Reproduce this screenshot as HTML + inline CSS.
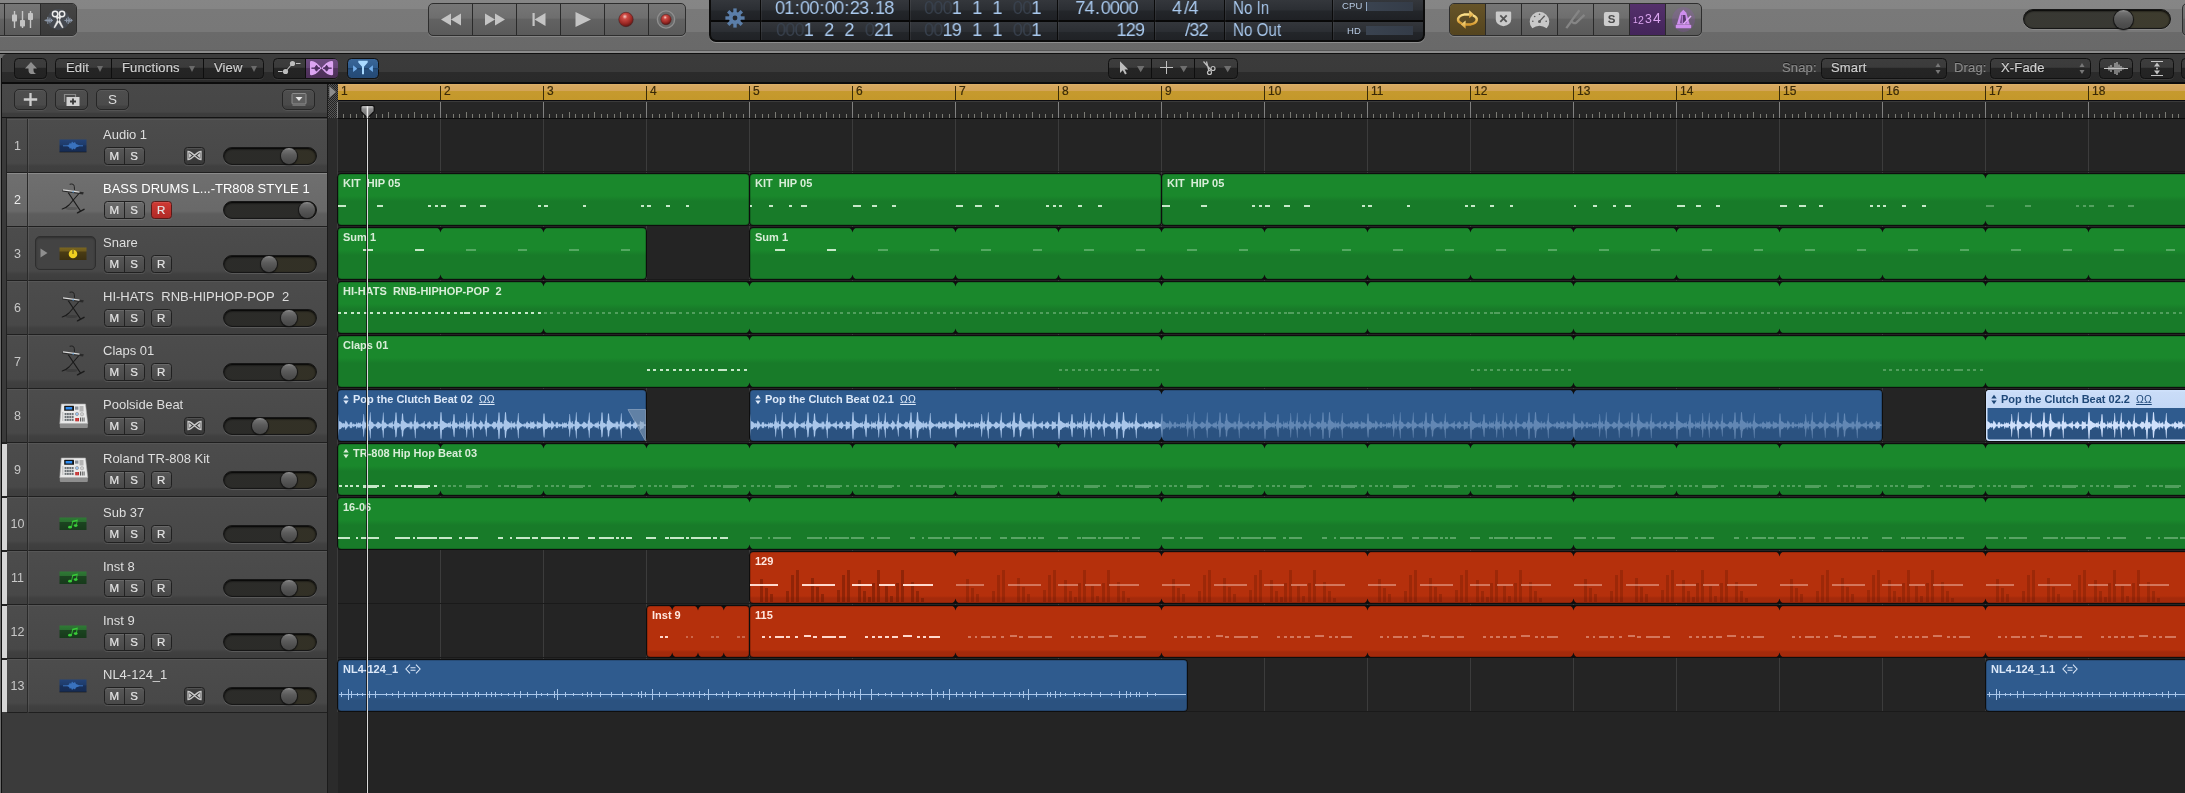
<!DOCTYPE html><html><head><meta charset="utf-8"><title>Logic Pro X</title><style>*{box-sizing:border-box;margin:0;padding:0}
html,body{width:2185px;height:793px;overflow:hidden;background:#242424}
body{font-family:"Liberation Sans",sans-serif;color:#ddd;-webkit-font-smoothing:antialiased}
#root{position:relative;width:2185px;height:793px;overflow:hidden;background:#242424}
.abs{position:absolute}
svg{position:absolute;overflow:visible}
/* top toolbar */
#top{position:absolute;left:0;top:0;width:2185px;height:54px;background:linear-gradient(#868686 0px,#858585 8.5px,#797979 9.5px,#787878 31.5px,#6a6a6a 32.5px,#696969 49.5px,#585858 50px,#585858 51px,#8c8c8c 51.2px,#8c8c8c 52.8px,#101010 53px,#101010 54px)}
.grp{position:absolute;top:3px;height:33px;border:1px solid #2e2e2e;border-radius:5px;overflow:hidden;
 background:linear-gradient(#767676 0,#6e6e6e 45%,#626262 50%,#5a5a5a 100%);box-shadow:0 1px 0 rgba(255,255,255,.18)}
.grp .b{position:absolute;top:0;height:31px;border-left:1px solid #2a2a2a}
.grp .b:first-child{border-left:none}
#lcd{position:absolute;left:709px;top:-6px;width:716px;height:48px;border-radius:7px;border:2px solid #0c0c0c;background:#080808;overflow:hidden;box-shadow:0 1px 0 rgba(255,255,255,.25)}
#lcd .lrow{position:absolute;left:0;width:100%;margin-top:4px;background:linear-gradient(#34373c 0,#2b2e33 50%,#23262a 55%,#1f2125 100%)}
#lcd .lsep{position:absolute;top:0;height:100%;width:1px;background:#0a0a0a;box-shadow:1px 0 0 rgba(255,255,255,.06)}
.lt{position:absolute;white-space:pre;line-height:1.2;font-family:"Liberation Sans",sans-serif}
.dm{color:#3a4350}
.vslider{position:absolute;box-shadow:inset 0 1px 2px #000,0 1px 0 rgba(255,255,255,.12);border:1px solid #161616;background-image:radial-gradient(circle,#47473f 0.55px,transparent 0.9px);background-size:2px 2px;background-color:#26261f}
.knob{position:absolute;border-radius:50%;background:linear-gradient(#969696 0,#707070 14%,#5a5a5a 45%,#4e4e4e 75%,#484848 100%);box-shadow:0 0 0 1px #181818,0 1px 2px #000}
.cl{margin:0 1.1px}.dt{margin:0 1.3px}.gp{display:inline-block;width:11.6px}.g3{display:inline-block;width:3px}
#bar2{position:absolute;left:2px;top:54px;width:2190px;height:30px;border-top-left-radius:5px;
 background:linear-gradient(#3b3b3b 0,#3a3a3a 17.500px,#2b2b2b 18.500px,#2a2a2a 28px,#0c0c0c 28.500px,#0c0c0c 30px)}
.b2,.b2g{position:absolute;top:58px;height:21px;border-radius:4.500px;border:1px solid #111;background:linear-gradient(#3d3d3d 0,#3b3b3b 44%,#252525 47%,#232323 100%);box-shadow:0 1px 0 rgba(255,255,255,.07)}
.b2s{position:absolute;top:59px;width:1px;height:19px;background:#0e0e0e}
.t2{position:absolute;top:60px;-webkit-text-stroke:.2px;letter-spacing:.15px;font-size:13px;line-height:15px;color:#cfcfcf;white-space:pre;text-shadow:0 -1px 0 rgba(0,0,0,.6)}
.tri{position:absolute;top:66px;width:0;height:0;border-left:3.800px solid transparent;border-right:3.800px solid transparent;border-top:6px solid #6a6a6a}
.hb{position:absolute;top:89px;height:21px;border-radius:5px;border:1px solid #262626;background:linear-gradient(#4e4e4e 0,#4a4a4a 78%,#424242 86%,#404040 100%);box-shadow:0 1px 0 rgba(255,255,255,.08),inset 0 1px 0 rgba(255,255,255,.06)}
.th{position:absolute;left:6.500px;width:320.500px;height:54px;border-bottom:1px solid #1f1f1f;border-top:1px solid #565656;
 background:linear-gradient(#4c4c4c 0,#484848 43px,#404040 46px,#3e3e3e 100%)}
.th.sel{border-top:1px solid #8a8a8a;background:linear-gradient(#6f6f6f 0,#696969 37px,#5d5d5d 40px,#5a5a5a 100%)}
.tn{position:absolute;left:6.500px;width:21px;height:54px;margin-top:1px;line-height:54px;text-align:center;padding-left:1px;font-size:12.500px;color:#c8c8c8;border-right:1px solid #2a2a2a;box-shadow:1px 0 0 rgba(255,255,255,.07)}
.tn.sel{color:#ececec}
.tname{position:absolute;left:103.300px;font-size:13px;line-height:16px;color:#dedede;white-space:pre}
.tname.sel{color:#fff}
.ms{position:absolute;height:17.500px;border-radius:3.500px;border:1px solid #202020;background:linear-gradient(#585858,#484848);box-shadow:0 1px 0 rgba(255,255,255,.1),inset 0 1px 0 rgba(255,255,255,.1);display:flex}
.ms i{flex:1;font-style:normal;font-size:11.500px;line-height:16px;text-align:center;color:#e4e4e4;font-weight:normal;-webkit-text-stroke:.2px #e4e4e4;border-left:1px solid #222}
.ms i:first-child{border-left:none}
.ms.sel{background:linear-gradient(#6c6c6c,#5a5a5a)}
.ms.rec{background:linear-gradient(#cf3a34,#b02a26);border-color:#5a1a18}
.rn{position:absolute;top:84px;font-size:12px;line-height:14px;color:#3a2a08;-webkit-text-stroke:.2px #3a2a08}
.rg{position:absolute;box-shadow:0 0 0 1px #0e0e0e,inset 0 0 0 .6px rgba(0,0,0,.3)}
.rl{position:absolute;font-size:11px;font-weight:bold;line-height:13px;white-space:pre}
.ud{position:static;display:inline-block;margin-right:4px;vertical-align:-1.500px;overflow:visible}
.lpi{font-weight:normal;font-size:10.500px;text-decoration:underline;letter-spacing:0}
.arr{font-weight:normal;letter-spacing:-.5px}
.rl,.tname,.t2,.lt,.rn,.tn,.ms,.gtxt{will-change:transform}
</style></head><body>
<div id="root">
<div id="top">
<div class="grp" style="left:-6.800px;width:84px;border-radius:5px">
<div class="b" style="left:0;width:10px"></div>
<div class="b" style="left:10px;width:36px"></div>
<div class="b" style="left:46px;width:37px;background:linear-gradient(#454545,#3a3a3a)"></div>
</div>
<svg style="left:10.200px;top:8px" width="26" height="24" viewBox="0 0 26 24">
<g stroke="#c6c6c6" stroke-width="1.4"><line x1="4.5" y1="3" x2="4.5" y2="20"/><line x1="12.5" y1="3" x2="12.5" y2="20"/><line x1="20.5" y1="3" x2="20.5" y2="20"/></g>
<g fill="#c4c4c4"><rect x="2" y="6.5" width="5" height="7" rx=".8"/><rect x="10" y="12" width="5" height="6.5" rx=".8"/><rect x="18" y="5" width="5" height="7" rx=".8"/></g></svg>
<svg style="left:43px;top:7px" width="32" height="26" viewBox="0 0 32 26">
<ellipse cx="15.500" cy="12.500" rx="11" ry="10.500" fill="#5a6e8c" opacity=".22"/>
<g stroke="#8e9aac" stroke-width="1" fill="none"><path d="M1.500 13.400H10 M21.400 13.400H29.600 M3.200 12.200v2.400 M4.800 9.900v7 M6 11.800v3.200 M7 10.600v5.600 M8.500 11.900v3 M23.500 11.400v4 M25.200 9.800v7.200 M26.200 11.800v3.200 M27 10.900v5 M28.500 12.200v2.400"/></g>
<g stroke="#ececec" stroke-width="1.500" fill="none"><circle cx="12.100" cy="7" r="2.700"/><circle cx="19" cy="7" r="2.700"/></g>
<path d="M12.700 9.600 L14.700 8.900 L20.200 20.400 L19.200 20.800 L15.300 14.600Z M18.400 9.600 L16.400 8.900 L10.900 20.400 L11.900 20.800 L15.800 14.600Z" fill="#ececec" stroke="#ececec" stroke-width=".5" stroke-linejoin="round"/>
<circle cx="15.500" cy="12.300" r=".7" fill="#444"/>
</svg>
<div class="grp" style="left:428px;width:257.500px">
<div class="b" style="left:0px;width:43px"></div>
<div class="b" style="left:43px;width:44px"></div>
<div class="b" style="left:87px;width:44px"></div>
<div class="b" style="left:131px;width:44px"></div>
<div class="b" style="left:175px;width:44px"></div>
<div class="b" style="left:219px;width:36px"></div>
</div>
<svg style="left:428px;top:3px" width="258" height="33" viewBox="0 0 258 33">
<g fill="#c4c4c4">
<path d="M13 16.5 L23 10.5 V22.5Z M23 16.5 L33 10.5 V22.5Z"/>
<path d="M57 10.5 L67 16.5 L57 22.5Z M67 10.5 L77 16.5 L67 22.5Z"/>
<rect x="104.5" y="10" width="2.2" height="13"/><path d="M106.5 16.5 L117.5 10 V23Z"/>
<path d="M147.5 9 L163 16.5 L147.5 24Z"/>
</g>
<defs><radialGradient id="rg" cx=".42" cy=".3" r=".7"><stop offset="0" stop-color="#f6cfc8"/><stop offset=".25" stop-color="#cc4a44"/><stop offset=".7" stop-color="#9a2824"/><stop offset="1" stop-color="#5e1614"/></radialGradient></defs>
<circle cx="198" cy="16.5" r="7.2" fill="url(#rg)" stroke="#4a2020" stroke-width=".6"/>
<circle cx="238" cy="16.5" r="8.6" fill="#6a6a6a" stroke="#8e8e8e" stroke-width="1.4"/>
<circle cx="238" cy="16.5" r="5.2" fill="url(#rg)" stroke="#4a2020" stroke-width=".5"/>
</svg>
<div id="lcd">
<div class="lrow" style="top:0;height:20px"></div><div class="lrow" style="top:22px;height:19px"></div>
<div class="lsep" style="left:48.6px"></div>
<div class="lsep" style="left:197.6px"></div>
<div class="lsep" style="left:345.8px"></div>
<div class="lsep" style="left:442.5px"></div>
<div class="lsep" style="left:512.5px"></div>
<div class="lsep" style="left:620.6px"></div>
</div>
<svg style="left:723.700px;top:7.200px" width="22" height="22" viewBox="-11 -11 22 22"><g fill="#5b7ea8">
<circle r="6.2"/><rect x="-1.7" y="-9.6" width="3.4" height="5" transform="rotate(0)"/><rect x="-1.7" y="-9.6" width="3.4" height="5" transform="rotate(45)"/><rect x="-1.7" y="-9.6" width="3.4" height="5" transform="rotate(90)"/><rect x="-1.7" y="-9.6" width="3.4" height="5" transform="rotate(135)"/><rect x="-1.7" y="-9.6" width="3.4" height="5" transform="rotate(180)"/><rect x="-1.7" y="-9.6" width="3.4" height="5" transform="rotate(225)"/><rect x="-1.7" y="-9.6" width="3.4" height="5" transform="rotate(270)"/><rect x="-1.7" y="-9.6" width="3.4" height="5" transform="rotate(315)"/></g><circle r="2.4" fill="#23262b"/></svg>
<div class="lt" style="left:775.3px;top:-3.5px;font-size:19px;color:#a9c9ee;letter-spacing:-0.8px;transform:scaleX(0.95);transform-origin:left center">01<span class="cl">:</span>00<span class="cl">:</span>00<span class="cl">:</span>23<span class="dt">.</span>18</div>
<div class="lt" style="left:776.2px;top:18.5px;font-size:19px;color:#a9c9ee;letter-spacing:-0.8px;transform:scaleX(0.95);transform-origin:left center"><span class="dm">000</span>1<span class="gp"></span>2<span class="gp"></span>2<span class="gp"></span><span class="dm">0</span>21</div>
<div class="lt" style="left:924.3px;top:-3.5px;font-size:19px;color:#a9c9ee;letter-spacing:-0.8px;transform:scaleX(0.95);transform-origin:left center"><span class="dm">000</span>1<span class="gp"></span>1<span class="gp"></span>1<span class="gp"></span><span class="dm">00</span>1</div>
<div class="lt" style="left:924.3px;top:18.5px;font-size:19px;color:#a9c9ee;letter-spacing:-0.8px;transform:scaleX(0.95);transform-origin:left center"><span class="dm">00</span>19<span class="gp"></span>1<span class="gp"></span>1<span class="gp"></span><span class="dm">00</span>1</div>
<div class="lt" style="right:1047.0px;top:-3.5px;font-size:19px;color:#a9c9ee;letter-spacing:-0.8px;transform:scaleX(0.95);transform-origin:right center">74<span class="dt">.</span>0000</div>
<div class="lt" style="right:1041.0px;top:18.5px;font-size:19px;color:#a9c9ee;letter-spacing:-0.8px;transform:scaleX(0.95);transform-origin:right center">129</div>
<div class="lt" style="left:1172.0px;top:-3.5px;font-size:19px;color:#a9c9ee;letter-spacing:-0.8px;transform:scaleX(0.95);transform-origin:left center">4<span class="g3"></span>/4</div>
<div class="lt" style="left:1185.0px;top:18.5px;font-size:19px;color:#a9c9ee;letter-spacing:-0.8px;transform:scaleX(0.95);transform-origin:left center">/32</div>
<div class="lt" style="left:1233.0px;top:-3.5px;font-size:19px;color:#a9c9ee;letter-spacing:0px;transform:scaleX(0.8);transform-origin:left center">No In</div>
<div class="lt" style="left:1233.0px;top:18.5px;font-size:19px;color:#a9c9ee;letter-spacing:0px;transform:scaleX(0.8);transform-origin:left center">No Out</div>
<div class="lt" style="left:1342px;top:0px;font-size:9.5px;color:#b8cbe4;letter-spacing:.2px">CPU</div>
<div class="lt" style="left:1347px;top:24.5px;font-size:9.5px;color:#b8cbe4;letter-spacing:.2px">HD</div>
<div class="abs" style="left:1366px;top:2px;width:47px;height:9px;background:linear-gradient(90deg,#3a4350,#343c48)"></div>
<div class="abs" style="left:1366px;top:2px;width:1px;height:9px;background:#93a9c6"></div>
<div class="abs" style="left:1366px;top:26px;width:47px;height:9px;background:linear-gradient(90deg,#3a4350,#343c48)"></div>
<div class="grp" style="left:1449px;width:253px">
<div class="b" style="left:0px;width:35px;background:linear-gradient(#665428,#54441f)"></div>
<div class="b" style="left:35px;width:36px;"></div>
<div class="b" style="left:71px;width:36px;"></div>
<div class="b" style="left:107px;width:36px;"></div>
<div class="b" style="left:143px;width:36px;"></div>
<div class="b" style="left:179px;width:36px;background:linear-gradient(#54306b,#43245a)"></div>
<div class="b" style="left:215px;width:37px;"></div>
</div>
<svg style="left:1449px;top:3px" width="253" height="33" viewBox="0 0 253 33">
<defs><linearGradient id="gold" x1="0" y1="0" x2="0" y2="1"><stop offset="0" stop-color="#fbe08a"/><stop offset="1" stop-color="#d79a2e"/></linearGradient></defs>
<g fill="none" stroke="url(#gold)" stroke-width="2.500" stroke-linecap="butt">
<path d="M13 20.700 A9.300 5.200 0 0 1 15 11.600 L20.500 11.400"/><path d="M23.800 12.300 A9.300 5.200 0 0 1 21.800 21.400 L16.300 21.600"/></g>
<path d="M20.200 7.200 L25 11.400 L20.200 15.300Z" fill="url(#gold)"/><path d="M16.600 17.400 L11.800 21.500 L16.600 25.800Z" fill="url(#gold)"/>
<!-- replace shield -->
<path d="M48 8.500 H61 Q62.200 8.500 62.200 9.700 V16.500 Q62.200 21.500 54.500 23.200 Q46.800 21.500 46.800 16.500 V9.700 Q46.800 8.500 48 8.500Z" fill="#cacaca"/>
<path d="M51.300 12.300 L57.700 18.800 M57.700 12.300 L51.300 18.800" stroke="#555" stroke-width="1.800"/>
<!-- gauge -->
<path d="M83.300 25.300 A9.800 9.800 0 1 1 97.700 25.300 Q90.500 20.300 83.300 25.300Z" fill="#c8c8c8"/>
<path d="M90.500 18.400 L95.700 12.700" stroke="#5a5a5a" stroke-width="1.300"/><circle cx="90.500" cy="18.400" r="1.500" fill="#5a5a5a"/>
<g fill="#5a5a5a"><circle cx="83.800" cy="18.300" r=".8"/><circle cx="85.700" cy="13.500" r=".8"/><circle cx="90.500" cy="11.300" r=".8"/><circle cx="97.200" cy="18.300" r=".8"/></g>
<!-- tuning fork -->
<g stroke="#858585" stroke-width="2.300" fill="none" stroke-linecap="butt" stroke-linejoin="round"><path d="M117.300 25.100 L122.800 17.800"/><path d="M130.400 7.300 L122.800 17.400 Q122.300 19 124.200 19.800 Q126 20.600 127 19.800 L135.500 11.800"/></g>
<!-- solo S -->
<rect x="154.900" y="9" width="15.300" height="14.100" rx="2" fill="#cdcdcd"/>
<!-- 1234 -->
<!-- metronome -->
<ellipse cx="234.500" cy="16.500" rx="11.500" ry="12.500" fill="#a050d0" opacity=".2"/>
<path d="M231.300 9.800 L234.300 6.800 L237.300 9.800 L240.800 21.400 H227.800Z" fill="#cf8fee"/>
<rect x="226.800" y="21.800" width="15.400" height="3.400" rx=".7" fill="#cf8fee"/>
<path d="M232.400 12 H236.300 L237.500 20.200 H231.200Z" fill="#5a3870"/>
<path d="M233.200 12.200 V20" stroke="#cf8fee" stroke-width="1.100"/>
<path d="M234.500 21 L242 13" stroke="#e2b0f8" stroke-width="1.500"/>
</svg>
<div class="gtxt abs" style="left:1603.900px;top:12px;width:15.300px;height:14px;line-height:14px;text-align:center;font-weight:bold;font-size:11.500px;color:#4c4c4c">S</div>
<div class="gtxt abs" style="left:1632.9px;top:16.31px;font-size:8.5px;line-height:1;color:#dba4f0;white-space:pre">1</div>
<div class="gtxt abs" style="left:1638.0px;top:14.50px;font-size:10.5px;line-height:1;color:#dba4f0;white-space:pre">2</div>
<div class="gtxt abs" style="left:1645.4px;top:12.87px;font-size:12.3px;line-height:1;color:#dba4f0;white-space:pre">3</div>
<div class="gtxt abs" style="left:1653.2px;top:11.33px;font-size:14px;line-height:1;color:#dba4f0;white-space:pre">4</div>
<div class="vslider" style="left:2023px;top:9px;width:148px;height:20px;border-radius:10px;background-image:radial-gradient(circle,rgba(130,130,110,.3) 0.55px,transparent 0.9px),linear-gradient(90deg,#2a2a28 0,#2a2a28 100px,#302e22 100px);background-size:2px 2px,100% 100%"></div>
<div class="knob" style="left:2114px;top:9.5px;width:19px;height:19px"></div>
<div class="grp" style="left:2182px;width:20px"></div>
</div>
<div class="abs" style="left:0;top:54px;width:2185px;height:30px;background:#6a6a6a"></div>
<div id="bar2"></div>
<div class="b2 " style="left:14.0px;width:33.0px;"></div>
<svg style="left:23px;top:61px" width="16" height="14" viewBox="0 0 16 14"><path d="M8 1 L14 7.5 H10.5 V9 Q10.5 12 13.5 13 H8 Q5.5 12.5 5.500 9 V7.5 H2Z" fill="#8e8e8e"/></svg>
<div class="b2g" style="left:55px;width:209px"></div>
<div class="b2s" style="left:111px"></div><div class="b2s" style="left:203px"></div>
<div class="t2" style="left:66px">Edit</div><div class="tri" style="left:96.600px"></div>
<div class="t2" style="left:122px">Functions</div><div class="tri" style="left:189px"></div>
<div class="t2" style="left:213.500px">View</div><div class="tri" style="left:251px"></div>
<div class="b2g" style="left:273px;width:65px"></div>
<div class="abs" style="left:305.500px;top:59px;width:32px;height:19px;border-radius:0 4px 4px 0;background:linear-gradient(#6d4c80 0,#674679 45%,#523460 50%,#4d3058 100%)"></div>
<div class="b2s" style="left:305px"></div>
<svg style="left:273px;top:58px" width="65" height="21" viewBox="0 0 65 21">
<g stroke="#bdbdbd" stroke-width="1.100" fill="none"><path d="M5 13.500H9.500 M12.500 13.500 L19.500 5.500 M23 5.500 H27.500"/></g><circle cx="12.500" cy="13.500" r="2.600" fill="#bdbdbd"/><circle cx="19.500" cy="5.500" r="2.600" fill="#bdbdbd"/>
<path d="M37 4.200 Q37 2.800 38.500 3 C46.500 3.300 50.500 17 58.500 17.300 Q60.100 17.500 60.100 16 V4.200 Q60.100 2.800 58.500 3 C50.500 3.300 46.500 17 38.500 17.300 Q37 17.500 37 16Z" fill="#dca4f2"/>
<path d="M38.500 10.200 H41.500 L42.500 8.500 L43.500 7.200 L44.500 8.800 L45.500 9.600 L47 10.200 L45.500 10.900 L44.500 11.700 L43.500 13.200 L42.500 11.900 L41.500 10.200Z M58.600 10.200 H55.600 L54.600 8.500 L53.600 7.200 L52.600 8.800 L51.600 9.600 L50.100 10.200 L51.600 10.900 L52.600 11.700 L53.600 13.200 L54.600 11.900 L55.600 10.200Z" fill="#4d2f60" stroke="#4d2f60" stroke-width=".9" stroke-linejoin="round"/>
</svg>
<div class="b2g" style="left:346.500px;width:32.200px;background:linear-gradient(#3a6698,#2f5c8e 48%,#28507e 52%,#254a76)"></div>
<svg style="left:346.500px;top:58px" width="33" height="21" viewBox="0 0 33 21">
<path d="M1 10.800H32" stroke="#1b3c62" stroke-width="1"/>
<path d="M11.300 2.800 H20.700 V4.500 L17 8.800 V16.200 H15 V8.800 L11.300 4.500Z" fill="#a9d9ff"/>
<path d="M6.100 7.300 L10.300 10.700 L6.100 14.100Z M25.900 7.300 L21.700 10.700 L25.900 14.100Z" fill="#74aeea"/>
</svg>
<div class="b2g" style="left:1107.800px;width:130px"></div>
<div class="b2s" style="left:1151px"></div><div class="b2s" style="left:1194px"></div>
<svg style="left:1108px;top:58px" width="130" height="21" viewBox="0 0 130 21">
<path d="M12 3.300 V15 L14.800 12.300 L17 16.500 L18.800 15.600 L16.600 11.600 H20.200Z" fill="#bdbdbd"/>
<path d="M29 8 H36.400 L32.700 14.200Z M72 8 H79.400 L75.700 14.200Z M116 8 H123.400 L119.700 14.200Z" fill="#6e6e6e"/>
<path d="M52 9.500H65 M58.500 3V16" stroke="#c2c2c2" stroke-width="1"/>
<g stroke="#c0c0c0" stroke-width="1.200" fill="none"><path d="M95.500 3.500 L103 12 M98.500 3.500 L101 13.500"/><circle cx="105" cy="10.500" r="2"/><circle cx="101.500" cy="14.500" r="2"/></g>
</svg>
<div class="t2" style="left:1782px;color:#8a8a8a">Snap:</div>
<div class="b2g" style="left:1820.500px;width:126.500px"></div><div class="t2" style="left:1831px">Smart</div>
<div class="t2" style="left:1954px;color:#8a8a8a">Drag:</div>
<div class="b2g" style="left:1990px;width:101px"></div><div class="t2" style="left:2001px">X-Fade</div>
<svg style="left:1934.5px;top:62px" width="6" height="13" viewBox="0 0 6 13"><path d="M3 1 L5.500 5 H.5Z M3 12 L5.500 8 H.5Z" fill="#777"/></svg>
<svg style="left:2078.5px;top:62px" width="6" height="13" viewBox="0 0 6 13"><path d="M3 1 L5.500 5 H.5Z M3 12 L5.500 8 H.5Z" fill="#777"/></svg>
<div class="b2g" style="left:2099px;width:33.500px"></div>
<svg style="left:2099px;top:58px" width="34" height="21" viewBox="0 0 34 21"><g stroke="#c4c4c4" stroke-width="1.100"><path d="M5 10.500H29 M10 8.500v4 M12 7v7 M14 9v3 M16 5v11 M18 4v13 M20 6.500v8 M22 8v5 M24 9.500v2"/></g></svg>
<div class="b2g" style="left:2140px;width:33.500px"></div>
<svg style="left:2140px;top:58px" width="34" height="21" viewBox="0 0 34 21"><g stroke="#c4c4c4" stroke-width="1.100"><path d="M11 3.500H23 M11 17.500H23"/></g><path d="M17 4.500 L20 8.500 H14Z M17 16.500 L20 12.500 H14Z" fill="#c4c4c4"/><circle cx="17" cy="10.500" r="1" fill="#c4c4c4"/></svg>
<div class="b2g" style="left:2181px;width:20px"></div>
<div class="abs" style="left:0;top:54px;width:1.100px;height:739px;background:#6c6c6c"></div>
<div class="abs" style="left:1.100px;top:58px;width:.9px;height:735px;background:#101010"></div>
<div class="abs" style="left:2px;top:84px;width:325px;height:34px;background:linear-gradient(#484848 0,#464646 28px,#3d3d3d 29.500px,#3c3c3c 33.200px,#141414 33.500px)"></div>
<div class="abs" style="left:2px;top:118px;width:325px;height:675px;background:#3b3b3b"></div>
<div class="abs" style="left:2px;top:118px;width:4.500px;height:594px;background:#3a3a3a"></div>
<div class="abs" style="left:6.200px;top:118px;width:.9px;height:594px;background:#222"></div>
<div class="hb" style="left:14.0px;width:33.0px"></div>
<div class="hb" style="left:55.0px;width:33.0px"></div>
<div class="hb" style="left:96.0px;width:33.0px"></div>
<div class="hb" style="left:282.3px;width:32.5px"></div>
<svg style="left:14px;top:89px" width="33" height="21" viewBox="0 0 33 21"><path d="M16.500 4V17 M9.800 10.500H23.200" stroke="#cecece" stroke-width="2.300"/></svg>
<svg style="left:55px;top:89px" width="33" height="21" viewBox="0 0 33 21"><path d="M9.500 5.500H20.500V8" stroke="#8a8a8a" stroke-width="1.200" fill="none"/><path d="M9.500 5V13" stroke="#8a8a8a" stroke-width="1.200"/><rect x="11.500" y="8" width="13" height="9" fill="#d2d2d2"/><path d="M18 9.500V15.500 M15 12.500H21" stroke="#3a3a3a" stroke-width="1.800"/></svg>
<div class="abs gtxt" style="left:96px;top:91.500px;width:33px;text-align:center;font-size:13.500px;line-height:16px;color:#dcdcdc">S</div>
<svg style="left:282.500px;top:89px" width="32" height="21" viewBox="0 0 32 21"><rect x="9" y="4.500" width="14" height="10.500" rx="1" fill="#5e5e5e" stroke="#8c8c8c" stroke-width="1"/><path d="M9.500 16.200H22.500" stroke="#777" stroke-width="1.400"/><path d="M12.500 8 H19.500 L16 12Z" fill="#e8e8e8"/></svg>
<div class="th" style="top:119px"></div>
<div class="tn" style="top:118px">1</div>
<svg style="left:59px;top:139px" width="28" height="14" viewBox="0 0 28 14"><defs><linearGradient id="ab" x1="0" y1="0" x2="0" y2="1"><stop offset="0" stop-color="#234378"/><stop offset=".45" stop-color="#1e3b6a"/><stop offset=".5" stop-color="#18305a"/><stop offset="1" stop-color="#162c54"/></linearGradient></defs><rect x=".5" y=".5" width="27" height="12.500" fill="url(#ab)"/><rect x=".5" y="12.500" width="27" height="1.200" fill="#1a1a1a" opacity=".5"/><path d="M4 6.800H24" stroke="#3972be" stroke-width="1"/><path d="M8 6.800 L10 5.500 L11 3.500 L12 5 L13 2.500 L14.500 4 L16 3 L17 5 L19 5.800 L21 6.800 L19 7.800 L17 8.600 L16 10.500 L14.500 9.500 L13 11 L12 8.800 L11 10 L10 8 Z" fill="#3972be"/></svg>
<div class="tname" style="top:127px">Audio 1</div>
<div class="ms" style="left:103.800px;top:147.2px;width:40.500px"><i>M</i><i>S</i></div>
<div class="ms" style="left:183.700px;top:147.2px;width:20.500px;background:linear-gradient(#3e3e3e,#383838)"></div>
<svg style="left:183.700px;top:147.2px" width="21" height="17" viewBox="0 0 21 17"><path d="M4 4.500 V12.500 C9 12.500 12 4.500 17 4.500 V12.500 C12 12.500 9 4.500 4 4.500Z" fill="none" stroke="#c8c8c8" stroke-width="1.300"/><path d="M5 6 L8 8.500 L5 11Z M16 6 L13 8.500 L16 11Z" fill="#c8c8c8"/></svg>
<div class="vslider" style="left:222.500px;top:147.0px;width:94.300px;height:17.500px;border-radius:9px;background-image:radial-gradient(circle,rgba(120,120,100,.22) 0.55px,transparent 0.9px),linear-gradient(90deg,#212121 0,#212121 66.0px,#29271e 66.0px);background-size:2px 2px,100% 100%"></div>
<div class="knob" style="left:280.5px;top:147.7px;width:16px;height:16px"></div>
<div class="th sel" style="top:173px"></div>
<div class="tn sel" style="top:172px">2</div>
<svg style="left:60px;top:182px" width="26" height="32" viewBox="0 0 26 32"><ellipse cx="11.500" cy="26.500" rx="6" ry="1.600" fill="#000" opacity=".16"/><g stroke="#1b1b1b" fill="none" stroke-linecap="round"><path d="M10 2.200 Q14 1.200 14.300 4.500 L14.500 7.500" stroke-width=".9"/><path d="M8.500 11 L20.500 29" stroke-width="1.250"/><path d="M17.500 30.800 L24 27.300" stroke-width="1.500"/><path d="M18.500 12 L9 23 Q6 26 2.200 27" stroke-width="1.100"/></g><path d="M2.800 7.400 L23.800 10.300 L23 12.600 L2.200 9.600Z" fill="#2a2a2a"/><path d="M3 7.900 L19.500 10.200" stroke="#dcdcdc" stroke-width="1.200"/><path d="M12.500 9.800 L14 10" stroke="#5aa0e0" stroke-width="1.200"/></svg>
<div class="tname sel" style="top:181px">BASS DRUMS L...-TR808 STYLE 1</div>
<div class="ms sel" style="left:103.800px;top:201.2px;width:40.500px"><i>M</i><i>S</i></div>
<div class="ms rec" style="left:150.800px;top:201.2px;width:20.500px"><i>R</i></div>
<div class="vslider" style="left:222.500px;top:201.0px;width:94.300px;height:17.500px;border-radius:9px;background-image:radial-gradient(circle,rgba(120,120,100,.22) 0.55px,transparent 0.9px),linear-gradient(90deg,#212121 0,#212121 84.0px,#29271e 84.0px);background-size:2px 2px,100% 100%"></div>
<div class="knob" style="left:298.5px;top:201.7px;width:16px;height:16px"></div>
<div class="th" style="top:227px"></div>
<div class="tn" style="top:226px">3</div>
<div class="abs" style="left:35px;top:236px;width:61px;height:34px;border-radius:5px;border:1px solid #2e2e2e;background:#434343;box-shadow:inset 0 1px 2px rgba(0,0,0,.3)"></div>
<svg style="left:40px;top:248px" width="8" height="10" viewBox="0 0 8 10"><path d="M.5 .5 L7.500 5 L.5 9.500Z" fill="#8f8f8f"/></svg>
<svg style="left:59px;top:247px" width="28" height="14" viewBox="0 0 28 14"><defs><linearGradient id="sb" x1="0" y1="0" x2="0" y2="1"><stop offset="0" stop-color="#7a6620"/><stop offset=".3" stop-color="#6e5a1c"/><stop offset=".34" stop-color="#4a3c14"/><stop offset="1" stop-color="#3c3010"/></linearGradient></defs><rect x=".5" y=".5" width="27" height="12.500" fill="url(#sb)"/><circle cx="14" cy="7" r="4.300" fill="#f0cf20"/><path d="M14 3V7" stroke="#5a4a10" stroke-width="1"/></svg>
<div class="tname" style="top:235px">Snare</div>
<div class="ms" style="left:103.800px;top:255.2px;width:40.500px"><i>M</i><i>S</i></div>
<div class="ms" style="left:150.800px;top:255.2px;width:20.500px"><i>R</i></div>
<div class="vslider" style="left:222.500px;top:255.0px;width:94.300px;height:17.500px;border-radius:9px;background-image:radial-gradient(circle,rgba(120,120,100,.22) 0.55px,transparent 0.9px),linear-gradient(90deg,#212121 0,#212121 46.5px,#29271e 46.5px);background-size:2px 2px,100% 100%"></div>
<div class="knob" style="left:261.0px;top:255.7px;width:16px;height:16px"></div>
<div class="th" style="top:281px"></div>
<div class="tn" style="top:280px">6</div>
<svg style="left:60px;top:290px" width="26" height="32" viewBox="0 0 26 32"><ellipse cx="11.500" cy="26.500" rx="6" ry="1.600" fill="#000" opacity=".16"/><g stroke="#1b1b1b" fill="none" stroke-linecap="round"><path d="M10 2.200 Q14 1.200 14.300 4.500 L14.500 7.500" stroke-width=".9"/><path d="M8.500 11 L20.500 29" stroke-width="1.250"/><path d="M17.500 30.800 L24 27.300" stroke-width="1.500"/><path d="M18.500 12 L9 23 Q6 26 2.200 27" stroke-width="1.100"/></g><path d="M2.800 7.400 L23.800 10.300 L23 12.600 L2.200 9.600Z" fill="#2a2a2a"/><path d="M3 7.900 L19.500 10.200" stroke="#dcdcdc" stroke-width="1.200"/><path d="M12.500 9.800 L14 10" stroke="#5aa0e0" stroke-width="1.200"/></svg>
<div class="tname" style="top:289px">HI-HATS&nbsp; RNB-HIPHOP-POP&nbsp; 2</div>
<div class="ms" style="left:103.800px;top:309.2px;width:40.500px"><i>M</i><i>S</i></div>
<div class="ms" style="left:150.800px;top:309.2px;width:20.500px"><i>R</i></div>
<div class="vslider" style="left:222.500px;top:309.0px;width:94.300px;height:17.500px;border-radius:9px;background-image:radial-gradient(circle,rgba(120,120,100,.22) 0.55px,transparent 0.9px),linear-gradient(90deg,#212121 0,#212121 66.0px,#29271e 66.0px);background-size:2px 2px,100% 100%"></div>
<div class="knob" style="left:280.5px;top:309.7px;width:16px;height:16px"></div>
<div class="th" style="top:335px"></div>
<div class="tn" style="top:334px">7</div>
<svg style="left:60px;top:344px" width="26" height="32" viewBox="0 0 26 32"><ellipse cx="11.500" cy="26.500" rx="6" ry="1.600" fill="#000" opacity=".16"/><g stroke="#1b1b1b" fill="none" stroke-linecap="round"><path d="M10 2.200 Q14 1.200 14.300 4.500 L14.500 7.500" stroke-width=".9"/><path d="M8.500 11 L20.500 29" stroke-width="1.250"/><path d="M17.500 30.800 L24 27.300" stroke-width="1.500"/><path d="M18.500 12 L9 23 Q6 26 2.200 27" stroke-width="1.100"/></g><path d="M2.800 7.400 L23.800 10.300 L23 12.600 L2.200 9.600Z" fill="#2a2a2a"/><path d="M3 7.900 L19.500 10.200" stroke="#dcdcdc" stroke-width="1.200"/><path d="M12.500 9.800 L14 10" stroke="#5aa0e0" stroke-width="1.200"/></svg>
<div class="tname" style="top:343px">Claps 01</div>
<div class="ms" style="left:103.800px;top:363.2px;width:40.500px"><i>M</i><i>S</i></div>
<div class="ms" style="left:150.800px;top:363.2px;width:20.500px"><i>R</i></div>
<div class="vslider" style="left:222.500px;top:363.0px;width:94.300px;height:17.500px;border-radius:9px;background-image:radial-gradient(circle,rgba(120,120,100,.22) 0.55px,transparent 0.9px),linear-gradient(90deg,#212121 0,#212121 66.0px,#29271e 66.0px);background-size:2px 2px,100% 100%"></div>
<div class="knob" style="left:280.5px;top:363.7px;width:16px;height:16px"></div>
<div class="th" style="top:389px"></div>
<div class="tn" style="top:388px">8</div>
<svg style="left:59px;top:402px" width="30" height="27" viewBox="0 0 30 27"><path d="M2.300 2 H26.500 L28.800 21.500 H.8Z" fill="#e9e9e9" stroke="#a8a8a8" stroke-width=".6"/><path d="M.8 21.500 H28.800 V25 Q28.800 26 27.800 26 H1.800 Q.8 26 .8 25Z" fill="#8e8e8e"/><path d="M.8 21.500H28.800" stroke="#c8c8c8" stroke-width=".6"/><rect x="5.200" y="3.800" width="9.800" height="5" rx=".4" fill="#141414"/><rect x="6.600" y="5" width="6.600" height="2.500" fill="#2f8cf0"/><g fill="#6a7074"><rect x="5.6" y="11.0" width="1.900" height="2.100"/><rect x="7.9" y="11.0" width="1.900" height="2.100"/><rect x="10.3" y="11.0" width="1.900" height="2.100"/><rect x="12.7" y="11.0" width="1.900" height="2.100"/><rect x="5.6" y="13.9" width="1.900" height="2.100"/><rect x="7.9" y="13.9" width="1.900" height="2.100"/><rect x="10.3" y="13.9" width="1.900" height="2.100"/><rect x="12.7" y="13.9" width="1.900" height="2.100"/><rect x="5.6" y="16.8" width="1.900" height="2.100"/><rect x="7.9" y="16.8" width="1.900" height="2.100"/><rect x="10.3" y="16.8" width="1.900" height="2.100"/><rect x="12.7" y="16.8" width="1.900" height="2.100"/></g><rect x="3.300" y="10" width="1" height="9" fill="#b8b8b8"/><g fill="#8a9098"><rect x="16" y="4.500" width="3.400" height="3.200"/><rect x="20.500" y="4" width="4" height="5.500" fill="#b4b4b4"/></g><circle cx="18" cy="12" r="1.600" fill="#9cc4ee" stroke="#777" stroke-width=".5"/><circle cx="23" cy="12.200" r="1.700" fill="#d0d0d0" stroke="#999" stroke-width=".5"/><rect x="16.300" y="16" width="3.600" height="3.300" fill="#c01818"/><path d="M18.100 16V19.300" stroke="#e8e8e8" stroke-width=".4"/><g fill="#4a4a4a"><rect x="21" y="15.500" width=".9" height="4"/><rect x="22.800" y="15.500" width=".9" height="4"/><rect x="24.600" y="15.500" width=".9" height="4"/></g></svg>
<div class="tname" style="top:397px">Poolside Beat</div>
<div class="ms" style="left:103.800px;top:417.2px;width:40.500px"><i>M</i><i>S</i></div>
<div class="ms" style="left:183.700px;top:417.2px;width:20.500px;background:linear-gradient(#3e3e3e,#383838)"></div>
<svg style="left:183.700px;top:417.2px" width="21" height="17" viewBox="0 0 21 17"><path d="M4 4.500 V12.500 C9 12.500 12 4.500 17 4.500 V12.500 C12 12.500 9 4.500 4 4.500Z" fill="none" stroke="#c8c8c8" stroke-width="1.300"/><path d="M5 6 L8 8.500 L5 11Z M16 6 L13 8.500 L16 11Z" fill="#c8c8c8"/></svg>
<div class="vslider" style="left:222.500px;top:417.0px;width:94.300px;height:17.500px;border-radius:9px;background-image:radial-gradient(circle,rgba(120,120,100,.22) 0.55px,transparent 0.9px),linear-gradient(90deg,#212121 0,#212121 37.5px,#29271e 37.5px);background-size:2px 2px,100% 100%"></div>
<div class="knob" style="left:252.0px;top:417.7px;width:16px;height:16px"></div>
<div class="th" style="top:443px"></div>
<div class="tn" style="top:442px">9</div>
<svg style="left:59px;top:456px" width="30" height="27" viewBox="0 0 30 27"><path d="M2.300 2 H26.500 L28.800 21.500 H.8Z" fill="#e9e9e9" stroke="#a8a8a8" stroke-width=".6"/><path d="M.8 21.500 H28.800 V25 Q28.800 26 27.800 26 H1.800 Q.8 26 .8 25Z" fill="#8e8e8e"/><path d="M.8 21.500H28.800" stroke="#c8c8c8" stroke-width=".6"/><rect x="5.200" y="3.800" width="9.800" height="5" rx=".4" fill="#141414"/><rect x="6.600" y="5" width="6.600" height="2.500" fill="#2f8cf0"/><g fill="#6a7074"><rect x="5.6" y="11.0" width="1.900" height="2.100"/><rect x="7.9" y="11.0" width="1.900" height="2.100"/><rect x="10.3" y="11.0" width="1.900" height="2.100"/><rect x="12.7" y="11.0" width="1.900" height="2.100"/><rect x="5.6" y="13.9" width="1.900" height="2.100"/><rect x="7.9" y="13.9" width="1.900" height="2.100"/><rect x="10.3" y="13.9" width="1.900" height="2.100"/><rect x="12.7" y="13.9" width="1.900" height="2.100"/><rect x="5.6" y="16.8" width="1.900" height="2.100"/><rect x="7.9" y="16.8" width="1.900" height="2.100"/><rect x="10.3" y="16.8" width="1.900" height="2.100"/><rect x="12.7" y="16.8" width="1.900" height="2.100"/></g><rect x="3.300" y="10" width="1" height="9" fill="#b8b8b8"/><g fill="#8a9098"><rect x="16" y="4.500" width="3.400" height="3.200"/><rect x="20.500" y="4" width="4" height="5.500" fill="#b4b4b4"/></g><circle cx="18" cy="12" r="1.600" fill="#9cc4ee" stroke="#777" stroke-width=".5"/><circle cx="23" cy="12.200" r="1.700" fill="#d0d0d0" stroke="#999" stroke-width=".5"/><rect x="16.300" y="16" width="3.600" height="3.300" fill="#c01818"/><path d="M18.100 16V19.300" stroke="#e8e8e8" stroke-width=".4"/><g fill="#4a4a4a"><rect x="21" y="15.500" width=".9" height="4"/><rect x="22.800" y="15.500" width=".9" height="4"/><rect x="24.600" y="15.500" width=".9" height="4"/></g></svg>
<div class="tname" style="top:451px">Roland TR-808 Kit</div>
<div class="ms" style="left:103.800px;top:471.2px;width:40.500px"><i>M</i><i>S</i></div>
<div class="ms" style="left:150.800px;top:471.2px;width:20.500px"><i>R</i></div>
<div class="vslider" style="left:222.500px;top:471.0px;width:94.300px;height:17.500px;border-radius:9px;background-image:radial-gradient(circle,rgba(120,120,100,.22) 0.55px,transparent 0.9px),linear-gradient(90deg,#212121 0,#212121 66.0px,#29271e 66.0px);background-size:2px 2px,100% 100%"></div>
<div class="knob" style="left:280.5px;top:471.7px;width:16px;height:16px"></div>
<div class="th" style="top:497px"></div>
<div class="tn" style="top:496px">10</div>
<svg style="left:59px;top:517px" width="28" height="14" viewBox="0 0 28 14"><defs><linearGradient id="gb" x1="0" y1="0" x2="0" y2="1"><stop offset="0" stop-color="#2f7a35"/><stop offset=".34" stop-color="#2a6e30"/><stop offset=".36" stop-color="#1b4420"/><stop offset="1" stop-color="#173a1b"/></linearGradient></defs><rect x=".5" y=".5" width="27" height="12.500" fill="url(#gb)"/><g fill="#38cc38"><ellipse cx="11" cy="10.200" rx="1.900" ry="1.400"/><ellipse cx="16.700" cy="8.600" rx="1.900" ry="1.400"/><path d="M12.100 10.200 L13.300 3.800 L18.800 2.400 L17.800 8.600 L17 8.600 L17.700 4.200 L13.900 5.200 L12.900 10.300Z"/></g></svg>
<div class="tname" style="top:505px">Sub 37</div>
<div class="ms" style="left:103.800px;top:525.2px;width:40.500px"><i>M</i><i>S</i></div>
<div class="ms" style="left:150.800px;top:525.2px;width:20.500px"><i>R</i></div>
<div class="vslider" style="left:222.500px;top:525.0px;width:94.300px;height:17.500px;border-radius:9px;background-image:radial-gradient(circle,rgba(120,120,100,.22) 0.55px,transparent 0.9px),linear-gradient(90deg,#212121 0,#212121 66.0px,#29271e 66.0px);background-size:2px 2px,100% 100%"></div>
<div class="knob" style="left:280.5px;top:525.7px;width:16px;height:16px"></div>
<div class="th" style="top:551px"></div>
<div class="tn" style="top:550px">11</div>
<svg style="left:59px;top:571px" width="28" height="14" viewBox="0 0 28 14"><defs><linearGradient id="gb" x1="0" y1="0" x2="0" y2="1"><stop offset="0" stop-color="#2f7a35"/><stop offset=".34" stop-color="#2a6e30"/><stop offset=".36" stop-color="#1b4420"/><stop offset="1" stop-color="#173a1b"/></linearGradient></defs><rect x=".5" y=".5" width="27" height="12.500" fill="url(#gb)"/><g fill="#38cc38"><ellipse cx="11" cy="10.200" rx="1.900" ry="1.400"/><ellipse cx="16.700" cy="8.600" rx="1.900" ry="1.400"/><path d="M12.100 10.200 L13.300 3.800 L18.800 2.400 L17.800 8.600 L17 8.600 L17.700 4.200 L13.900 5.200 L12.900 10.300Z"/></g></svg>
<div class="tname" style="top:559px">Inst 8</div>
<div class="ms" style="left:103.800px;top:579.2px;width:40.500px"><i>M</i><i>S</i></div>
<div class="ms" style="left:150.800px;top:579.2px;width:20.500px"><i>R</i></div>
<div class="vslider" style="left:222.500px;top:579.0px;width:94.300px;height:17.500px;border-radius:9px;background-image:radial-gradient(circle,rgba(120,120,100,.22) 0.55px,transparent 0.9px),linear-gradient(90deg,#212121 0,#212121 66.0px,#29271e 66.0px);background-size:2px 2px,100% 100%"></div>
<div class="knob" style="left:280.5px;top:579.7px;width:16px;height:16px"></div>
<div class="th" style="top:605px"></div>
<div class="tn" style="top:604px">12</div>
<svg style="left:59px;top:625px" width="28" height="14" viewBox="0 0 28 14"><defs><linearGradient id="gb" x1="0" y1="0" x2="0" y2="1"><stop offset="0" stop-color="#2f7a35"/><stop offset=".34" stop-color="#2a6e30"/><stop offset=".36" stop-color="#1b4420"/><stop offset="1" stop-color="#173a1b"/></linearGradient></defs><rect x=".5" y=".5" width="27" height="12.500" fill="url(#gb)"/><g fill="#38cc38"><ellipse cx="11" cy="10.200" rx="1.900" ry="1.400"/><ellipse cx="16.700" cy="8.600" rx="1.900" ry="1.400"/><path d="M12.100 10.200 L13.300 3.800 L18.800 2.400 L17.800 8.600 L17 8.600 L17.700 4.200 L13.900 5.200 L12.900 10.300Z"/></g></svg>
<div class="tname" style="top:613px">Inst 9</div>
<div class="ms" style="left:103.800px;top:633.2px;width:40.500px"><i>M</i><i>S</i></div>
<div class="ms" style="left:150.800px;top:633.2px;width:20.500px"><i>R</i></div>
<div class="vslider" style="left:222.500px;top:633.0px;width:94.300px;height:17.500px;border-radius:9px;background-image:radial-gradient(circle,rgba(120,120,100,.22) 0.55px,transparent 0.9px),linear-gradient(90deg,#212121 0,#212121 66.0px,#29271e 66.0px);background-size:2px 2px,100% 100%"></div>
<div class="knob" style="left:280.5px;top:633.7px;width:16px;height:16px"></div>
<div class="th" style="top:659px"></div>
<div class="tn" style="top:658px">13</div>
<svg style="left:59px;top:679px" width="28" height="14" viewBox="0 0 28 14"><defs><linearGradient id="ab" x1="0" y1="0" x2="0" y2="1"><stop offset="0" stop-color="#234378"/><stop offset=".45" stop-color="#1e3b6a"/><stop offset=".5" stop-color="#18305a"/><stop offset="1" stop-color="#162c54"/></linearGradient></defs><rect x=".5" y=".5" width="27" height="12.500" fill="url(#ab)"/><rect x=".5" y="12.500" width="27" height="1.200" fill="#1a1a1a" opacity=".5"/><path d="M4 6.800H24" stroke="#3972be" stroke-width="1"/><path d="M8 6.800 L10 5.500 L11 3.500 L12 5 L13 2.500 L14.500 4 L16 3 L17 5 L19 5.800 L21 6.800 L19 7.800 L17 8.600 L16 10.500 L14.500 9.500 L13 11 L12 8.800 L11 10 L10 8 Z" fill="#3972be"/></svg>
<div class="tname" style="top:667px">NL4-124_1</div>
<div class="ms" style="left:103.800px;top:687.2px;width:40.500px"><i>M</i><i>S</i></div>
<div class="ms" style="left:183.700px;top:687.2px;width:20.500px;background:linear-gradient(#3e3e3e,#383838)"></div>
<svg style="left:183.700px;top:687.2px" width="21" height="17" viewBox="0 0 21 17"><path d="M4 4.500 V12.500 C9 12.500 12 4.500 17 4.500 V12.500 C12 12.500 9 4.500 4 4.500Z" fill="none" stroke="#c8c8c8" stroke-width="1.300"/><path d="M5 6 L8 8.500 L5 11Z M16 6 L13 8.500 L16 11Z" fill="#c8c8c8"/></svg>
<div class="vslider" style="left:222.500px;top:687.0px;width:94.300px;height:17.500px;border-radius:9px;background-image:radial-gradient(circle,rgba(120,120,100,.22) 0.55px,transparent 0.9px),linear-gradient(90deg,#212121 0,#212121 66.0px,#29271e 66.0px);background-size:2px 2px,100% 100%"></div>
<div class="knob" style="left:280.5px;top:687.7px;width:16px;height:16px"></div>
<div class="abs" style="left:2px;top:442px;width:4.500px;height:270px;background:#d6d6d6"></div>
<div class="abs" style="left:2px;top:442px;width:4.500px;height:1.500px;background:#222"></div>
<div class="abs" style="left:2px;top:496px;width:4.500px;height:1.500px;background:#222"></div>
<div class="abs" style="left:2px;top:550px;width:4.500px;height:1.500px;background:#222"></div>
<div class="abs" style="left:2px;top:604px;width:4.500px;height:1.500px;background:#222"></div>
<div class="abs" style="left:2px;top:658px;width:4.500px;height:1.500px;background:#222"></div>
<div class="abs" style="left:327px;top:84px;width:11px;height:709px;background:#2b2b2b;border-left:1px solid #1b1b1b"></div>
<div class="abs" style="left:328px;top:84px;width:10px;height:34px;background-color:#333;background-image:repeating-conic-gradient(#555 0 25%,#222 0 50%);background-size:2px 2px"></div>
<svg style="left:328px;top:85px" width="10" height="14" viewBox="0 0 10 14"><path d="M1 .5 L8.500 7 L1 13.500Z" fill="#8c8c8c" stroke="#2a2a2a" stroke-width=".6"/></svg>
<div class="abs" style="left:338px;top:83.500px;width:1847px;height:17px;background:linear-gradient(#dfb36e 0,#d7a960 1.200px,#d3a458 6.500px,#c69a2e 7.500px,#c4982b 15.800px,#6a4e10 16.400px,#101010 17px)"></div>
<div class="abs" style="left:338px;top:100px;width:1847px;height:18.500px;background:linear-gradient(#0c0c12 0,#0c0c12 1px,#3a3a3a 1.200px,#3a3a3a 2.200px,#262626 2.500px,#262626 17.500px,#121212 17.700px)"></div>
<div class="abs" style="left:338px;top:118px;width:1847px;height:675px;background:#242424"></div>
<svg style="left:0;top:0" width="2185" height="793" viewBox="0 0 2185 793" shape-rendering="crispEdges"><rect x="343.0" y="114.0" width="1" height="4" fill="#7a7a74"/><rect x="350.0" y="114.0" width="1" height="4" fill="#7a7a74"/><rect x="356.0" y="114.0" width="1" height="4" fill="#7a7a74"/><rect x="363.0" y="112.0" width="1" height="6" fill="#7a7a74"/><rect x="369.0" y="114.0" width="1" height="4" fill="#7a7a74"/><rect x="376.0" y="114.0" width="1" height="4" fill="#7a7a74"/><rect x="382.0" y="114.0" width="1" height="4" fill="#7a7a74"/><rect x="388.0" y="112.0" width="1" height="6" fill="#7a7a74"/><rect x="395.0" y="114.0" width="1" height="4" fill="#7a7a74"/><rect x="401.0" y="114.0" width="1" height="4" fill="#7a7a74"/><rect x="408.0" y="114.0" width="1" height="4" fill="#7a7a74"/><rect x="414.0" y="112.0" width="1" height="6" fill="#7a7a74"/><rect x="421.0" y="114.0" width="1" height="4" fill="#7a7a74"/><rect x="427.0" y="114.0" width="1" height="4" fill="#7a7a74"/><rect x="434.0" y="114.0" width="1" height="4" fill="#7a7a74"/><rect x="446.0" y="114.0" width="1" height="4" fill="#7a7a74"/><rect x="453.0" y="114.0" width="1" height="4" fill="#7a7a74"/><rect x="459.0" y="114.0" width="1" height="4" fill="#7a7a74"/><rect x="466.0" y="112.0" width="1" height="6" fill="#7a7a74"/><rect x="472.0" y="114.0" width="1" height="4" fill="#7a7a74"/><rect x="479.0" y="114.0" width="1" height="4" fill="#7a7a74"/><rect x="485.0" y="114.0" width="1" height="4" fill="#7a7a74"/><rect x="492.0" y="112.0" width="1" height="6" fill="#7a7a74"/><rect x="498.0" y="114.0" width="1" height="4" fill="#7a7a74"/><rect x="504.0" y="114.0" width="1" height="4" fill="#7a7a74"/><rect x="511.0" y="114.0" width="1" height="4" fill="#7a7a74"/><rect x="517.0" y="112.0" width="1" height="6" fill="#7a7a74"/><rect x="524.0" y="114.0" width="1" height="4" fill="#7a7a74"/><rect x="530.0" y="114.0" width="1" height="4" fill="#7a7a74"/><rect x="537.0" y="114.0" width="1" height="4" fill="#7a7a74"/><rect x="549.0" y="114.0" width="1" height="4" fill="#7a7a74"/><rect x="556.0" y="114.0" width="1" height="4" fill="#7a7a74"/><rect x="562.0" y="114.0" width="1" height="4" fill="#7a7a74"/><rect x="569.0" y="112.0" width="1" height="6" fill="#7a7a74"/><rect x="575.0" y="114.0" width="1" height="4" fill="#7a7a74"/><rect x="582.0" y="114.0" width="1" height="4" fill="#7a7a74"/><rect x="588.0" y="114.0" width="1" height="4" fill="#7a7a74"/><rect x="594.0" y="112.0" width="1" height="6" fill="#7a7a74"/><rect x="601.0" y="114.0" width="1" height="4" fill="#7a7a74"/><rect x="607.0" y="114.0" width="1" height="4" fill="#7a7a74"/><rect x="614.0" y="114.0" width="1" height="4" fill="#7a7a74"/><rect x="620.0" y="112.0" width="1" height="6" fill="#7a7a74"/><rect x="627.0" y="114.0" width="1" height="4" fill="#7a7a74"/><rect x="633.0" y="114.0" width="1" height="4" fill="#7a7a74"/><rect x="640.0" y="114.0" width="1" height="4" fill="#7a7a74"/><rect x="652.0" y="114.0" width="1" height="4" fill="#7a7a74"/><rect x="659.0" y="114.0" width="1" height="4" fill="#7a7a74"/><rect x="665.0" y="114.0" width="1" height="4" fill="#7a7a74"/><rect x="672.0" y="112.0" width="1" height="6" fill="#7a7a74"/><rect x="678.0" y="114.0" width="1" height="4" fill="#7a7a74"/><rect x="685.0" y="114.0" width="1" height="4" fill="#7a7a74"/><rect x="691.0" y="114.0" width="1" height="4" fill="#7a7a74"/><rect x="698.0" y="112.0" width="1" height="6" fill="#7a7a74"/><rect x="704.0" y="114.0" width="1" height="4" fill="#7a7a74"/><rect x="710.0" y="114.0" width="1" height="4" fill="#7a7a74"/><rect x="717.0" y="114.0" width="1" height="4" fill="#7a7a74"/><rect x="723.0" y="112.0" width="1" height="6" fill="#7a7a74"/><rect x="730.0" y="114.0" width="1" height="4" fill="#7a7a74"/><rect x="736.0" y="114.0" width="1" height="4" fill="#7a7a74"/><rect x="743.0" y="114.0" width="1" height="4" fill="#7a7a74"/><rect x="755.0" y="114.0" width="1" height="4" fill="#7a7a74"/><rect x="762.0" y="114.0" width="1" height="4" fill="#7a7a74"/><rect x="768.0" y="114.0" width="1" height="4" fill="#7a7a74"/><rect x="775.0" y="112.0" width="1" height="6" fill="#7a7a74"/><rect x="781.0" y="114.0" width="1" height="4" fill="#7a7a74"/><rect x="788.0" y="114.0" width="1" height="4" fill="#7a7a74"/><rect x="794.0" y="114.0" width="1" height="4" fill="#7a7a74"/><rect x="800.0" y="112.0" width="1" height="6" fill="#7a7a74"/><rect x="807.0" y="114.0" width="1" height="4" fill="#7a7a74"/><rect x="813.0" y="114.0" width="1" height="4" fill="#7a7a74"/><rect x="820.0" y="114.0" width="1" height="4" fill="#7a7a74"/><rect x="826.0" y="112.0" width="1" height="6" fill="#7a7a74"/><rect x="833.0" y="114.0" width="1" height="4" fill="#7a7a74"/><rect x="839.0" y="114.0" width="1" height="4" fill="#7a7a74"/><rect x="846.0" y="114.0" width="1" height="4" fill="#7a7a74"/><rect x="858.0" y="114.0" width="1" height="4" fill="#7a7a74"/><rect x="865.0" y="114.0" width="1" height="4" fill="#7a7a74"/><rect x="871.0" y="114.0" width="1" height="4" fill="#7a7a74"/><rect x="878.0" y="112.0" width="1" height="6" fill="#7a7a74"/><rect x="884.0" y="114.0" width="1" height="4" fill="#7a7a74"/><rect x="891.0" y="114.0" width="1" height="4" fill="#7a7a74"/><rect x="897.0" y="114.0" width="1" height="4" fill="#7a7a74"/><rect x="904.0" y="112.0" width="1" height="6" fill="#7a7a74"/><rect x="910.0" y="114.0" width="1" height="4" fill="#7a7a74"/><rect x="916.0" y="114.0" width="1" height="4" fill="#7a7a74"/><rect x="923.0" y="114.0" width="1" height="4" fill="#7a7a74"/><rect x="929.0" y="112.0" width="1" height="6" fill="#7a7a74"/><rect x="936.0" y="114.0" width="1" height="4" fill="#7a7a74"/><rect x="942.0" y="114.0" width="1" height="4" fill="#7a7a74"/><rect x="949.0" y="114.0" width="1" height="4" fill="#7a7a74"/><rect x="961.0" y="114.0" width="1" height="4" fill="#7a7a74"/><rect x="968.0" y="114.0" width="1" height="4" fill="#7a7a74"/><rect x="974.0" y="114.0" width="1" height="4" fill="#7a7a74"/><rect x="981.0" y="112.0" width="1" height="6" fill="#7a7a74"/><rect x="987.0" y="114.0" width="1" height="4" fill="#7a7a74"/><rect x="994.0" y="114.0" width="1" height="4" fill="#7a7a74"/><rect x="1000.0" y="114.0" width="1" height="4" fill="#7a7a74"/><rect x="1006.0" y="112.0" width="1" height="6" fill="#7a7a74"/><rect x="1013.0" y="114.0" width="1" height="4" fill="#7a7a74"/><rect x="1019.0" y="114.0" width="1" height="4" fill="#7a7a74"/><rect x="1026.0" y="114.0" width="1" height="4" fill="#7a7a74"/><rect x="1032.0" y="112.0" width="1" height="6" fill="#7a7a74"/><rect x="1039.0" y="114.0" width="1" height="4" fill="#7a7a74"/><rect x="1045.0" y="114.0" width="1" height="4" fill="#7a7a74"/><rect x="1052.0" y="114.0" width="1" height="4" fill="#7a7a74"/><rect x="1064.0" y="114.0" width="1" height="4" fill="#7a7a74"/><rect x="1071.0" y="114.0" width="1" height="4" fill="#7a7a74"/><rect x="1077.0" y="114.0" width="1" height="4" fill="#7a7a74"/><rect x="1084.0" y="112.0" width="1" height="6" fill="#7a7a74"/><rect x="1090.0" y="114.0" width="1" height="4" fill="#7a7a74"/><rect x="1097.0" y="114.0" width="1" height="4" fill="#7a7a74"/><rect x="1103.0" y="114.0" width="1" height="4" fill="#7a7a74"/><rect x="1110.0" y="112.0" width="1" height="6" fill="#7a7a74"/><rect x="1116.0" y="114.0" width="1" height="4" fill="#7a7a74"/><rect x="1122.0" y="114.0" width="1" height="4" fill="#7a7a74"/><rect x="1129.0" y="114.0" width="1" height="4" fill="#7a7a74"/><rect x="1135.0" y="112.0" width="1" height="6" fill="#7a7a74"/><rect x="1142.0" y="114.0" width="1" height="4" fill="#7a7a74"/><rect x="1148.0" y="114.0" width="1" height="4" fill="#7a7a74"/><rect x="1155.0" y="114.0" width="1" height="4" fill="#7a7a74"/><rect x="1167.0" y="114.0" width="1" height="4" fill="#7a7a74"/><rect x="1174.0" y="114.0" width="1" height="4" fill="#7a7a74"/><rect x="1180.0" y="114.0" width="1" height="4" fill="#7a7a74"/><rect x="1187.0" y="112.0" width="1" height="6" fill="#7a7a74"/><rect x="1193.0" y="114.0" width="1" height="4" fill="#7a7a74"/><rect x="1200.0" y="114.0" width="1" height="4" fill="#7a7a74"/><rect x="1206.0" y="114.0" width="1" height="4" fill="#7a7a74"/><rect x="1212.0" y="112.0" width="1" height="6" fill="#7a7a74"/><rect x="1219.0" y="114.0" width="1" height="4" fill="#7a7a74"/><rect x="1225.0" y="114.0" width="1" height="4" fill="#7a7a74"/><rect x="1232.0" y="114.0" width="1" height="4" fill="#7a7a74"/><rect x="1238.0" y="112.0" width="1" height="6" fill="#7a7a74"/><rect x="1245.0" y="114.0" width="1" height="4" fill="#7a7a74"/><rect x="1251.0" y="114.0" width="1" height="4" fill="#7a7a74"/><rect x="1258.0" y="114.0" width="1" height="4" fill="#7a7a74"/><rect x="1270.0" y="114.0" width="1" height="4" fill="#7a7a74"/><rect x="1277.0" y="114.0" width="1" height="4" fill="#7a7a74"/><rect x="1283.0" y="114.0" width="1" height="4" fill="#7a7a74"/><rect x="1290.0" y="112.0" width="1" height="6" fill="#7a7a74"/><rect x="1296.0" y="114.0" width="1" height="4" fill="#7a7a74"/><rect x="1303.0" y="114.0" width="1" height="4" fill="#7a7a74"/><rect x="1309.0" y="114.0" width="1" height="4" fill="#7a7a74"/><rect x="1316.0" y="112.0" width="1" height="6" fill="#7a7a74"/><rect x="1322.0" y="114.0" width="1" height="4" fill="#7a7a74"/><rect x="1328.0" y="114.0" width="1" height="4" fill="#7a7a74"/><rect x="1335.0" y="114.0" width="1" height="4" fill="#7a7a74"/><rect x="1341.0" y="112.0" width="1" height="6" fill="#7a7a74"/><rect x="1348.0" y="114.0" width="1" height="4" fill="#7a7a74"/><rect x="1354.0" y="114.0" width="1" height="4" fill="#7a7a74"/><rect x="1361.0" y="114.0" width="1" height="4" fill="#7a7a74"/><rect x="1373.0" y="114.0" width="1" height="4" fill="#7a7a74"/><rect x="1380.0" y="114.0" width="1" height="4" fill="#7a7a74"/><rect x="1386.0" y="114.0" width="1" height="4" fill="#7a7a74"/><rect x="1393.0" y="112.0" width="1" height="6" fill="#7a7a74"/><rect x="1399.0" y="114.0" width="1" height="4" fill="#7a7a74"/><rect x="1406.0" y="114.0" width="1" height="4" fill="#7a7a74"/><rect x="1412.0" y="114.0" width="1" height="4" fill="#7a7a74"/><rect x="1418.0" y="112.0" width="1" height="6" fill="#7a7a74"/><rect x="1425.0" y="114.0" width="1" height="4" fill="#7a7a74"/><rect x="1431.0" y="114.0" width="1" height="4" fill="#7a7a74"/><rect x="1438.0" y="114.0" width="1" height="4" fill="#7a7a74"/><rect x="1444.0" y="112.0" width="1" height="6" fill="#7a7a74"/><rect x="1451.0" y="114.0" width="1" height="4" fill="#7a7a74"/><rect x="1457.0" y="114.0" width="1" height="4" fill="#7a7a74"/><rect x="1464.0" y="114.0" width="1" height="4" fill="#7a7a74"/><rect x="1476.0" y="114.0" width="1" height="4" fill="#7a7a74"/><rect x="1483.0" y="114.0" width="1" height="4" fill="#7a7a74"/><rect x="1489.0" y="114.0" width="1" height="4" fill="#7a7a74"/><rect x="1496.0" y="112.0" width="1" height="6" fill="#7a7a74"/><rect x="1502.0" y="114.0" width="1" height="4" fill="#7a7a74"/><rect x="1509.0" y="114.0" width="1" height="4" fill="#7a7a74"/><rect x="1515.0" y="114.0" width="1" height="4" fill="#7a7a74"/><rect x="1522.0" y="112.0" width="1" height="6" fill="#7a7a74"/><rect x="1528.0" y="114.0" width="1" height="4" fill="#7a7a74"/><rect x="1534.0" y="114.0" width="1" height="4" fill="#7a7a74"/><rect x="1541.0" y="114.0" width="1" height="4" fill="#7a7a74"/><rect x="1547.0" y="112.0" width="1" height="6" fill="#7a7a74"/><rect x="1554.0" y="114.0" width="1" height="4" fill="#7a7a74"/><rect x="1560.0" y="114.0" width="1" height="4" fill="#7a7a74"/><rect x="1567.0" y="114.0" width="1" height="4" fill="#7a7a74"/><rect x="1579.0" y="114.0" width="1" height="4" fill="#7a7a74"/><rect x="1586.0" y="114.0" width="1" height="4" fill="#7a7a74"/><rect x="1592.0" y="114.0" width="1" height="4" fill="#7a7a74"/><rect x="1599.0" y="112.0" width="1" height="6" fill="#7a7a74"/><rect x="1605.0" y="114.0" width="1" height="4" fill="#7a7a74"/><rect x="1612.0" y="114.0" width="1" height="4" fill="#7a7a74"/><rect x="1618.0" y="114.0" width="1" height="4" fill="#7a7a74"/><rect x="1624.0" y="112.0" width="1" height="6" fill="#7a7a74"/><rect x="1631.0" y="114.0" width="1" height="4" fill="#7a7a74"/><rect x="1637.0" y="114.0" width="1" height="4" fill="#7a7a74"/><rect x="1644.0" y="114.0" width="1" height="4" fill="#7a7a74"/><rect x="1650.0" y="112.0" width="1" height="6" fill="#7a7a74"/><rect x="1657.0" y="114.0" width="1" height="4" fill="#7a7a74"/><rect x="1663.0" y="114.0" width="1" height="4" fill="#7a7a74"/><rect x="1670.0" y="114.0" width="1" height="4" fill="#7a7a74"/><rect x="1682.0" y="114.0" width="1" height="4" fill="#7a7a74"/><rect x="1689.0" y="114.0" width="1" height="4" fill="#7a7a74"/><rect x="1695.0" y="114.0" width="1" height="4" fill="#7a7a74"/><rect x="1702.0" y="112.0" width="1" height="6" fill="#7a7a74"/><rect x="1708.0" y="114.0" width="1" height="4" fill="#7a7a74"/><rect x="1715.0" y="114.0" width="1" height="4" fill="#7a7a74"/><rect x="1721.0" y="114.0" width="1" height="4" fill="#7a7a74"/><rect x="1728.0" y="112.0" width="1" height="6" fill="#7a7a74"/><rect x="1734.0" y="114.0" width="1" height="4" fill="#7a7a74"/><rect x="1740.0" y="114.0" width="1" height="4" fill="#7a7a74"/><rect x="1747.0" y="114.0" width="1" height="4" fill="#7a7a74"/><rect x="1753.0" y="112.0" width="1" height="6" fill="#7a7a74"/><rect x="1760.0" y="114.0" width="1" height="4" fill="#7a7a74"/><rect x="1766.0" y="114.0" width="1" height="4" fill="#7a7a74"/><rect x="1773.0" y="114.0" width="1" height="4" fill="#7a7a74"/><rect x="1785.0" y="114.0" width="1" height="4" fill="#7a7a74"/><rect x="1792.0" y="114.0" width="1" height="4" fill="#7a7a74"/><rect x="1798.0" y="114.0" width="1" height="4" fill="#7a7a74"/><rect x="1805.0" y="112.0" width="1" height="6" fill="#7a7a74"/><rect x="1811.0" y="114.0" width="1" height="4" fill="#7a7a74"/><rect x="1818.0" y="114.0" width="1" height="4" fill="#7a7a74"/><rect x="1824.0" y="114.0" width="1" height="4" fill="#7a7a74"/><rect x="1830.0" y="112.0" width="1" height="6" fill="#7a7a74"/><rect x="1837.0" y="114.0" width="1" height="4" fill="#7a7a74"/><rect x="1843.0" y="114.0" width="1" height="4" fill="#7a7a74"/><rect x="1850.0" y="114.0" width="1" height="4" fill="#7a7a74"/><rect x="1856.0" y="112.0" width="1" height="6" fill="#7a7a74"/><rect x="1863.0" y="114.0" width="1" height="4" fill="#7a7a74"/><rect x="1869.0" y="114.0" width="1" height="4" fill="#7a7a74"/><rect x="1876.0" y="114.0" width="1" height="4" fill="#7a7a74"/><rect x="1888.0" y="114.0" width="1" height="4" fill="#7a7a74"/><rect x="1895.0" y="114.0" width="1" height="4" fill="#7a7a74"/><rect x="1901.0" y="114.0" width="1" height="4" fill="#7a7a74"/><rect x="1908.0" y="112.0" width="1" height="6" fill="#7a7a74"/><rect x="1914.0" y="114.0" width="1" height="4" fill="#7a7a74"/><rect x="1921.0" y="114.0" width="1" height="4" fill="#7a7a74"/><rect x="1927.0" y="114.0" width="1" height="4" fill="#7a7a74"/><rect x="1934.0" y="112.0" width="1" height="6" fill="#7a7a74"/><rect x="1940.0" y="114.0" width="1" height="4" fill="#7a7a74"/><rect x="1946.0" y="114.0" width="1" height="4" fill="#7a7a74"/><rect x="1953.0" y="114.0" width="1" height="4" fill="#7a7a74"/><rect x="1959.0" y="112.0" width="1" height="6" fill="#7a7a74"/><rect x="1966.0" y="114.0" width="1" height="4" fill="#7a7a74"/><rect x="1972.0" y="114.0" width="1" height="4" fill="#7a7a74"/><rect x="1979.0" y="114.0" width="1" height="4" fill="#7a7a74"/><rect x="1991.0" y="114.0" width="1" height="4" fill="#7a7a74"/><rect x="1998.0" y="114.0" width="1" height="4" fill="#7a7a74"/><rect x="2004.0" y="114.0" width="1" height="4" fill="#7a7a74"/><rect x="2011.0" y="112.0" width="1" height="6" fill="#7a7a74"/><rect x="2017.0" y="114.0" width="1" height="4" fill="#7a7a74"/><rect x="2024.0" y="114.0" width="1" height="4" fill="#7a7a74"/><rect x="2030.0" y="114.0" width="1" height="4" fill="#7a7a74"/><rect x="2036.0" y="112.0" width="1" height="6" fill="#7a7a74"/><rect x="2043.0" y="114.0" width="1" height="4" fill="#7a7a74"/><rect x="2049.0" y="114.0" width="1" height="4" fill="#7a7a74"/><rect x="2056.0" y="114.0" width="1" height="4" fill="#7a7a74"/><rect x="2062.0" y="112.0" width="1" height="6" fill="#7a7a74"/><rect x="2069.0" y="114.0" width="1" height="4" fill="#7a7a74"/><rect x="2075.0" y="114.0" width="1" height="4" fill="#7a7a74"/><rect x="2082.0" y="114.0" width="1" height="4" fill="#7a7a74"/><rect x="2094.0" y="114.0" width="1" height="4" fill="#7a7a74"/><rect x="2101.0" y="114.0" width="1" height="4" fill="#7a7a74"/><rect x="2107.0" y="114.0" width="1" height="4" fill="#7a7a74"/><rect x="2114.0" y="112.0" width="1" height="6" fill="#7a7a74"/><rect x="2120.0" y="114.0" width="1" height="4" fill="#7a7a74"/><rect x="2127.0" y="114.0" width="1" height="4" fill="#7a7a74"/><rect x="2133.0" y="114.0" width="1" height="4" fill="#7a7a74"/><rect x="2140.0" y="112.0" width="1" height="6" fill="#7a7a74"/><rect x="2146.0" y="114.0" width="1" height="4" fill="#7a7a74"/><rect x="2152.0" y="114.0" width="1" height="4" fill="#7a7a74"/><rect x="2159.0" y="114.0" width="1" height="4" fill="#7a7a74"/><rect x="2165.0" y="112.0" width="1" height="6" fill="#7a7a74"/><rect x="2172.0" y="114.0" width="1" height="4" fill="#7a7a74"/><rect x="2178.0" y="114.0" width="1" height="4" fill="#7a7a74"/><rect x="2185.0" y="114.0" width="1" height="4" fill="#7a7a74"/><rect x="337" y="101.500" width="1" height="16.500" fill="#808080"/><rect x="337" y="119" width="1" height="593" fill="#3c3c3c"/><rect x="440" y="86" width="1" height="14" fill="#3a2c08"/><rect x="440" y="101.500" width="1" height="16.500" fill="#808080"/><rect x="440" y="119" width="1" height="593" fill="#3c3c3c"/><rect x="543" y="86" width="1" height="14" fill="#3a2c08"/><rect x="543" y="101.500" width="1" height="16.500" fill="#808080"/><rect x="543" y="119" width="1" height="593" fill="#3c3c3c"/><rect x="646" y="86" width="1" height="14" fill="#3a2c08"/><rect x="646" y="101.500" width="1" height="16.500" fill="#808080"/><rect x="646" y="119" width="1" height="593" fill="#3c3c3c"/><rect x="749" y="86" width="1" height="14" fill="#3a2c08"/><rect x="749" y="101.500" width="1" height="16.500" fill="#808080"/><rect x="749" y="119" width="1" height="593" fill="#3c3c3c"/><rect x="852" y="86" width="1" height="14" fill="#3a2c08"/><rect x="852" y="101.500" width="1" height="16.500" fill="#808080"/><rect x="852" y="119" width="1" height="593" fill="#3c3c3c"/><rect x="955" y="86" width="1" height="14" fill="#3a2c08"/><rect x="955" y="101.500" width="1" height="16.500" fill="#808080"/><rect x="955" y="119" width="1" height="593" fill="#3c3c3c"/><rect x="1058" y="86" width="1" height="14" fill="#3a2c08"/><rect x="1058" y="101.500" width="1" height="16.500" fill="#808080"/><rect x="1058" y="119" width="1" height="593" fill="#3c3c3c"/><rect x="1161" y="86" width="1" height="14" fill="#3a2c08"/><rect x="1161" y="101.500" width="1" height="16.500" fill="#808080"/><rect x="1161" y="119" width="1" height="593" fill="#3c3c3c"/><rect x="1264" y="86" width="1" height="14" fill="#3a2c08"/><rect x="1264" y="101.500" width="1" height="16.500" fill="#808080"/><rect x="1264" y="119" width="1" height="593" fill="#3c3c3c"/><rect x="1367" y="86" width="1" height="14" fill="#3a2c08"/><rect x="1367" y="101.500" width="1" height="16.500" fill="#808080"/><rect x="1367" y="119" width="1" height="593" fill="#3c3c3c"/><rect x="1470" y="86" width="1" height="14" fill="#3a2c08"/><rect x="1470" y="101.500" width="1" height="16.500" fill="#808080"/><rect x="1470" y="119" width="1" height="593" fill="#3c3c3c"/><rect x="1573" y="86" width="1" height="14" fill="#3a2c08"/><rect x="1573" y="101.500" width="1" height="16.500" fill="#808080"/><rect x="1573" y="119" width="1" height="593" fill="#3c3c3c"/><rect x="1676" y="86" width="1" height="14" fill="#3a2c08"/><rect x="1676" y="101.500" width="1" height="16.500" fill="#808080"/><rect x="1676" y="119" width="1" height="593" fill="#3c3c3c"/><rect x="1779" y="86" width="1" height="14" fill="#3a2c08"/><rect x="1779" y="101.500" width="1" height="16.500" fill="#808080"/><rect x="1779" y="119" width="1" height="593" fill="#3c3c3c"/><rect x="1882" y="86" width="1" height="14" fill="#3a2c08"/><rect x="1882" y="101.500" width="1" height="16.500" fill="#808080"/><rect x="1882" y="119" width="1" height="593" fill="#3c3c3c"/><rect x="1985" y="86" width="1" height="14" fill="#3a2c08"/><rect x="1985" y="101.500" width="1" height="16.500" fill="#808080"/><rect x="1985" y="119" width="1" height="593" fill="#3c3c3c"/><rect x="2088" y="86" width="1" height="14" fill="#3a2c08"/><rect x="2088" y="101.500" width="1" height="16.500" fill="#808080"/><rect x="2088" y="119" width="1" height="593" fill="#3c3c3c"/><rect x="2191" y="86" width="1" height="14" fill="#3a2c08"/><rect x="2191" y="101.500" width="1" height="16.500" fill="#808080"/><rect x="2191" y="119" width="1" height="593" fill="#3c3c3c"/><rect x="338" y="118" width="1847" height="1.200" fill="#0c0c0c"/><rect x="338" y="171" width="1847" height="1" fill="#1a1a1a"/><rect x="338" y="225" width="1847" height="1" fill="#1a1a1a"/><rect x="338" y="279" width="1847" height="1" fill="#1a1a1a"/><rect x="338" y="333" width="1847" height="1" fill="#1a1a1a"/><rect x="338" y="387" width="1847" height="1" fill="#1a1a1a"/><rect x="338" y="441" width="1847" height="1" fill="#1a1a1a"/><rect x="338" y="495" width="1847" height="1" fill="#1a1a1a"/><rect x="338" y="549" width="1847" height="1" fill="#1a1a1a"/><rect x="338" y="603" width="1847" height="1" fill="#1a1a1a"/><rect x="338" y="657" width="1847" height="1" fill="#1a1a1a"/><rect x="338" y="711" width="1847" height="1" fill="#1a1a1a"/></svg>
<div class="rn" style="left:341.2px">1</div>
<div class="rn" style="left:444.2px">2</div>
<div class="rn" style="left:547.2px">3</div>
<div class="rn" style="left:650.2px">4</div>
<div class="rn" style="left:753.2px">5</div>
<div class="rn" style="left:856.2px">6</div>
<div class="rn" style="left:959.2px">7</div>
<div class="rn" style="left:1062.2px">8</div>
<div class="rn" style="left:1165.2px">9</div>
<div class="rn" style="left:1268.2px">10</div>
<div class="rn" style="left:1371.2px">11</div>
<div class="rn" style="left:1474.2px">12</div>
<div class="rn" style="left:1577.2px">13</div>
<div class="rn" style="left:1680.2px">14</div>
<div class="rn" style="left:1783.2px">15</div>
<div class="rn" style="left:1886.2px">16</div>
<div class="rn" style="left:1989.2px">17</div>
<div class="rn" style="left:2092.2px">18</div>
<div class="rg" style="left:337.5px;top:174px;width:411.5px;height:51px;border-radius:3.500px;background:linear-gradient(#1a882c 0,#1a882c 22px,#187b29 27px,#187b29 100%)"></div>
<div class="rl" style="left:343.3px;top:177px;color:#d8edd8">KIT&nbsp; HIP 05</div>
<div class="rg" style="left:749.5px;top:174px;width:411.5px;height:51px;border-radius:3.500px;background:linear-gradient(#1a882c 0,#1a882c 22px,#187b29 27px,#187b29 100%)"></div>
<div class="rl" style="left:755.3px;top:177px;color:#d8edd8">KIT&nbsp; HIP 05</div>
<div class="rg" style="left:1161.5px;top:174px;width:1028.5px;height:51px;border-radius:3.500px 0 0 3.500px;background:linear-gradient(#1a882c 0,#1a882c 22px,#187b29 27px,#187b29 100%)"></div>
<div class="rl" style="left:1167.3px;top:177px;color:#d8edd8">KIT&nbsp; HIP 05</div>
<svg style="left:0;top:0" width="2185" height="793" viewBox="0 0 2185 793" fill="#0e0e0e"><path d="M1981.5 173.5 Q1984.7 174.7 1985.5 178.6 Q1986.3 174.7 1989.5 173.5Z"/><path d="M1981.5 225.5 Q1984.7 224.3 1985.5 220.4 Q1986.3 224.3 1989.5 225.5Z"/><rect x="1985.0" y="177" width="1" height="45" fill="#000" opacity="0"/></svg>
<svg style="left:0;top:0" width="2185" height="793" viewBox="0 0 2185 793" shape-rendering="crispEdges" fill="#c6e8c8" opacity="1"><rect x="338.0" y="205.0" width="8.2" height="2"/><rect x="376.6" y="205.0" width="6.0" height="2"/><rect x="427.6" y="205.0" width="2.9" height="2"/><rect x="434.8" y="205.0" width="2.9" height="2"/><rect x="441.0" y="205.0" width="4.6" height="2"/><rect x="459.5" y="205.0" width="6.0" height="2"/><rect x="479.6" y="205.0" width="6.0" height="2"/><rect x="537.8" y="205.0" width="2.9" height="2"/><rect x="544.0" y="205.0" width="4.1" height="2"/><rect x="582.6" y="205.0" width="2.9" height="2"/><rect x="640.8" y="205.0" width="2.9" height="2"/><rect x="647.0" y="205.0" width="4.1" height="2"/><rect x="665.5" y="205.0" width="4.1" height="2"/><rect x="685.6" y="205.0" width="2.9" height="2"/><rect x="750.0" y="205.0" width="2.1" height="2"/><rect x="768.5" y="205.0" width="4.1" height="2"/><rect x="788.9" y="205.0" width="2.6" height="2"/><rect x="801.2" y="205.0" width="5.4" height="2"/><rect x="853.0" y="205.0" width="7.7" height="2"/><rect x="871.5" y="205.0" width="5.7" height="2"/><rect x="891.9" y="205.0" width="4.1" height="2"/><rect x="956.0" y="205.0" width="7.4" height="2"/><rect x="974.5" y="205.0" width="7.7" height="2"/><rect x="994.9" y="205.0" width="3.8" height="2"/><rect x="1046.1" y="205.0" width="3.1" height="2"/><rect x="1052.6" y="205.0" width="3.1" height="2"/><rect x="1059.0" y="205.0" width="3.1" height="2"/><rect x="1077.5" y="205.0" width="4.6" height="2"/><rect x="1097.9" y="205.0" width="4.1" height="2"/><rect x="1162.0" y="205.0" width="8.2" height="2"/><rect x="1200.6" y="205.0" width="6.0" height="2"/><rect x="1251.6" y="205.0" width="2.9" height="2"/><rect x="1258.8" y="205.0" width="2.9" height="2"/><rect x="1265.0" y="205.0" width="4.6" height="2"/><rect x="1283.5" y="205.0" width="6.0" height="2"/><rect x="1303.6" y="205.0" width="6.0" height="2"/><rect x="1361.8" y="205.0" width="2.9" height="2"/><rect x="1368.0" y="205.0" width="4.1" height="2"/><rect x="1406.6" y="205.0" width="2.9" height="2"/><rect x="1464.8" y="205.0" width="2.9" height="2"/><rect x="1471.0" y="205.0" width="4.1" height="2"/><rect x="1489.5" y="205.0" width="4.1" height="2"/><rect x="1509.6" y="205.0" width="2.9" height="2"/><rect x="1574.0" y="205.0" width="2.1" height="2"/><rect x="1592.5" y="205.0" width="4.1" height="2"/><rect x="1612.9" y="205.0" width="2.6" height="2"/><rect x="1625.2" y="205.0" width="5.4" height="2"/><rect x="1677.0" y="205.0" width="7.7" height="2"/><rect x="1695.5" y="205.0" width="5.7" height="2"/><rect x="1715.9" y="205.0" width="4.1" height="2"/><rect x="1780.0" y="205.0" width="7.4" height="2"/><rect x="1798.5" y="205.0" width="7.7" height="2"/><rect x="1818.9" y="205.0" width="3.8" height="2"/><rect x="1870.1" y="205.0" width="3.1" height="2"/><rect x="1876.6" y="205.0" width="3.1" height="2"/><rect x="1883.0" y="205.0" width="3.1" height="2"/><rect x="1901.5" y="205.0" width="4.6" height="2"/><rect x="1921.9" y="205.0" width="4.1" height="2"/></svg>
<svg style="left:0;top:0" width="2185" height="793" viewBox="0 0 2185 793" shape-rendering="crispEdges" fill="#c6e8c8" opacity="0.35"><rect x="1986.0" y="205.0" width="8.2" height="2"/><rect x="2024.6" y="205.0" width="6.0" height="2"/><rect x="2075.6" y="205.0" width="2.9" height="2"/><rect x="2082.8" y="205.0" width="2.9" height="2"/><rect x="2089.0" y="205.0" width="4.6" height="2"/><rect x="2107.5" y="205.0" width="6.0" height="2"/><rect x="2127.6" y="205.0" width="6.0" height="2"/></svg>
<div class="rg" style="left:337.5px;top:228px;width:308.5px;height:51px;border-radius:3.500px;background:linear-gradient(#1a882c 0,#1a882c 22px,#187b29 27px,#187b29 100%)"></div>
<div class="rl" style="left:343.3px;top:231px;color:#d8edd8">Sum 1</div>
<svg style="left:0;top:0" width="2185" height="793" viewBox="0 0 2185 793" fill="#0e0e0e"><path d="M436.5 227.5 Q439.7 228.7 440.5 232.6 Q441.3 228.7 444.5 227.5Z"/><path d="M436.5 279.5 Q439.7 278.3 440.5 274.4 Q441.3 278.3 444.5 279.5Z"/><rect x="440.0" y="231" width="1" height="45" fill="#000" opacity="0"/><path d="M539.5 227.5 Q542.7 228.7 543.5 232.6 Q544.3 228.7 547.5 227.5Z"/><path d="M539.5 279.5 Q542.7 278.3 543.5 274.4 Q544.3 278.3 547.5 279.5Z"/><rect x="543.0" y="231" width="1" height="45" fill="#000" opacity="0"/></svg>
<div class="rg" style="left:749.5px;top:228px;width:1440.5px;height:51px;border-radius:3.500px 0 0 3.500px;background:linear-gradient(#1a882c 0,#1a882c 22px,#187b29 27px,#187b29 100%)"></div>
<div class="rl" style="left:755.3px;top:231px;color:#d8edd8">Sum 1</div>
<svg style="left:0;top:0" width="2185" height="793" viewBox="0 0 2185 793" fill="#0e0e0e"><path d="M848.5 227.5 Q851.7 228.7 852.5 232.6 Q853.3 228.7 856.5 227.5Z"/><path d="M848.5 279.5 Q851.7 278.3 852.5 274.4 Q853.3 278.3 856.5 279.5Z"/><rect x="852.0" y="231" width="1" height="45" fill="#000" opacity="0"/><path d="M951.5 227.5 Q954.7 228.7 955.5 232.6 Q956.3 228.7 959.5 227.5Z"/><path d="M951.5 279.5 Q954.7 278.3 955.5 274.4 Q956.3 278.3 959.5 279.5Z"/><rect x="955.0" y="231" width="1" height="45" fill="#000" opacity="0"/><path d="M1054.5 227.5 Q1057.7 228.7 1058.5 232.6 Q1059.3 228.7 1062.5 227.5Z"/><path d="M1054.5 279.5 Q1057.7 278.3 1058.5 274.4 Q1059.3 278.3 1062.5 279.5Z"/><rect x="1058.0" y="231" width="1" height="45" fill="#000" opacity="0"/><path d="M1157.5 227.5 Q1160.7 228.7 1161.5 232.6 Q1162.3 228.7 1165.5 227.5Z"/><path d="M1157.5 279.5 Q1160.7 278.3 1161.5 274.4 Q1162.3 278.3 1165.5 279.5Z"/><rect x="1161.0" y="231" width="1" height="45" fill="#000" opacity="0"/><path d="M1260.5 227.5 Q1263.7 228.7 1264.5 232.6 Q1265.3 228.7 1268.5 227.5Z"/><path d="M1260.5 279.5 Q1263.7 278.3 1264.5 274.4 Q1265.3 278.3 1268.5 279.5Z"/><rect x="1264.0" y="231" width="1" height="45" fill="#000" opacity="0"/><path d="M1363.5 227.5 Q1366.7 228.7 1367.5 232.6 Q1368.3 228.7 1371.5 227.5Z"/><path d="M1363.5 279.5 Q1366.7 278.3 1367.5 274.4 Q1368.3 278.3 1371.5 279.5Z"/><rect x="1367.0" y="231" width="1" height="45" fill="#000" opacity="0"/><path d="M1466.5 227.5 Q1469.7 228.7 1470.5 232.6 Q1471.3 228.7 1474.5 227.5Z"/><path d="M1466.5 279.5 Q1469.7 278.3 1470.5 274.4 Q1471.3 278.3 1474.5 279.5Z"/><rect x="1470.0" y="231" width="1" height="45" fill="#000" opacity="0"/><path d="M1569.5 227.5 Q1572.7 228.7 1573.5 232.6 Q1574.3 228.7 1577.5 227.5Z"/><path d="M1569.5 279.5 Q1572.7 278.3 1573.5 274.4 Q1574.3 278.3 1577.5 279.5Z"/><rect x="1573.0" y="231" width="1" height="45" fill="#000" opacity="0"/><path d="M1672.5 227.5 Q1675.7 228.7 1676.5 232.6 Q1677.3 228.7 1680.5 227.5Z"/><path d="M1672.5 279.5 Q1675.7 278.3 1676.5 274.4 Q1677.3 278.3 1680.5 279.5Z"/><rect x="1676.0" y="231" width="1" height="45" fill="#000" opacity="0"/><path d="M1775.5 227.5 Q1778.7 228.7 1779.5 232.6 Q1780.3 228.7 1783.5 227.5Z"/><path d="M1775.5 279.5 Q1778.7 278.3 1779.5 274.4 Q1780.3 278.3 1783.5 279.5Z"/><rect x="1779.0" y="231" width="1" height="45" fill="#000" opacity="0"/><path d="M1878.5 227.5 Q1881.7 228.7 1882.5 232.6 Q1883.3 228.7 1886.5 227.5Z"/><path d="M1878.5 279.5 Q1881.7 278.3 1882.5 274.4 Q1883.3 278.3 1886.5 279.5Z"/><rect x="1882.0" y="231" width="1" height="45" fill="#000" opacity="0"/><path d="M1981.5 227.5 Q1984.7 228.7 1985.5 232.6 Q1986.3 228.7 1989.5 227.5Z"/><path d="M1981.5 279.5 Q1984.7 278.3 1985.5 274.4 Q1986.3 278.3 1989.5 279.5Z"/><rect x="1985.0" y="231" width="1" height="45" fill="#000" opacity="0"/><path d="M2084.5 227.5 Q2087.7 228.7 2088.5 232.6 Q2089.3 228.7 2092.5 227.5Z"/><path d="M2084.5 279.5 Q2087.7 278.3 2088.5 274.4 Q2089.3 278.3 2092.5 279.5Z"/><rect x="2088.0" y="231" width="1" height="45" fill="#000" opacity="0"/></svg>
<svg style="left:0;top:0" width="2185" height="793" viewBox="0 0 2185 793" shape-rendering="crispEdges" fill="#c6e8c8" opacity="1"><rect x="363.4" y="249.0" width="9.6" height="2"/><rect x="414.7" y="249.0" width="9.6" height="2"/><rect x="775.4" y="249.0" width="9.6" height="2"/><rect x="826.7" y="249.0" width="9.6" height="2"/></svg>
<svg style="left:0;top:0" width="2185" height="793" viewBox="0 0 2185 793" shape-rendering="crispEdges" fill="#c6e8c8" opacity="0.35"><rect x="466.4" y="249.0" width="9.6" height="2"/><rect x="517.7" y="249.0" width="9.6" height="2"/><rect x="569.4" y="249.0" width="9.6" height="2"/><rect x="620.7" y="249.0" width="9.6" height="2"/><rect x="878.4" y="249.0" width="9.6" height="2"/><rect x="929.7" y="249.0" width="9.6" height="2"/><rect x="981.4" y="249.0" width="9.6" height="2"/><rect x="1032.7" y="249.0" width="9.6" height="2"/><rect x="1084.4" y="249.0" width="9.6" height="2"/><rect x="1135.7" y="249.0" width="9.6" height="2"/><rect x="1187.4" y="249.0" width="9.6" height="2"/><rect x="1238.7" y="249.0" width="9.6" height="2"/><rect x="1290.4" y="249.0" width="9.6" height="2"/><rect x="1341.7" y="249.0" width="9.6" height="2"/><rect x="1393.4" y="249.0" width="9.6" height="2"/><rect x="1444.7" y="249.0" width="9.6" height="2"/><rect x="1496.4" y="249.0" width="9.6" height="2"/><rect x="1547.7" y="249.0" width="9.6" height="2"/><rect x="1599.4" y="249.0" width="9.6" height="2"/><rect x="1650.7" y="249.0" width="9.6" height="2"/><rect x="1702.4" y="249.0" width="9.6" height="2"/><rect x="1753.7" y="249.0" width="9.6" height="2"/><rect x="1805.4" y="249.0" width="9.6" height="2"/><rect x="1856.7" y="249.0" width="9.6" height="2"/><rect x="1908.4" y="249.0" width="9.6" height="2"/><rect x="1959.7" y="249.0" width="9.6" height="2"/><rect x="2011.4" y="249.0" width="9.6" height="2"/><rect x="2062.7" y="249.0" width="9.6" height="2"/><rect x="2114.4" y="249.0" width="9.6" height="2"/><rect x="2165.7" y="249.0" width="9.6" height="2"/></svg>
<div class="rg" style="left:337.5px;top:282px;width:1852.5px;height:51px;border-radius:3.500px 0 0 3.500px;background:linear-gradient(#1a882c 0,#1a882c 22px,#187b29 27px,#187b29 100%)"></div>
<div class="rl" style="left:343.3px;top:285px;color:#d8edd8">HI-HATS&nbsp; RNB-HIPHOP-POP&nbsp; 2</div>
<svg style="left:0;top:0" width="2185" height="793" viewBox="0 0 2185 793" fill="#0e0e0e"><path d="M539.5 281.5 Q542.7 282.7 543.5 286.6 Q544.3 282.7 547.5 281.5Z"/><path d="M539.5 333.5 Q542.7 332.3 543.5 328.4 Q544.3 332.3 547.5 333.5Z"/><rect x="543.0" y="285" width="1" height="45" fill="#000" opacity="0"/><path d="M745.5 281.5 Q748.7 282.7 749.5 286.6 Q750.3 282.7 753.5 281.5Z"/><path d="M745.5 333.5 Q748.7 332.3 749.5 328.4 Q750.3 332.3 753.5 333.5Z"/><rect x="749.0" y="285" width="1" height="45" fill="#000" opacity="0"/><path d="M951.5 281.5 Q954.7 282.7 955.5 286.6 Q956.3 282.7 959.5 281.5Z"/><path d="M951.5 333.5 Q954.7 332.3 955.5 328.4 Q956.3 332.3 959.5 333.5Z"/><rect x="955.0" y="285" width="1" height="45" fill="#000" opacity="0"/><path d="M1157.5 281.5 Q1160.7 282.7 1161.5 286.6 Q1162.3 282.7 1165.5 281.5Z"/><path d="M1157.5 333.5 Q1160.7 332.3 1161.5 328.4 Q1162.3 332.3 1165.5 333.5Z"/><rect x="1161.0" y="285" width="1" height="45" fill="#000" opacity="0"/><path d="M1363.5 281.5 Q1366.7 282.7 1367.5 286.6 Q1368.3 282.7 1371.5 281.5Z"/><path d="M1363.5 333.5 Q1366.7 332.3 1367.5 328.4 Q1368.3 332.3 1371.5 333.5Z"/><rect x="1367.0" y="285" width="1" height="45" fill="#000" opacity="0"/><path d="M1569.5 281.5 Q1572.7 282.7 1573.5 286.6 Q1574.3 282.7 1577.5 281.5Z"/><path d="M1569.5 333.5 Q1572.7 332.3 1573.5 328.4 Q1574.3 332.3 1577.5 333.5Z"/><rect x="1573.0" y="285" width="1" height="45" fill="#000" opacity="0"/><path d="M1775.5 281.5 Q1778.7 282.7 1779.5 286.6 Q1780.3 282.7 1783.5 281.5Z"/><path d="M1775.5 333.5 Q1778.7 332.3 1779.5 328.4 Q1780.3 332.3 1783.5 333.5Z"/><rect x="1779.0" y="285" width="1" height="45" fill="#000" opacity="0"/><path d="M1981.5 281.5 Q1984.7 282.7 1985.5 286.6 Q1986.3 282.7 1989.5 281.5Z"/><path d="M1981.5 333.5 Q1984.7 332.3 1985.5 328.4 Q1986.3 332.3 1989.5 333.5Z"/><rect x="1985.0" y="285" width="1" height="45" fill="#000" opacity="0"/></svg>
<svg style="left:0;top:0" width="2185" height="793" viewBox="0 0 2185 793" shape-rendering="crispEdges" fill="#c6e8c8" opacity="1"><rect x="338.0" y="312.0" width="3.0" height="2"/><rect x="344.4" y="312.0" width="3.0" height="2"/><rect x="350.9" y="312.0" width="3.0" height="2"/><rect x="357.3" y="312.0" width="3.0" height="2"/><rect x="363.8" y="312.0" width="3.0" height="2"/><rect x="370.2" y="312.0" width="3.0" height="2"/><rect x="376.6" y="312.0" width="3.0" height="2"/><rect x="383.1" y="312.0" width="3.0" height="2"/><rect x="389.5" y="312.0" width="3.0" height="2"/><rect x="395.9" y="312.0" width="3.0" height="2"/><rect x="402.4" y="312.0" width="3.0" height="2"/><rect x="408.8" y="312.0" width="3.0" height="2"/><rect x="415.2" y="312.0" width="3.0" height="2"/><rect x="421.7" y="312.0" width="3.0" height="2"/><rect x="428.1" y="312.0" width="3.0" height="2"/><rect x="434.6" y="312.0" width="3.0" height="2"/><rect x="441.0" y="312.0" width="3.0" height="2"/><rect x="447.4" y="312.0" width="3.0" height="2"/><rect x="453.9" y="312.0" width="3.0" height="2"/><rect x="460.3" y="312.0" width="3.0" height="2"/><rect x="466.8" y="312.0" width="3.0" height="2"/><rect x="473.2" y="312.0" width="3.0" height="2"/><rect x="479.6" y="312.0" width="3.0" height="2"/><rect x="486.1" y="312.0" width="3.0" height="2"/><rect x="492.5" y="312.0" width="3.0" height="2"/><rect x="498.9" y="312.0" width="3.0" height="2"/><rect x="505.4" y="312.0" width="3.0" height="2"/><rect x="511.8" y="312.0" width="3.0" height="2"/><rect x="518.2" y="312.0" width="3.0" height="2"/><rect x="524.7" y="312.0" width="3.0" height="2"/><rect x="531.1" y="312.0" width="3.0" height="2"/><rect x="537.6" y="312.0" width="3.0" height="2"/><rect x="463.7" y="312.0" width="5.2" height="2"/></svg>
<svg style="left:0;top:0" width="2185" height="793" viewBox="0 0 2185 793" shape-rendering="crispEdges" fill="#c6e8c8" opacity="0.33"><rect x="544.0" y="312.0" width="3.0" height="2"/><rect x="550.4" y="312.0" width="3.0" height="2"/><rect x="556.9" y="312.0" width="3.0" height="2"/><rect x="563.3" y="312.0" width="3.0" height="2"/><rect x="569.8" y="312.0" width="3.0" height="2"/><rect x="576.2" y="312.0" width="3.0" height="2"/><rect x="582.6" y="312.0" width="3.0" height="2"/><rect x="589.1" y="312.0" width="3.0" height="2"/><rect x="595.5" y="312.0" width="3.0" height="2"/><rect x="601.9" y="312.0" width="3.0" height="2"/><rect x="608.4" y="312.0" width="3.0" height="2"/><rect x="614.8" y="312.0" width="3.0" height="2"/><rect x="621.2" y="312.0" width="3.0" height="2"/><rect x="627.7" y="312.0" width="3.0" height="2"/><rect x="634.1" y="312.0" width="3.0" height="2"/><rect x="640.6" y="312.0" width="3.0" height="2"/><rect x="647.0" y="312.0" width="3.0" height="2"/><rect x="653.4" y="312.0" width="3.0" height="2"/><rect x="659.9" y="312.0" width="3.0" height="2"/><rect x="666.3" y="312.0" width="3.0" height="2"/><rect x="672.8" y="312.0" width="3.0" height="2"/><rect x="679.2" y="312.0" width="3.0" height="2"/><rect x="685.6" y="312.0" width="3.0" height="2"/><rect x="692.1" y="312.0" width="3.0" height="2"/><rect x="698.5" y="312.0" width="3.0" height="2"/><rect x="704.9" y="312.0" width="3.0" height="2"/><rect x="711.4" y="312.0" width="3.0" height="2"/><rect x="717.8" y="312.0" width="3.0" height="2"/><rect x="724.2" y="312.0" width="3.0" height="2"/><rect x="730.7" y="312.0" width="3.0" height="2"/><rect x="737.1" y="312.0" width="3.0" height="2"/><rect x="743.6" y="312.0" width="3.0" height="2"/><rect x="669.7" y="312.0" width="5.2" height="2"/><rect x="750.0" y="312.0" width="3.0" height="2"/><rect x="756.4" y="312.0" width="3.0" height="2"/><rect x="762.9" y="312.0" width="3.0" height="2"/><rect x="769.3" y="312.0" width="3.0" height="2"/><rect x="775.8" y="312.0" width="3.0" height="2"/><rect x="782.2" y="312.0" width="3.0" height="2"/><rect x="788.6" y="312.0" width="3.0" height="2"/><rect x="795.1" y="312.0" width="3.0" height="2"/><rect x="801.5" y="312.0" width="3.0" height="2"/><rect x="807.9" y="312.0" width="3.0" height="2"/><rect x="814.4" y="312.0" width="3.0" height="2"/><rect x="820.8" y="312.0" width="3.0" height="2"/><rect x="827.2" y="312.0" width="3.0" height="2"/><rect x="833.7" y="312.0" width="3.0" height="2"/><rect x="840.1" y="312.0" width="3.0" height="2"/><rect x="846.6" y="312.0" width="3.0" height="2"/><rect x="853.0" y="312.0" width="3.0" height="2"/><rect x="859.4" y="312.0" width="3.0" height="2"/><rect x="865.9" y="312.0" width="3.0" height="2"/><rect x="872.3" y="312.0" width="3.0" height="2"/><rect x="878.8" y="312.0" width="3.0" height="2"/><rect x="885.2" y="312.0" width="3.0" height="2"/><rect x="891.6" y="312.0" width="3.0" height="2"/><rect x="898.1" y="312.0" width="3.0" height="2"/><rect x="904.5" y="312.0" width="3.0" height="2"/><rect x="910.9" y="312.0" width="3.0" height="2"/><rect x="917.4" y="312.0" width="3.0" height="2"/><rect x="923.8" y="312.0" width="3.0" height="2"/><rect x="930.2" y="312.0" width="3.0" height="2"/><rect x="936.7" y="312.0" width="3.0" height="2"/><rect x="943.1" y="312.0" width="3.0" height="2"/><rect x="949.6" y="312.0" width="3.0" height="2"/><rect x="875.7" y="312.0" width="5.2" height="2"/><rect x="956.0" y="312.0" width="3.0" height="2"/><rect x="962.4" y="312.0" width="3.0" height="2"/><rect x="968.9" y="312.0" width="3.0" height="2"/><rect x="975.3" y="312.0" width="3.0" height="2"/><rect x="981.8" y="312.0" width="3.0" height="2"/><rect x="988.2" y="312.0" width="3.0" height="2"/><rect x="994.6" y="312.0" width="3.0" height="2"/><rect x="1001.1" y="312.0" width="3.0" height="2"/><rect x="1007.5" y="312.0" width="3.0" height="2"/><rect x="1013.9" y="312.0" width="3.0" height="2"/><rect x="1020.4" y="312.0" width="3.0" height="2"/><rect x="1026.8" y="312.0" width="3.0" height="2"/><rect x="1033.2" y="312.0" width="3.0" height="2"/><rect x="1039.7" y="312.0" width="3.0" height="2"/><rect x="1046.1" y="312.0" width="3.0" height="2"/><rect x="1052.6" y="312.0" width="3.0" height="2"/><rect x="1059.0" y="312.0" width="3.0" height="2"/><rect x="1065.4" y="312.0" width="3.0" height="2"/><rect x="1071.9" y="312.0" width="3.0" height="2"/><rect x="1078.3" y="312.0" width="3.0" height="2"/><rect x="1084.8" y="312.0" width="3.0" height="2"/><rect x="1091.2" y="312.0" width="3.0" height="2"/><rect x="1097.6" y="312.0" width="3.0" height="2"/><rect x="1104.1" y="312.0" width="3.0" height="2"/><rect x="1110.5" y="312.0" width="3.0" height="2"/><rect x="1116.9" y="312.0" width="3.0" height="2"/><rect x="1123.4" y="312.0" width="3.0" height="2"/><rect x="1129.8" y="312.0" width="3.0" height="2"/><rect x="1136.2" y="312.0" width="3.0" height="2"/><rect x="1142.7" y="312.0" width="3.0" height="2"/><rect x="1149.1" y="312.0" width="3.0" height="2"/><rect x="1155.6" y="312.0" width="3.0" height="2"/><rect x="1081.7" y="312.0" width="5.2" height="2"/><rect x="1162.0" y="312.0" width="3.0" height="2"/><rect x="1168.4" y="312.0" width="3.0" height="2"/><rect x="1174.9" y="312.0" width="3.0" height="2"/><rect x="1181.3" y="312.0" width="3.0" height="2"/><rect x="1187.8" y="312.0" width="3.0" height="2"/><rect x="1194.2" y="312.0" width="3.0" height="2"/><rect x="1200.6" y="312.0" width="3.0" height="2"/><rect x="1207.1" y="312.0" width="3.0" height="2"/><rect x="1213.5" y="312.0" width="3.0" height="2"/><rect x="1219.9" y="312.0" width="3.0" height="2"/><rect x="1226.4" y="312.0" width="3.0" height="2"/><rect x="1232.8" y="312.0" width="3.0" height="2"/><rect x="1239.2" y="312.0" width="3.0" height="2"/><rect x="1245.7" y="312.0" width="3.0" height="2"/><rect x="1252.1" y="312.0" width="3.0" height="2"/><rect x="1258.6" y="312.0" width="3.0" height="2"/><rect x="1265.0" y="312.0" width="3.0" height="2"/><rect x="1271.4" y="312.0" width="3.0" height="2"/><rect x="1277.9" y="312.0" width="3.0" height="2"/><rect x="1284.3" y="312.0" width="3.0" height="2"/><rect x="1290.8" y="312.0" width="3.0" height="2"/><rect x="1297.2" y="312.0" width="3.0" height="2"/><rect x="1303.6" y="312.0" width="3.0" height="2"/><rect x="1310.1" y="312.0" width="3.0" height="2"/><rect x="1316.5" y="312.0" width="3.0" height="2"/><rect x="1322.9" y="312.0" width="3.0" height="2"/><rect x="1329.4" y="312.0" width="3.0" height="2"/><rect x="1335.8" y="312.0" width="3.0" height="2"/><rect x="1342.2" y="312.0" width="3.0" height="2"/><rect x="1348.7" y="312.0" width="3.0" height="2"/><rect x="1355.1" y="312.0" width="3.0" height="2"/><rect x="1361.6" y="312.0" width="3.0" height="2"/><rect x="1287.7" y="312.0" width="5.2" height="2"/><rect x="1368.0" y="312.0" width="3.0" height="2"/><rect x="1374.4" y="312.0" width="3.0" height="2"/><rect x="1380.9" y="312.0" width="3.0" height="2"/><rect x="1387.3" y="312.0" width="3.0" height="2"/><rect x="1393.8" y="312.0" width="3.0" height="2"/><rect x="1400.2" y="312.0" width="3.0" height="2"/><rect x="1406.6" y="312.0" width="3.0" height="2"/><rect x="1413.1" y="312.0" width="3.0" height="2"/><rect x="1419.5" y="312.0" width="3.0" height="2"/><rect x="1425.9" y="312.0" width="3.0" height="2"/><rect x="1432.4" y="312.0" width="3.0" height="2"/><rect x="1438.8" y="312.0" width="3.0" height="2"/><rect x="1445.2" y="312.0" width="3.0" height="2"/><rect x="1451.7" y="312.0" width="3.0" height="2"/><rect x="1458.1" y="312.0" width="3.0" height="2"/><rect x="1464.6" y="312.0" width="3.0" height="2"/><rect x="1471.0" y="312.0" width="3.0" height="2"/><rect x="1477.4" y="312.0" width="3.0" height="2"/><rect x="1483.9" y="312.0" width="3.0" height="2"/><rect x="1490.3" y="312.0" width="3.0" height="2"/><rect x="1496.8" y="312.0" width="3.0" height="2"/><rect x="1503.2" y="312.0" width="3.0" height="2"/><rect x="1509.6" y="312.0" width="3.0" height="2"/><rect x="1516.1" y="312.0" width="3.0" height="2"/><rect x="1522.5" y="312.0" width="3.0" height="2"/><rect x="1528.9" y="312.0" width="3.0" height="2"/><rect x="1535.4" y="312.0" width="3.0" height="2"/><rect x="1541.8" y="312.0" width="3.0" height="2"/><rect x="1548.2" y="312.0" width="3.0" height="2"/><rect x="1554.7" y="312.0" width="3.0" height="2"/><rect x="1561.1" y="312.0" width="3.0" height="2"/><rect x="1567.6" y="312.0" width="3.0" height="2"/><rect x="1493.7" y="312.0" width="5.2" height="2"/><rect x="1574.0" y="312.0" width="3.0" height="2"/><rect x="1580.4" y="312.0" width="3.0" height="2"/><rect x="1586.9" y="312.0" width="3.0" height="2"/><rect x="1593.3" y="312.0" width="3.0" height="2"/><rect x="1599.8" y="312.0" width="3.0" height="2"/><rect x="1606.2" y="312.0" width="3.0" height="2"/><rect x="1612.6" y="312.0" width="3.0" height="2"/><rect x="1619.1" y="312.0" width="3.0" height="2"/><rect x="1625.5" y="312.0" width="3.0" height="2"/><rect x="1631.9" y="312.0" width="3.0" height="2"/><rect x="1638.4" y="312.0" width="3.0" height="2"/><rect x="1644.8" y="312.0" width="3.0" height="2"/><rect x="1651.2" y="312.0" width="3.0" height="2"/><rect x="1657.7" y="312.0" width="3.0" height="2"/><rect x="1664.1" y="312.0" width="3.0" height="2"/><rect x="1670.6" y="312.0" width="3.0" height="2"/><rect x="1677.0" y="312.0" width="3.0" height="2"/><rect x="1683.4" y="312.0" width="3.0" height="2"/><rect x="1689.9" y="312.0" width="3.0" height="2"/><rect x="1696.3" y="312.0" width="3.0" height="2"/><rect x="1702.8" y="312.0" width="3.0" height="2"/><rect x="1709.2" y="312.0" width="3.0" height="2"/><rect x="1715.6" y="312.0" width="3.0" height="2"/><rect x="1722.1" y="312.0" width="3.0" height="2"/><rect x="1728.5" y="312.0" width="3.0" height="2"/><rect x="1734.9" y="312.0" width="3.0" height="2"/><rect x="1741.4" y="312.0" width="3.0" height="2"/><rect x="1747.8" y="312.0" width="3.0" height="2"/><rect x="1754.2" y="312.0" width="3.0" height="2"/><rect x="1760.7" y="312.0" width="3.0" height="2"/><rect x="1767.1" y="312.0" width="3.0" height="2"/><rect x="1773.6" y="312.0" width="3.0" height="2"/><rect x="1699.7" y="312.0" width="5.2" height="2"/><rect x="1780.0" y="312.0" width="3.0" height="2"/><rect x="1786.4" y="312.0" width="3.0" height="2"/><rect x="1792.9" y="312.0" width="3.0" height="2"/><rect x="1799.3" y="312.0" width="3.0" height="2"/><rect x="1805.8" y="312.0" width="3.0" height="2"/><rect x="1812.2" y="312.0" width="3.0" height="2"/><rect x="1818.6" y="312.0" width="3.0" height="2"/><rect x="1825.1" y="312.0" width="3.0" height="2"/><rect x="1831.5" y="312.0" width="3.0" height="2"/><rect x="1837.9" y="312.0" width="3.0" height="2"/><rect x="1844.4" y="312.0" width="3.0" height="2"/><rect x="1850.8" y="312.0" width="3.0" height="2"/><rect x="1857.2" y="312.0" width="3.0" height="2"/><rect x="1863.7" y="312.0" width="3.0" height="2"/><rect x="1870.1" y="312.0" width="3.0" height="2"/><rect x="1876.6" y="312.0" width="3.0" height="2"/><rect x="1883.0" y="312.0" width="3.0" height="2"/><rect x="1889.4" y="312.0" width="3.0" height="2"/><rect x="1895.9" y="312.0" width="3.0" height="2"/><rect x="1902.3" y="312.0" width="3.0" height="2"/><rect x="1908.8" y="312.0" width="3.0" height="2"/><rect x="1915.2" y="312.0" width="3.0" height="2"/><rect x="1921.6" y="312.0" width="3.0" height="2"/><rect x="1928.1" y="312.0" width="3.0" height="2"/><rect x="1934.5" y="312.0" width="3.0" height="2"/><rect x="1940.9" y="312.0" width="3.0" height="2"/><rect x="1947.4" y="312.0" width="3.0" height="2"/><rect x="1953.8" y="312.0" width="3.0" height="2"/><rect x="1960.2" y="312.0" width="3.0" height="2"/><rect x="1966.7" y="312.0" width="3.0" height="2"/><rect x="1973.1" y="312.0" width="3.0" height="2"/><rect x="1979.6" y="312.0" width="3.0" height="2"/><rect x="1905.7" y="312.0" width="5.2" height="2"/><rect x="1986.0" y="312.0" width="3.0" height="2"/><rect x="1992.4" y="312.0" width="3.0" height="2"/><rect x="1998.9" y="312.0" width="3.0" height="2"/><rect x="2005.3" y="312.0" width="3.0" height="2"/><rect x="2011.8" y="312.0" width="3.0" height="2"/><rect x="2018.2" y="312.0" width="3.0" height="2"/><rect x="2024.6" y="312.0" width="3.0" height="2"/><rect x="2031.1" y="312.0" width="3.0" height="2"/><rect x="2037.5" y="312.0" width="3.0" height="2"/><rect x="2043.9" y="312.0" width="3.0" height="2"/><rect x="2050.4" y="312.0" width="3.0" height="2"/><rect x="2056.8" y="312.0" width="3.0" height="2"/><rect x="2063.2" y="312.0" width="3.0" height="2"/><rect x="2069.7" y="312.0" width="3.0" height="2"/><rect x="2076.1" y="312.0" width="3.0" height="2"/><rect x="2082.6" y="312.0" width="3.0" height="2"/><rect x="2089.0" y="312.0" width="3.0" height="2"/><rect x="2095.4" y="312.0" width="3.0" height="2"/><rect x="2101.9" y="312.0" width="3.0" height="2"/><rect x="2108.3" y="312.0" width="3.0" height="2"/><rect x="2114.8" y="312.0" width="3.0" height="2"/><rect x="2121.2" y="312.0" width="3.0" height="2"/><rect x="2127.6" y="312.0" width="3.0" height="2"/><rect x="2134.1" y="312.0" width="3.0" height="2"/><rect x="2140.5" y="312.0" width="3.0" height="2"/><rect x="2146.9" y="312.0" width="3.0" height="2"/><rect x="2153.4" y="312.0" width="3.0" height="2"/><rect x="2159.8" y="312.0" width="3.0" height="2"/><rect x="2166.2" y="312.0" width="3.0" height="2"/><rect x="2172.7" y="312.0" width="3.0" height="2"/><rect x="2179.1" y="312.0" width="3.0" height="2"/><rect x="2111.7" y="312.0" width="5.2" height="2"/></svg>
<div class="rg" style="left:337.5px;top:336px;width:1852.5px;height:51px;border-radius:3.500px 0 0 3.500px;background:linear-gradient(#1a882c 0,#1a882c 22px,#187b29 27px,#187b29 100%)"></div>
<div class="rl" style="left:343.3px;top:339px;color:#d8edd8">Claps 01</div>
<svg style="left:0;top:0" width="2185" height="793" viewBox="0 0 2185 793" fill="#0e0e0e"><path d="M745.5 335.5 Q748.7 336.7 749.5 340.6 Q750.3 336.7 753.5 335.5Z"/><path d="M745.5 387.5 Q748.7 386.3 749.5 382.4 Q750.3 386.3 753.5 387.5Z"/><rect x="749.0" y="339" width="1" height="45" fill="#000" opacity="0"/><path d="M1157.5 335.5 Q1160.7 336.7 1161.5 340.6 Q1162.3 336.7 1165.5 335.5Z"/><path d="M1157.5 387.5 Q1160.7 386.3 1161.5 382.4 Q1162.3 386.3 1165.5 387.5Z"/><rect x="1161.0" y="339" width="1" height="45" fill="#000" opacity="0"/><path d="M1569.5 335.5 Q1572.7 336.7 1573.5 340.6 Q1574.3 336.7 1577.5 335.5Z"/><path d="M1569.5 387.5 Q1572.7 386.3 1573.5 382.4 Q1574.3 386.3 1577.5 387.5Z"/><rect x="1573.0" y="339" width="1" height="45" fill="#000" opacity="0"/><path d="M1981.5 335.5 Q1984.7 336.7 1985.5 340.6 Q1986.3 336.7 1989.5 335.5Z"/><path d="M1981.5 387.5 Q1984.7 386.3 1985.5 382.4 Q1986.3 386.3 1989.5 387.5Z"/><rect x="1985.0" y="339" width="1" height="45" fill="#000" opacity="0"/></svg>
<svg style="left:0;top:0" width="2185" height="793" viewBox="0 0 2185 793" shape-rendering="crispEdges" fill="#c6e8c8" opacity="1"><rect x="647.0" y="369.0" width="3.0" height="2"/><rect x="653.4" y="369.0" width="3.0" height="2"/><rect x="659.9" y="369.0" width="3.0" height="2"/><rect x="666.3" y="369.0" width="3.0" height="2"/><rect x="672.8" y="369.0" width="3.0" height="2"/><rect x="679.2" y="369.0" width="3.0" height="2"/><rect x="685.6" y="369.0" width="3.0" height="2"/><rect x="692.1" y="369.0" width="3.0" height="2"/><rect x="698.5" y="369.0" width="3.0" height="2"/><rect x="704.9" y="369.0" width="3.0" height="2"/><rect x="711.4" y="369.0" width="3.0" height="2"/><rect x="717.8" y="369.0" width="3.0" height="2"/><rect x="724.2" y="369.0" width="3.0" height="2"/><rect x="730.7" y="369.0" width="3.0" height="2"/><rect x="737.1" y="369.0" width="3.0" height="2"/><rect x="743.6" y="369.0" width="3.0" height="2"/><rect x="718.1" y="369.0" width="8.2" height="2"/></svg>
<svg style="left:0;top:0" width="2185" height="793" viewBox="0 0 2185 793" shape-rendering="crispEdges" fill="#c6e8c8" opacity="0.33"><rect x="1059.0" y="369.0" width="3.0" height="2"/><rect x="1065.4" y="369.0" width="3.0" height="2"/><rect x="1071.9" y="369.0" width="3.0" height="2"/><rect x="1078.3" y="369.0" width="3.0" height="2"/><rect x="1084.8" y="369.0" width="3.0" height="2"/><rect x="1091.2" y="369.0" width="3.0" height="2"/><rect x="1097.6" y="369.0" width="3.0" height="2"/><rect x="1104.1" y="369.0" width="3.0" height="2"/><rect x="1110.5" y="369.0" width="3.0" height="2"/><rect x="1116.9" y="369.0" width="3.0" height="2"/><rect x="1123.4" y="369.0" width="3.0" height="2"/><rect x="1129.8" y="369.0" width="3.0" height="2"/><rect x="1136.2" y="369.0" width="3.0" height="2"/><rect x="1142.7" y="369.0" width="3.0" height="2"/><rect x="1149.1" y="369.0" width="3.0" height="2"/><rect x="1155.6" y="369.0" width="3.0" height="2"/><rect x="1130.1" y="369.0" width="8.2" height="2"/><rect x="1471.0" y="369.0" width="3.0" height="2"/><rect x="1477.4" y="369.0" width="3.0" height="2"/><rect x="1483.9" y="369.0" width="3.0" height="2"/><rect x="1490.3" y="369.0" width="3.0" height="2"/><rect x="1496.8" y="369.0" width="3.0" height="2"/><rect x="1503.2" y="369.0" width="3.0" height="2"/><rect x="1509.6" y="369.0" width="3.0" height="2"/><rect x="1516.1" y="369.0" width="3.0" height="2"/><rect x="1522.5" y="369.0" width="3.0" height="2"/><rect x="1528.9" y="369.0" width="3.0" height="2"/><rect x="1535.4" y="369.0" width="3.0" height="2"/><rect x="1541.8" y="369.0" width="3.0" height="2"/><rect x="1548.2" y="369.0" width="3.0" height="2"/><rect x="1554.7" y="369.0" width="3.0" height="2"/><rect x="1561.1" y="369.0" width="3.0" height="2"/><rect x="1567.6" y="369.0" width="3.0" height="2"/><rect x="1542.1" y="369.0" width="8.2" height="2"/><rect x="1883.0" y="369.0" width="3.0" height="2"/><rect x="1889.4" y="369.0" width="3.0" height="2"/><rect x="1895.9" y="369.0" width="3.0" height="2"/><rect x="1902.3" y="369.0" width="3.0" height="2"/><rect x="1908.8" y="369.0" width="3.0" height="2"/><rect x="1915.2" y="369.0" width="3.0" height="2"/><rect x="1921.6" y="369.0" width="3.0" height="2"/><rect x="1928.1" y="369.0" width="3.0" height="2"/><rect x="1934.5" y="369.0" width="3.0" height="2"/><rect x="1940.9" y="369.0" width="3.0" height="2"/><rect x="1947.4" y="369.0" width="3.0" height="2"/><rect x="1953.8" y="369.0" width="3.0" height="2"/><rect x="1960.2" y="369.0" width="3.0" height="2"/><rect x="1966.7" y="369.0" width="3.0" height="2"/><rect x="1973.1" y="369.0" width="3.0" height="2"/><rect x="1979.6" y="369.0" width="3.0" height="2"/><rect x="1954.1" y="369.0" width="8.2" height="2"/></svg>
<div class="rg" style="left:337.5px;top:390px;width:308.5px;height:51px;border-radius:3.500px;background:linear-gradient(#2f5b8e 0,#2f5b8e 36px,#2b5280 40px)"></div>
<div class="rl" style="left:343.3px;top:393px;color:#dce8f8"><svg class="ud" width="6" height="11" viewBox="0 0 6 11"><path d="M3 .8 L5.700 4.500 H.3Z M3 10.200 L5.700 6.500 H.3Z" fill="currentColor"/></svg>Pop the Clutch Beat 02 &nbsp;<span class="lpi">ΩΩ</span></div>
<div class="rg" style="left:749.5px;top:390px;width:1132.5px;height:51px;border-radius:3.500px;background:linear-gradient(#2f5b8e 0,#2f5b8e 36px,#2b5280 40px)"></div>
<div class="rl" style="left:755.3px;top:393px;color:#dce8f8"><svg class="ud" width="6" height="11" viewBox="0 0 6 11"><path d="M3 .8 L5.700 4.500 H.3Z M3 10.200 L5.700 6.500 H.3Z" fill="currentColor"/></svg>Pop the Clutch Beat 02.1 &nbsp;<span class="lpi">ΩΩ</span></div>
<svg style="left:0;top:0" width="2185" height="793" viewBox="0 0 2185 793" fill="#0e0e0e"><path d="M1157.5 389.5 Q1160.7 390.7 1161.5 394.6 Q1162.3 390.7 1165.5 389.5Z"/><path d="M1157.5 441.5 Q1160.7 440.3 1161.5 436.4 Q1162.3 440.3 1165.5 441.5Z"/><rect x="1161.0" y="393" width="1" height="45" fill="#000" opacity="0"/><path d="M1569.5 389.5 Q1572.7 390.7 1573.5 394.6 Q1574.3 390.7 1577.5 389.5Z"/><path d="M1569.5 441.5 Q1572.7 440.3 1573.5 436.4 Q1574.3 440.3 1577.5 441.5Z"/><rect x="1573.0" y="393" width="1" height="45" fill="#000" opacity="0"/></svg>
<div class="rg" style="left:1985.5px;top:390px;width:204.5px;height:51px;border-radius:3.500px 0 0 3.500px;background:linear-gradient(#cbddf8 0,#c3d8f6 17.500px,#2f5b8e 18px,#2f5b8e 36px,#2b5280 40px);box-shadow:0 0 0 1px #0e0e0e,inset 0 0 0 1.500px #cfe1fb"></div>
<div class="rl" style="left:1991.3px;top:393px;color:#1f4878"><svg class="ud" width="6" height="11" viewBox="0 0 6 11"><path d="M3 .8 L5.700 4.500 H.3Z M3 10.200 L5.700 6.500 H.3Z" fill="currentColor"/></svg>Pop the Clutch Beat 02.2 &nbsp;<span class="lpi">ΩΩ</span></div>
<svg style="left:0;top:0" width="2185" height="793" viewBox="0 0 2185 793" opacity="1"><path d="M338.5 425.0L338.5 413.5L339.0 420.9L339.5 421.3L340.0 421.4L340.5 421.7L341.0 421.7L341.5 422.6L342.0 423.2L342.5 423.3L343.0 423.7L343.5 422.9L344.0 422.9L344.5 424.0L345.0 422.7L345.5 420.5L346.0 420.7L346.5 421.5L347.0 422.4L347.5 422.5L348.0 424.3L348.5 424.6L349.0 424.6L349.5 424.4L350.0 422.1L350.5 422.1L351.0 423.2L351.5 421.7L352.0 422.1L352.5 424.6L353.0 424.2L353.5 423.4L354.0 423.4L354.5 424.4L355.0 424.1L355.5 424.2L356.0 424.6L356.5 422.3L357.0 422.3L357.5 424.2L358.0 422.8L358.5 422.5L359.0 422.7L359.5 423.4L360.0 422.6L360.5 422.6L361.0 424.1L361.5 424.2L362.0 424.4L362.5 421.2L363.0 421.2L363.5 414.1L364.0 414.1L364.5 421.2L365.0 422.4L365.5 423.1L366.0 420.9L366.5 420.9L367.0 424.0L367.5 424.1L368.0 424.4L368.5 424.3L369.0 420.5L369.5 420.5L370.0 412.2L370.5 412.2L371.0 421.6L371.5 421.6L372.0 422.3L372.5 422.2L373.0 422.2L373.5 423.7L374.0 424.1L374.5 424.2L375.0 424.3L375.5 424.4L376.0 423.4L376.5 423.4L377.0 423.2L377.5 421.8L378.0 421.5L378.5 421.9L379.0 422.3L379.5 422.8L380.0 423.2L380.5 423.4L381.0 423.9L381.5 424.1L382.0 420.6L382.5 420.6L383.0 412.4L383.5 412.4L384.0 421.4L384.5 422.2L385.0 422.9L385.5 422.6L386.0 422.6L386.5 423.9L387.0 424.1L387.5 424.4L388.0 424.4L388.5 424.5L389.0 422.9L389.5 422.9L390.0 424.0L390.5 422.4L391.0 422.6L391.5 423.0L392.0 421.3L392.5 421.3L393.0 424.3L393.5 424.5L394.0 424.1L394.5 420.7L395.0 420.7L395.5 412.6L396.0 412.6L396.5 412.6L397.0 421.3L397.5 422.7L398.0 423.2L398.5 423.0L399.0 423.0L399.5 424.1L400.0 424.2L400.5 424.3L401.0 421.0L401.5 421.0L402.0 413.4L402.5 413.4L403.0 413.4L403.5 420.1L404.0 420.6L404.5 421.4L405.0 422.1L405.5 422.1L406.0 422.8L406.5 422.8L407.0 423.5L407.5 423.6L408.0 423.2L408.5 423.2L409.0 424.0L409.5 423.1L410.0 421.1L410.5 421.7L411.0 422.7L411.5 421.4L412.0 421.4L412.5 424.3L413.0 424.2L413.5 424.6L414.0 420.9L414.5 420.9L415.0 413.3L415.5 413.3L416.0 421.7L416.5 421.9L417.0 422.9L417.5 421.6L418.0 421.6L418.5 423.8L419.0 424.1L419.5 424.2L420.0 424.4L420.5 424.3L421.0 423.2L421.5 423.2L422.0 424.1L422.5 422.9L423.0 422.5L423.5 423.0L424.0 421.1L424.5 421.1L425.0 424.0L425.5 424.6L426.0 424.4L426.5 424.1L427.0 424.4L427.5 422.4L428.0 422.4L428.5 422.8L429.0 421.2L429.5 421.2L430.0 422.3L430.5 422.8L431.0 423.0L431.5 424.4L432.0 424.4L432.5 424.4L433.0 424.5L433.5 424.5L434.0 420.9L434.5 420.9L435.0 422.0L435.5 421.8L436.0 422.0L436.5 422.5L437.0 421.6L437.5 421.6L438.0 424.2L438.5 424.3L439.0 424.3L439.5 424.3L440.0 420.6L440.5 412.3L441.0 412.3L441.5 412.3L442.0 420.4L442.5 420.7L443.0 420.9L443.5 421.3L444.0 421.7L444.5 422.3L445.0 422.6L445.5 422.8L446.0 423.3L446.5 423.2L447.0 423.2L447.5 423.8L448.0 423.3L448.5 422.5L449.0 422.9L449.5 423.3L450.0 421.6L450.5 421.6L451.0 424.3L451.5 424.2L452.0 424.3L452.5 421.2L453.0 421.0L453.5 414.2L454.0 414.2L454.5 414.2L455.0 422.6L455.5 422.5L456.0 423.2L456.5 422.4L457.0 422.4L457.5 424.2L458.0 424.2L458.5 424.5L459.0 424.5L459.5 421.2L460.0 421.2L460.5 424.0L461.0 422.7L461.5 422.2L462.0 422.9L462.5 423.2L463.0 421.3L463.5 421.3L464.0 424.2L464.5 424.3L465.0 424.3L465.5 420.8L466.0 420.8L466.5 413.1L467.0 413.1L467.5 421.8L468.0 422.3L468.5 422.5L469.0 420.9L469.5 420.9L470.0 423.9L470.5 424.0L471.0 424.3L471.5 424.1L472.0 420.7L472.5 420.7L473.0 412.8L473.5 412.8L474.0 421.8L474.5 422.3L475.0 422.7L475.5 421.5L476.0 421.5L476.5 423.7L477.0 424.1L477.5 424.3L478.0 424.4L478.5 424.5L479.0 423.1L479.5 423.1L480.0 422.4L480.5 419.8L481.0 421.1L481.5 421.5L482.0 421.9L482.5 422.6L483.0 424.3L483.5 424.3L484.0 424.6L484.5 424.2L485.0 421.0L485.5 421.0L486.0 413.6L486.5 413.6L487.0 421.7L487.5 422.8L488.0 422.7L488.5 422.8L489.0 422.8L489.5 424.0L490.0 424.1L490.5 424.3L491.0 424.4L491.5 424.6L492.0 423.4L492.5 423.4L493.0 422.8L493.5 421.4L494.0 421.4L494.5 422.1L495.0 421.8L495.5 421.8L496.0 423.1L496.5 423.4L497.0 423.5L497.5 420.6L498.0 420.6L498.5 412.5L499.0 412.5L499.5 412.5L500.0 421.7L500.5 422.0L501.0 422.7L501.5 422.1L502.0 422.1L502.5 423.8L503.0 424.1L503.5 424.3L504.0 420.5L504.5 420.5L505.0 412.3L505.5 412.3L506.0 412.3L506.5 419.4L507.0 420.5L507.5 421.3L508.0 421.4L508.5 421.8L509.0 422.2L509.5 422.6L510.0 423.2L510.5 423.4L511.0 420.9L511.5 420.9L512.0 423.9L512.5 423.3L513.0 422.5L513.5 422.8L514.0 423.4L514.5 421.7L515.0 421.7L515.5 424.6L516.0 424.2L516.5 424.2L517.0 420.8L517.5 420.8L518.0 413.1L518.5 413.1L519.0 421.5L519.5 422.1L520.0 422.8L520.5 423.1L521.0 423.2L521.5 423.7L522.0 424.0L522.5 424.2L523.0 424.4L523.5 424.2L524.0 423.3L524.5 423.3L525.0 424.6L525.5 423.8L526.0 422.7L526.5 422.4L527.0 421.6L527.5 421.6L528.0 423.0L528.5 423.1L529.0 423.5L529.5 423.6L530.0 423.9L530.5 421.2L531.0 421.2L531.5 422.8L532.0 421.9L532.5 422.1L533.0 422.7L533.5 421.3L534.0 421.3L534.5 423.7L535.0 423.7L535.5 424.2L536.0 424.5L536.5 424.4L537.0 421.0L537.5 421.0L538.0 423.0L538.5 422.0L539.0 422.4L539.5 422.6L540.0 422.5L540.5 422.5L541.0 423.4L541.5 423.8L542.0 423.9L542.5 424.2L543.0 421.0L543.5 413.5L544.0 413.5L544.5 413.5L545.0 420.9L545.5 421.3L546.0 421.4L546.5 421.7L547.0 421.7L547.5 422.6L548.0 423.2L548.5 423.3L549.0 423.7L549.5 422.9L550.0 422.9L550.5 424.0L551.0 422.7L551.5 420.5L552.0 420.7L552.5 421.5L553.0 422.4L553.5 422.5L554.0 424.3L554.5 424.6L555.0 424.6L555.5 424.4L556.0 422.1L556.5 422.1L557.0 423.2L557.5 421.7L558.0 422.1L558.5 424.6L559.0 424.2L559.5 423.4L560.0 423.4L560.5 424.4L561.0 424.1L561.5 424.2L562.0 424.6L562.5 422.3L563.0 422.3L563.5 424.2L564.0 422.8L564.5 422.5L565.0 422.7L565.5 423.4L566.0 422.6L566.5 422.6L567.0 424.1L567.5 424.2L568.0 424.4L568.5 421.2L569.0 421.2L569.5 414.1L570.0 414.1L570.5 421.2L571.0 422.4L571.5 423.1L572.0 420.9L572.5 420.9L573.0 424.0L573.5 424.1L574.0 424.4L574.5 424.3L575.0 420.5L575.5 420.5L576.0 412.2L576.5 412.2L577.0 421.6L577.5 421.6L578.0 422.3L578.5 422.2L579.0 422.2L579.5 423.7L580.0 424.1L580.5 424.2L581.0 424.3L581.5 424.4L582.0 423.4L582.5 423.4L583.0 423.2L583.5 421.8L584.0 421.5L584.5 421.9L585.0 422.3L585.5 422.8L586.0 423.2L586.5 423.4L587.0 423.9L587.5 424.1L588.0 420.6L588.5 420.6L589.0 412.4L589.5 412.4L590.0 421.4L590.5 422.2L591.0 422.9L591.5 422.6L592.0 422.6L592.5 423.9L593.0 424.1L593.5 424.4L594.0 424.4L594.5 424.5L595.0 422.9L595.5 422.9L596.0 424.0L596.5 422.4L597.0 422.6L597.5 423.0L598.0 421.3L598.5 421.3L599.0 424.3L599.5 424.5L600.0 424.1L600.5 420.7L601.0 420.7L601.5 412.6L602.0 412.6L602.5 412.6L603.0 421.3L603.5 422.7L604.0 423.2L604.5 423.0L605.0 423.0L605.5 424.1L606.0 424.2L606.5 424.3L607.0 421.0L607.5 421.0L608.0 413.4L608.5 413.4L609.0 413.4L609.5 420.1L610.0 420.6L610.5 421.4L611.0 422.1L611.5 422.1L612.0 422.8L612.5 422.8L613.0 423.5L613.5 423.6L614.0 423.2L614.5 423.2L615.0 424.0L615.5 423.1L616.0 421.1L616.5 421.7L617.0 422.7L617.5 421.4L618.0 421.4L618.5 424.3L619.0 424.2L619.5 424.6L620.0 420.9L620.5 420.9L621.0 413.3L621.5 413.3L622.0 421.7L622.5 421.9L623.0 422.9L623.5 421.6L624.0 421.6L624.5 423.8L625.0 424.1L625.5 424.2L626.0 424.4L626.5 424.3L627.0 423.2L627.5 423.2L628.0 424.1L628.5 422.9L629.0 422.5L629.5 423.0L630.0 421.1L630.5 421.1L631.0 424.0L631.5 424.6L632.0 424.4L632.5 424.1L633.0 424.4L633.5 422.4L634.0 422.4L634.5 422.8L635.0 421.2L635.5 421.2L636.0 422.3L636.5 422.8L637.0 423.0L637.5 424.4L638.0 424.4L638.5 424.4L639.0 424.5L639.5 424.5L640.0 420.9L640.5 420.9L641.0 422.0L641.5 421.8L642.0 422.0L642.5 422.5L643.0 421.6L643.5 421.6L644.0 424.2L644.5 424.3L645.0 424.3L645.5 424.3L645.5 425.0L645.5 426.0L645.0 426.0L644.5 426.1L644.0 426.0L643.5 428.4L643.0 428.5L642.5 427.9L642.0 428.9L641.5 428.8L641.0 428.7L640.5 430.1L640.0 430.1L639.5 426.2L639.0 425.9L638.5 426.1L638.0 426.3L637.5 426.1L637.0 427.6L636.5 427.6L636.0 428.5L635.5 429.0L635.0 428.9L634.5 427.7L634.0 428.0L633.5 428.5L633.0 426.4L632.5 426.1L632.0 426.2L631.5 426.1L631.0 426.4L630.5 429.9L630.0 429.5L629.5 427.7L629.0 428.3L628.5 427.6L628.0 426.2L627.5 427.0L627.0 427.0L626.5 426.1L626.0 426.3L625.5 426.2L625.0 426.4L624.5 426.7L624.0 428.7L623.5 428.5L623.0 427.6L622.5 428.9L622.0 428.4L621.5 438.3L621.0 438.3L620.5 430.1L620.0 429.5L619.5 426.4L619.0 426.0L618.5 426.4L618.0 429.6L617.5 429.3L617.0 427.5L616.5 429.1L616.0 430.1L615.5 427.2L615.0 426.4L614.5 427.6L614.0 427.3L613.5 426.9L613.0 427.1L612.5 427.6L612.0 427.9L611.5 428.2L611.0 428.5L610.5 429.0L610.0 429.9L609.5 431.0L609.0 437.1L608.5 435.7L608.0 438.2L607.5 429.7L607.0 429.7L606.5 426.3L606.0 426.2L605.5 426.5L605.0 427.6L604.5 427.4L604.0 427.5L603.5 427.6L603.0 429.6L602.5 436.6L602.0 437.1L601.5 437.7L601.0 430.1L600.5 429.6L600.0 426.1L599.5 426.3L599.0 426.0L598.5 429.1L598.0 429.3L597.5 427.2L597.0 428.1L596.5 428.1L596.0 426.7L595.5 427.3L595.0 428.0L594.5 426.3L594.0 426.1L593.5 426.1L593.0 426.4L592.5 426.7L592.0 428.2L591.5 428.1L591.0 427.8L590.5 428.5L590.0 429.2L589.5 437.2L589.0 438.5L588.5 430.4L588.0 430.0L587.5 426.0L587.0 426.7L586.5 427.0L586.0 427.6L585.5 427.9L585.0 428.1L584.5 428.6L584.0 428.8L583.5 428.9L583.0 427.5L582.5 427.0L582.0 427.3L581.5 426.0L581.0 426.0L580.5 426.3L580.0 426.5L579.5 426.7L579.0 428.2L578.5 428.3L578.0 428.4L577.5 428.9L577.0 429.0L576.5 439.0L576.0 437.8L575.5 430.5L575.0 430.2L574.5 426.1L574.0 426.1L573.5 426.4L573.0 426.5L572.5 429.1L572.0 430.2L571.5 427.3L571.0 427.9L570.5 429.0L570.0 435.7L569.5 437.7L569.0 429.5L568.5 429.1L568.0 426.3L567.5 426.0L567.0 426.0L566.5 427.7L566.0 427.7L565.5 427.2L565.0 428.0L564.5 427.5L564.0 427.6L563.5 426.4L563.0 428.7L562.5 428.8L562.0 426.4L561.5 426.0L561.0 426.1L560.5 426.4L560.0 426.9L559.5 427.3L559.0 426.3L558.5 426.1L558.0 428.0L557.5 428.2L557.0 427.3L556.5 428.3L556.0 428.1L555.5 425.9L555.0 426.4L554.5 426.2L554.0 426.2L553.5 427.5L553.0 427.8L552.5 428.5L552.0 429.4L551.5 430.3L551.0 427.6L550.5 426.5L550.0 427.9L549.5 427.8L549.0 426.8L548.5 427.2L548.0 427.4L547.5 428.1L547.0 428.7L546.5 428.9L546.0 429.3L545.5 429.3L545.0 429.4L544.5 437.1L544.0 437.9L543.5 435.8L543.0 429.3L542.5 426.2L542.0 426.4L541.5 426.7L541.0 427.1L540.5 427.7L540.0 428.1L539.5 428.2L539.0 427.8L538.5 428.9L538.0 427.3L537.5 429.3L537.0 428.7L536.5 426.3L536.0 426.3L535.5 426.2L535.0 426.9L534.5 426.9L534.0 429.3L533.5 428.7L533.0 428.3L532.5 428.2L532.0 428.3L531.5 427.9L531.0 429.4L530.5 429.1L530.0 426.7L529.5 427.0L529.0 427.1L528.5 427.4L528.0 427.5L527.5 428.8L527.0 429.4L526.5 428.1L526.0 427.8L525.5 426.6L525.0 426.0L524.5 427.4L524.0 427.2L523.5 426.2L523.0 426.1L522.5 426.3L522.0 426.5L521.5 426.8L521.0 427.5L520.5 427.3L520.0 427.8L519.5 428.4L519.0 429.1L518.5 438.4L518.0 438.0L517.5 429.9L517.0 429.6L516.5 426.4L516.0 426.2L515.5 425.9L515.0 428.6L514.5 428.8L514.0 427.3L513.5 427.8L513.0 427.9L512.5 427.0L512.0 426.5L511.5 429.6L511.0 429.9L510.5 427.1L510.0 427.3L509.5 428.0L509.0 428.5L508.5 428.8L508.0 429.2L507.5 428.9L507.0 430.4L506.5 431.4L506.0 437.0L505.5 437.9L505.0 438.3L504.5 429.6L504.0 430.3L503.5 426.2L503.0 426.3L502.5 426.8L502.0 428.0L501.5 429.0L501.0 427.7L500.5 428.8L500.0 428.4L499.5 438.2L499.0 439.2L498.5 438.5L498.0 430.0L497.5 430.0L497.0 427.0L496.5 426.8L496.0 427.1L495.5 428.2L495.0 428.4L494.5 428.8L494.0 429.8L493.5 428.4L493.0 427.6L492.5 427.2L492.0 426.8L491.5 426.0L491.0 426.4L490.5 426.2L490.0 426.3L489.5 426.4L489.0 427.4L488.5 427.5L488.0 428.1L487.5 427.5L487.0 428.5L486.5 437.3L486.0 435.8L485.5 429.6L485.0 429.3L484.5 426.2L484.0 426.4L483.5 426.3L483.0 426.3L482.5 427.5L482.0 429.2L481.5 428.3L481.0 429.9L480.5 430.3L480.0 428.6L479.5 427.5L479.0 427.3L478.5 426.4L478.0 426.4L477.5 426.3L477.0 426.4L476.5 426.8L476.0 428.7L475.5 429.3L475.0 427.7L474.5 427.9L474.0 428.5L473.5 438.4L473.0 436.9L472.5 429.7L472.0 429.4L471.5 426.2L471.0 426.3L470.5 426.4L470.0 426.5L469.5 429.4L469.0 430.1L468.5 428.2L468.0 428.5L467.5 429.0L467.0 437.5L466.5 437.5L466.0 429.8L465.5 430.1L465.0 426.2L464.5 426.4L464.0 426.0L463.5 428.9L463.0 429.0L462.5 427.4L462.0 427.7L461.5 428.0L461.0 427.5L460.5 426.7L460.0 429.4L459.5 429.1L459.0 425.9L458.5 426.2L458.0 426.4L457.5 426.4L457.0 428.3L456.5 428.6L456.0 427.3L455.5 428.1L455.0 427.9L454.5 436.4L454.0 437.5L453.5 435.0L453.0 429.3L452.5 429.3L452.0 426.4L451.5 426.1L451.0 426.0L450.5 428.2L450.0 428.5L449.5 426.9L449.0 427.5L448.5 427.6L448.0 427.1L447.5 426.6L447.0 427.6L446.5 427.3L446.0 427.1L445.5 427.8L445.0 428.1L444.5 428.0L444.0 428.5L443.5 429.5L443.0 429.5L442.5 430.1L442.0 429.8L441.5 438.3L441.0 439.5L440.5 437.9L440.0 429.5L439.5 426.0L439.0 426.0L438.5 426.1L438.0 426.0L437.5 428.4L437.0 428.5L436.5 427.9L436.0 428.9L435.5 428.8L435.0 428.7L434.5 430.1L434.0 430.1L433.5 426.2L433.0 425.9L432.5 426.1L432.0 426.3L431.5 426.1L431.0 427.6L430.5 427.6L430.0 428.5L429.5 429.0L429.0 428.9L428.5 427.7L428.0 428.0L427.5 428.5L427.0 426.4L426.5 426.1L426.0 426.2L425.5 426.1L425.0 426.4L424.5 429.9L424.0 429.5L423.5 427.7L423.0 428.3L422.5 427.6L422.0 426.2L421.5 427.0L421.0 427.0L420.5 426.1L420.0 426.3L419.5 426.2L419.0 426.4L418.5 426.7L418.0 428.7L417.5 428.5L417.0 427.6L416.5 428.9L416.0 428.4L415.5 438.3L415.0 438.3L414.5 430.1L414.0 429.5L413.5 426.4L413.0 426.0L412.5 426.4L412.0 429.6L411.5 429.3L411.0 427.5L410.5 429.1L410.0 430.1L409.5 427.2L409.0 426.4L408.5 427.6L408.0 427.3L407.5 426.9L407.0 427.1L406.5 427.6L406.0 427.9L405.5 428.2L405.0 428.5L404.5 429.0L404.0 429.9L403.5 431.0L403.0 437.1L402.5 435.7L402.0 438.2L401.5 429.7L401.0 429.7L400.5 426.3L400.0 426.2L399.5 426.5L399.0 427.6L398.5 427.4L398.0 427.5L397.5 427.6L397.0 429.6L396.5 436.6L396.0 437.1L395.5 437.7L395.0 430.1L394.5 429.6L394.0 426.1L393.5 426.3L393.0 426.0L392.5 429.1L392.0 429.3L391.5 427.2L391.0 428.1L390.5 428.1L390.0 426.7L389.5 427.3L389.0 428.0L388.5 426.3L388.0 426.1L387.5 426.1L387.0 426.4L386.5 426.7L386.0 428.2L385.5 428.1L385.0 427.8L384.5 428.5L384.0 429.2L383.5 437.2L383.0 438.5L382.5 430.4L382.0 430.0L381.5 426.0L381.0 426.7L380.5 427.0L380.0 427.6L379.5 427.9L379.0 428.1L378.5 428.6L378.0 428.8L377.5 428.9L377.0 427.5L376.5 427.0L376.0 427.3L375.5 426.0L375.0 426.0L374.5 426.3L374.0 426.5L373.5 426.7L373.0 428.2L372.5 428.3L372.0 428.4L371.5 428.9L371.0 429.0L370.5 439.0L370.0 437.8L369.5 430.5L369.0 430.2L368.5 426.1L368.0 426.1L367.5 426.4L367.0 426.5L366.5 429.1L366.0 430.2L365.5 427.3L365.0 427.9L364.5 429.0L364.0 435.7L363.5 437.7L363.0 429.5L362.5 429.1L362.0 426.3L361.5 426.0L361.0 426.0L360.5 427.7L360.0 427.7L359.5 427.2L359.0 428.0L358.5 427.5L358.0 427.6L357.5 426.4L357.0 428.7L356.5 428.8L356.0 426.4L355.5 426.0L355.0 426.1L354.5 426.4L354.0 426.9L353.5 427.3L353.0 426.3L352.5 426.1L352.0 428.0L351.5 428.2L351.0 427.3L350.5 428.3L350.0 428.1L349.5 425.9L349.0 426.4L348.5 426.2L348.0 426.2L347.5 427.5L347.0 427.8L346.5 428.5L346.0 429.4L345.5 430.3L345.0 427.6L344.5 426.5L344.0 427.9L343.5 427.8L343.0 426.8L342.5 427.2L342.0 427.4L341.5 428.1L341.0 428.7L340.5 428.9L340.0 429.3L339.5 429.3L339.0 429.4L338.5 437.1Z" fill="#a9c6ea"/></svg>
<svg style="left:0;top:0" width="2185" height="793" viewBox="0 0 2185 793" opacity="1"><path d="M750.5 425.0L750.5 413.5L751.0 420.9L751.5 421.3L752.0 421.4L752.5 421.7L753.0 421.7L753.5 422.6L754.0 423.2L754.5 423.3L755.0 423.7L755.5 422.9L756.0 422.9L756.5 424.0L757.0 422.7L757.5 420.5L758.0 420.7L758.5 421.5L759.0 422.4L759.5 422.5L760.0 424.3L760.5 424.6L761.0 424.6L761.5 424.4L762.0 422.1L762.5 422.1L763.0 423.2L763.5 421.7L764.0 422.1L764.5 424.6L765.0 424.2L765.5 423.4L766.0 423.4L766.5 424.4L767.0 424.1L767.5 424.2L768.0 424.6L768.5 422.3L769.0 422.3L769.5 424.2L770.0 422.8L770.5 422.5L771.0 422.7L771.5 423.4L772.0 422.6L772.5 422.6L773.0 424.1L773.5 424.2L774.0 424.4L774.5 421.2L775.0 421.2L775.5 414.1L776.0 414.1L776.5 421.2L777.0 422.4L777.5 423.1L778.0 420.9L778.5 420.9L779.0 424.0L779.5 424.1L780.0 424.4L780.5 424.3L781.0 420.5L781.5 420.5L782.0 412.2L782.5 412.2L783.0 421.6L783.5 421.6L784.0 422.3L784.5 422.2L785.0 422.2L785.5 423.7L786.0 424.1L786.5 424.2L787.0 424.3L787.5 424.4L788.0 423.4L788.5 423.4L789.0 423.2L789.5 421.8L790.0 421.5L790.5 421.9L791.0 422.3L791.5 422.8L792.0 423.2L792.5 423.4L793.0 423.9L793.5 424.1L794.0 420.6L794.5 420.6L795.0 412.4L795.5 412.4L796.0 421.4L796.5 422.2L797.0 422.9L797.5 422.6L798.0 422.6L798.5 423.9L799.0 424.1L799.5 424.4L800.0 424.4L800.5 424.5L801.0 422.9L801.5 422.9L802.0 424.0L802.5 422.4L803.0 422.6L803.5 423.0L804.0 421.3L804.5 421.3L805.0 424.3L805.5 424.5L806.0 424.1L806.5 420.7L807.0 420.7L807.5 412.6L808.0 412.6L808.5 412.6L809.0 421.3L809.5 422.7L810.0 423.2L810.5 423.0L811.0 423.0L811.5 424.1L812.0 424.2L812.5 424.3L813.0 421.0L813.5 421.0L814.0 413.4L814.5 413.4L815.0 413.4L815.5 420.1L816.0 420.6L816.5 421.4L817.0 422.1L817.5 422.1L818.0 422.8L818.5 422.8L819.0 423.5L819.5 423.6L820.0 423.2L820.5 423.2L821.0 424.0L821.5 423.1L822.0 421.1L822.5 421.7L823.0 422.7L823.5 421.4L824.0 421.4L824.5 424.3L825.0 424.2L825.5 424.6L826.0 420.9L826.5 420.9L827.0 413.3L827.5 413.3L828.0 421.7L828.5 421.9L829.0 422.9L829.5 421.6L830.0 421.6L830.5 423.8L831.0 424.1L831.5 424.2L832.0 424.4L832.5 424.3L833.0 423.2L833.5 423.2L834.0 424.1L834.5 422.9L835.0 422.5L835.5 423.0L836.0 421.1L836.5 421.1L837.0 424.0L837.5 424.6L838.0 424.4L838.5 424.1L839.0 424.4L839.5 422.4L840.0 422.4L840.5 422.8L841.0 421.2L841.5 421.2L842.0 422.3L842.5 422.8L843.0 423.0L843.5 424.4L844.0 424.4L844.5 424.4L845.0 424.5L845.5 424.5L846.0 420.9L846.5 420.9L847.0 422.0L847.5 421.8L848.0 422.0L848.5 422.5L849.0 421.6L849.5 421.6L850.0 424.2L850.5 424.3L851.0 424.3L851.5 424.3L852.0 420.6L852.5 412.3L853.0 412.3L853.5 412.3L854.0 420.4L854.5 420.7L855.0 420.9L855.5 421.3L856.0 421.7L856.5 422.3L857.0 422.6L857.5 422.8L858.0 423.3L858.5 423.2L859.0 423.2L859.5 423.8L860.0 423.3L860.5 422.5L861.0 422.9L861.5 423.3L862.0 421.6L862.5 421.6L863.0 424.3L863.5 424.2L864.0 424.3L864.5 421.2L865.0 421.0L865.5 414.2L866.0 414.2L866.5 414.2L867.0 422.6L867.5 422.5L868.0 423.2L868.5 422.4L869.0 422.4L869.5 424.2L870.0 424.2L870.5 424.5L871.0 424.5L871.5 421.2L872.0 421.2L872.5 424.0L873.0 422.7L873.5 422.2L874.0 422.9L874.5 423.2L875.0 421.3L875.5 421.3L876.0 424.2L876.5 424.3L877.0 424.3L877.5 420.8L878.0 420.8L878.5 413.1L879.0 413.1L879.5 421.8L880.0 422.3L880.5 422.5L881.0 420.9L881.5 420.9L882.0 423.9L882.5 424.0L883.0 424.3L883.5 424.1L884.0 420.7L884.5 420.7L885.0 412.8L885.5 412.8L886.0 421.8L886.5 422.3L887.0 422.7L887.5 421.5L888.0 421.5L888.5 423.7L889.0 424.1L889.5 424.3L890.0 424.4L890.5 424.5L891.0 423.1L891.5 423.1L892.0 422.4L892.5 419.8L893.0 421.1L893.5 421.5L894.0 421.9L894.5 422.6L895.0 424.3L895.5 424.3L896.0 424.6L896.5 424.2L897.0 421.0L897.5 421.0L898.0 413.6L898.5 413.6L899.0 421.7L899.5 422.8L900.0 422.7L900.5 422.8L901.0 422.8L901.5 424.0L902.0 424.1L902.5 424.3L903.0 424.4L903.5 424.6L904.0 423.4L904.5 423.4L905.0 422.8L905.5 421.4L906.0 421.4L906.5 422.1L907.0 421.8L907.5 421.8L908.0 423.1L908.5 423.4L909.0 423.5L909.5 420.6L910.0 420.6L910.5 412.5L911.0 412.5L911.5 412.5L912.0 421.7L912.5 422.0L913.0 422.7L913.5 422.1L914.0 422.1L914.5 423.8L915.0 424.1L915.5 424.3L916.0 420.5L916.5 420.5L917.0 412.3L917.5 412.3L918.0 412.3L918.5 419.4L919.0 420.5L919.5 421.3L920.0 421.4L920.5 421.8L921.0 422.2L921.5 422.6L922.0 423.2L922.5 423.4L923.0 420.9L923.5 420.9L924.0 423.9L924.5 423.3L925.0 422.5L925.5 422.8L926.0 423.4L926.5 421.7L927.0 421.7L927.5 424.6L928.0 424.2L928.5 424.2L929.0 420.8L929.5 420.8L930.0 413.1L930.5 413.1L931.0 421.5L931.5 422.1L932.0 422.8L932.5 423.1L933.0 423.2L933.5 423.7L934.0 424.0L934.5 424.2L935.0 424.4L935.5 424.2L936.0 423.3L936.5 423.3L937.0 424.6L937.5 423.8L938.0 422.7L938.5 422.4L939.0 421.6L939.5 421.6L940.0 423.0L940.5 423.1L941.0 423.5L941.5 423.6L942.0 423.9L942.5 421.2L943.0 421.2L943.5 422.8L944.0 421.9L944.5 422.1L945.0 422.7L945.5 421.3L946.0 421.3L946.5 423.7L947.0 423.7L947.5 424.2L948.0 424.5L948.5 424.4L949.0 421.0L949.5 421.0L950.0 423.0L950.5 422.0L951.0 422.4L951.5 422.6L952.0 422.5L952.5 422.5L953.0 423.4L953.5 423.8L954.0 423.9L954.5 424.2L955.0 421.0L955.5 413.5L956.0 413.5L956.5 413.5L957.0 420.9L957.5 421.3L958.0 421.4L958.5 421.7L959.0 421.7L959.5 422.6L960.0 423.2L960.5 423.3L961.0 423.7L961.5 422.9L962.0 422.9L962.5 424.0L963.0 422.7L963.5 420.5L964.0 420.7L964.5 421.5L965.0 422.4L965.5 422.5L966.0 424.3L966.5 424.6L967.0 424.6L967.5 424.4L968.0 422.1L968.5 422.1L969.0 423.2L969.5 421.7L970.0 422.1L970.5 424.6L971.0 424.2L971.5 423.4L972.0 423.4L972.5 424.4L973.0 424.1L973.5 424.2L974.0 424.6L974.5 422.3L975.0 422.3L975.5 424.2L976.0 422.8L976.5 422.5L977.0 422.7L977.5 423.4L978.0 422.6L978.5 422.6L979.0 424.1L979.5 424.2L980.0 424.4L980.5 421.2L981.0 421.2L981.5 414.1L982.0 414.1L982.5 421.2L983.0 422.4L983.5 423.1L984.0 420.9L984.5 420.9L985.0 424.0L985.5 424.1L986.0 424.4L986.5 424.3L987.0 420.5L987.5 420.5L988.0 412.2L988.5 412.2L989.0 421.6L989.5 421.6L990.0 422.3L990.5 422.2L991.0 422.2L991.5 423.7L992.0 424.1L992.5 424.2L993.0 424.3L993.5 424.4L994.0 423.4L994.5 423.4L995.0 423.2L995.5 421.8L996.0 421.5L996.5 421.9L997.0 422.3L997.5 422.8L998.0 423.2L998.5 423.4L999.0 423.9L999.5 424.1L1000.0 420.6L1000.5 420.6L1001.0 412.4L1001.5 412.4L1002.0 421.4L1002.5 422.2L1003.0 422.9L1003.5 422.6L1004.0 422.6L1004.5 423.9L1005.0 424.1L1005.5 424.4L1006.0 424.4L1006.5 424.5L1007.0 422.9L1007.5 422.9L1008.0 424.0L1008.5 422.4L1009.0 422.6L1009.5 423.0L1010.0 421.3L1010.5 421.3L1011.0 424.3L1011.5 424.5L1012.0 424.1L1012.5 420.7L1013.0 420.7L1013.5 412.6L1014.0 412.6L1014.5 412.6L1015.0 421.3L1015.5 422.7L1016.0 423.2L1016.5 423.0L1017.0 423.0L1017.5 424.1L1018.0 424.2L1018.5 424.3L1019.0 421.0L1019.5 421.0L1020.0 413.4L1020.5 413.4L1021.0 413.4L1021.5 420.1L1022.0 420.6L1022.5 421.4L1023.0 422.1L1023.5 422.1L1024.0 422.8L1024.5 422.8L1025.0 423.5L1025.5 423.6L1026.0 423.2L1026.5 423.2L1027.0 424.0L1027.5 423.1L1028.0 421.1L1028.5 421.7L1029.0 422.7L1029.5 421.4L1030.0 421.4L1030.5 424.3L1031.0 424.2L1031.5 424.6L1032.0 420.9L1032.5 420.9L1033.0 413.3L1033.5 413.3L1034.0 421.7L1034.5 421.9L1035.0 422.9L1035.5 421.6L1036.0 421.6L1036.5 423.8L1037.0 424.1L1037.5 424.2L1038.0 424.4L1038.5 424.3L1039.0 423.2L1039.5 423.2L1040.0 424.1L1040.5 422.9L1041.0 422.5L1041.5 423.0L1042.0 421.1L1042.5 421.1L1043.0 424.0L1043.5 424.6L1044.0 424.4L1044.5 424.1L1045.0 424.4L1045.5 422.4L1046.0 422.4L1046.5 422.8L1047.0 421.2L1047.5 421.2L1048.0 422.3L1048.5 422.8L1049.0 423.0L1049.5 424.4L1050.0 424.4L1050.5 424.4L1051.0 424.5L1051.5 424.5L1052.0 420.9L1052.5 420.9L1053.0 422.0L1053.5 421.8L1054.0 422.0L1054.5 422.5L1055.0 421.6L1055.5 421.6L1056.0 424.2L1056.5 424.3L1057.0 424.3L1057.5 424.3L1058.0 420.6L1058.5 412.3L1059.0 412.3L1059.5 412.3L1060.0 420.4L1060.5 420.7L1061.0 420.9L1061.5 421.3L1062.0 421.7L1062.5 422.3L1063.0 422.6L1063.5 422.8L1064.0 423.3L1064.5 423.2L1065.0 423.2L1065.5 423.8L1066.0 423.3L1066.5 422.5L1067.0 422.9L1067.5 423.3L1068.0 421.6L1068.5 421.6L1069.0 424.3L1069.5 424.2L1070.0 424.3L1070.5 421.2L1071.0 421.0L1071.5 414.2L1072.0 414.2L1072.5 414.2L1073.0 422.6L1073.5 422.5L1074.0 423.2L1074.5 422.4L1075.0 422.4L1075.5 424.2L1076.0 424.2L1076.5 424.5L1077.0 424.5L1077.5 421.2L1078.0 421.2L1078.5 424.0L1079.0 422.7L1079.5 422.2L1080.0 422.9L1080.5 423.2L1081.0 421.3L1081.5 421.3L1082.0 424.2L1082.5 424.3L1083.0 424.3L1083.5 420.8L1084.0 420.8L1084.5 413.1L1085.0 413.1L1085.5 421.8L1086.0 422.3L1086.5 422.5L1087.0 420.9L1087.5 420.9L1088.0 423.9L1088.5 424.0L1089.0 424.3L1089.5 424.1L1090.0 420.7L1090.5 420.7L1091.0 412.8L1091.5 412.8L1092.0 421.8L1092.5 422.3L1093.0 422.7L1093.5 421.5L1094.0 421.5L1094.5 423.7L1095.0 424.1L1095.5 424.3L1096.0 424.4L1096.5 424.5L1097.0 423.1L1097.5 423.1L1098.0 422.4L1098.5 419.8L1099.0 421.1L1099.5 421.5L1100.0 421.9L1100.5 422.6L1101.0 424.3L1101.5 424.3L1102.0 424.6L1102.5 424.2L1103.0 421.0L1103.5 421.0L1104.0 413.6L1104.5 413.6L1105.0 421.7L1105.5 422.8L1106.0 422.7L1106.5 422.8L1107.0 422.8L1107.5 424.0L1108.0 424.1L1108.5 424.3L1109.0 424.4L1109.5 424.6L1110.0 423.4L1110.5 423.4L1111.0 422.8L1111.5 421.4L1112.0 421.4L1112.5 422.1L1113.0 421.8L1113.5 421.8L1114.0 423.1L1114.5 423.4L1115.0 423.5L1115.5 420.6L1116.0 420.6L1116.5 412.5L1117.0 412.5L1117.5 412.5L1118.0 421.7L1118.5 422.0L1119.0 422.7L1119.5 422.1L1120.0 422.1L1120.5 423.8L1121.0 424.1L1121.5 424.3L1122.0 420.5L1122.5 420.5L1123.0 412.3L1123.5 412.3L1124.0 412.3L1124.5 419.4L1125.0 420.5L1125.5 421.3L1126.0 421.4L1126.5 421.8L1127.0 422.2L1127.5 422.6L1128.0 423.2L1128.5 423.4L1129.0 420.9L1129.5 420.9L1130.0 423.9L1130.5 423.3L1131.0 422.5L1131.5 422.8L1132.0 423.4L1132.5 421.7L1133.0 421.7L1133.5 424.6L1134.0 424.2L1134.5 424.2L1135.0 420.8L1135.5 420.8L1136.0 413.1L1136.5 413.1L1137.0 421.5L1137.5 422.1L1138.0 422.8L1138.5 423.1L1139.0 423.2L1139.5 423.7L1140.0 424.0L1140.5 424.2L1141.0 424.4L1141.5 424.2L1142.0 423.3L1142.5 423.3L1143.0 424.6L1143.5 423.8L1144.0 422.7L1144.5 422.4L1145.0 421.6L1145.5 421.6L1146.0 423.0L1146.5 423.1L1147.0 423.5L1147.5 423.6L1148.0 423.9L1148.5 421.2L1149.0 421.2L1149.5 422.8L1150.0 421.9L1150.5 422.1L1151.0 422.7L1151.5 421.3L1152.0 421.3L1152.5 423.7L1153.0 423.7L1153.5 424.2L1154.0 424.5L1154.5 424.4L1155.0 421.0L1155.5 421.0L1156.0 423.0L1156.5 422.0L1157.0 422.4L1157.5 422.6L1158.0 422.5L1158.5 422.5L1159.0 423.4L1159.5 423.8L1160.0 423.9L1160.5 424.2L1161.0 421.0L1161.5 413.5L1161.5 425.0L1161.5 435.8L1161.0 429.3L1160.5 426.2L1160.0 426.4L1159.5 426.7L1159.0 427.1L1158.5 427.7L1158.0 428.1L1157.5 428.2L1157.0 427.8L1156.5 428.9L1156.0 427.3L1155.5 429.3L1155.0 428.7L1154.5 426.3L1154.0 426.3L1153.5 426.2L1153.0 426.9L1152.5 426.9L1152.0 429.3L1151.5 428.7L1151.0 428.3L1150.5 428.2L1150.0 428.3L1149.5 427.9L1149.0 429.4L1148.5 429.1L1148.0 426.7L1147.5 427.0L1147.0 427.1L1146.5 427.4L1146.0 427.5L1145.5 428.8L1145.0 429.4L1144.5 428.1L1144.0 427.8L1143.5 426.6L1143.0 426.0L1142.5 427.4L1142.0 427.2L1141.5 426.2L1141.0 426.1L1140.5 426.3L1140.0 426.5L1139.5 426.8L1139.0 427.5L1138.5 427.3L1138.0 427.8L1137.5 428.4L1137.0 429.1L1136.5 438.4L1136.0 438.0L1135.5 429.9L1135.0 429.6L1134.5 426.4L1134.0 426.2L1133.5 425.9L1133.0 428.6L1132.5 428.8L1132.0 427.3L1131.5 427.8L1131.0 427.9L1130.5 427.0L1130.0 426.5L1129.5 429.6L1129.0 429.9L1128.5 427.1L1128.0 427.3L1127.5 428.0L1127.0 428.5L1126.5 428.8L1126.0 429.2L1125.5 428.9L1125.0 430.4L1124.5 431.4L1124.0 437.0L1123.5 437.9L1123.0 438.3L1122.5 429.6L1122.0 430.3L1121.5 426.2L1121.0 426.3L1120.5 426.8L1120.0 428.0L1119.5 429.0L1119.0 427.7L1118.5 428.8L1118.0 428.4L1117.5 438.2L1117.0 439.2L1116.5 438.5L1116.0 430.0L1115.5 430.0L1115.0 427.0L1114.5 426.8L1114.0 427.1L1113.5 428.2L1113.0 428.4L1112.5 428.8L1112.0 429.8L1111.5 428.4L1111.0 427.6L1110.5 427.2L1110.0 426.8L1109.5 426.0L1109.0 426.4L1108.5 426.2L1108.0 426.3L1107.5 426.4L1107.0 427.4L1106.5 427.5L1106.0 428.1L1105.5 427.5L1105.0 428.5L1104.5 437.3L1104.0 435.8L1103.5 429.6L1103.0 429.3L1102.5 426.2L1102.0 426.4L1101.5 426.3L1101.0 426.3L1100.5 427.5L1100.0 429.2L1099.5 428.3L1099.0 429.9L1098.5 430.3L1098.0 428.6L1097.5 427.5L1097.0 427.3L1096.5 426.4L1096.0 426.4L1095.5 426.3L1095.0 426.4L1094.5 426.8L1094.0 428.7L1093.5 429.3L1093.0 427.7L1092.5 427.9L1092.0 428.5L1091.5 438.4L1091.0 436.9L1090.5 429.7L1090.0 429.4L1089.5 426.2L1089.0 426.3L1088.5 426.4L1088.0 426.5L1087.5 429.4L1087.0 430.1L1086.5 428.2L1086.0 428.5L1085.5 429.0L1085.0 437.5L1084.5 437.5L1084.0 429.8L1083.5 430.1L1083.0 426.2L1082.5 426.4L1082.0 426.0L1081.5 428.9L1081.0 429.0L1080.5 427.4L1080.0 427.7L1079.5 428.0L1079.0 427.5L1078.5 426.7L1078.0 429.4L1077.5 429.1L1077.0 425.9L1076.5 426.2L1076.0 426.4L1075.5 426.4L1075.0 428.3L1074.5 428.6L1074.0 427.3L1073.5 428.1L1073.0 427.9L1072.5 436.4L1072.0 437.5L1071.5 435.0L1071.0 429.3L1070.5 429.3L1070.0 426.4L1069.5 426.1L1069.0 426.0L1068.5 428.2L1068.0 428.5L1067.5 426.9L1067.0 427.5L1066.5 427.6L1066.0 427.1L1065.5 426.6L1065.0 427.6L1064.5 427.3L1064.0 427.1L1063.5 427.8L1063.0 428.1L1062.5 428.0L1062.0 428.5L1061.5 429.5L1061.0 429.5L1060.5 430.1L1060.0 429.8L1059.5 438.3L1059.0 439.5L1058.5 437.9L1058.0 429.5L1057.5 426.0L1057.0 426.0L1056.5 426.1L1056.0 426.0L1055.5 428.4L1055.0 428.5L1054.5 427.9L1054.0 428.9L1053.5 428.8L1053.0 428.7L1052.5 430.1L1052.0 430.1L1051.5 426.2L1051.0 425.9L1050.5 426.1L1050.0 426.3L1049.5 426.1L1049.0 427.6L1048.5 427.6L1048.0 428.5L1047.5 429.0L1047.0 428.9L1046.5 427.7L1046.0 428.0L1045.5 428.5L1045.0 426.4L1044.5 426.1L1044.0 426.2L1043.5 426.1L1043.0 426.4L1042.5 429.9L1042.0 429.5L1041.5 427.7L1041.0 428.3L1040.5 427.6L1040.0 426.2L1039.5 427.0L1039.0 427.0L1038.5 426.1L1038.0 426.3L1037.5 426.2L1037.0 426.4L1036.5 426.7L1036.0 428.7L1035.5 428.5L1035.0 427.6L1034.5 428.9L1034.0 428.4L1033.5 438.3L1033.0 438.3L1032.5 430.1L1032.0 429.5L1031.5 426.4L1031.0 426.0L1030.5 426.4L1030.0 429.6L1029.5 429.3L1029.0 427.5L1028.5 429.1L1028.0 430.1L1027.5 427.2L1027.0 426.4L1026.5 427.6L1026.0 427.3L1025.5 426.9L1025.0 427.1L1024.5 427.6L1024.0 427.9L1023.5 428.2L1023.0 428.5L1022.5 429.0L1022.0 429.9L1021.5 431.0L1021.0 437.1L1020.5 435.7L1020.0 438.2L1019.5 429.7L1019.0 429.7L1018.5 426.3L1018.0 426.2L1017.5 426.5L1017.0 427.6L1016.5 427.4L1016.0 427.5L1015.5 427.6L1015.0 429.6L1014.5 436.6L1014.0 437.1L1013.5 437.7L1013.0 430.1L1012.5 429.6L1012.0 426.1L1011.5 426.3L1011.0 426.0L1010.5 429.1L1010.0 429.3L1009.5 427.2L1009.0 428.1L1008.5 428.1L1008.0 426.7L1007.5 427.3L1007.0 428.0L1006.5 426.3L1006.0 426.1L1005.5 426.1L1005.0 426.4L1004.5 426.7L1004.0 428.2L1003.5 428.1L1003.0 427.8L1002.5 428.5L1002.0 429.2L1001.5 437.2L1001.0 438.5L1000.5 430.4L1000.0 430.0L999.5 426.0L999.0 426.7L998.5 427.0L998.0 427.6L997.5 427.9L997.0 428.1L996.5 428.6L996.0 428.8L995.5 428.9L995.0 427.5L994.5 427.0L994.0 427.3L993.5 426.0L993.0 426.0L992.5 426.3L992.0 426.5L991.5 426.7L991.0 428.2L990.5 428.3L990.0 428.4L989.5 428.9L989.0 429.0L988.5 439.0L988.0 437.8L987.5 430.5L987.0 430.2L986.5 426.1L986.0 426.1L985.5 426.4L985.0 426.5L984.5 429.1L984.0 430.2L983.5 427.3L983.0 427.9L982.5 429.0L982.0 435.7L981.5 437.7L981.0 429.5L980.5 429.1L980.0 426.3L979.5 426.0L979.0 426.0L978.5 427.7L978.0 427.7L977.5 427.2L977.0 428.0L976.5 427.5L976.0 427.6L975.5 426.4L975.0 428.7L974.5 428.8L974.0 426.4L973.5 426.0L973.0 426.1L972.5 426.4L972.0 426.9L971.5 427.3L971.0 426.3L970.5 426.1L970.0 428.0L969.5 428.2L969.0 427.3L968.5 428.3L968.0 428.1L967.5 425.9L967.0 426.4L966.5 426.2L966.0 426.2L965.5 427.5L965.0 427.8L964.5 428.5L964.0 429.4L963.5 430.3L963.0 427.6L962.5 426.5L962.0 427.9L961.5 427.8L961.0 426.8L960.5 427.2L960.0 427.4L959.5 428.1L959.0 428.7L958.5 428.9L958.0 429.3L957.5 429.3L957.0 429.4L956.5 437.1L956.0 437.9L955.5 435.8L955.0 429.3L954.5 426.2L954.0 426.4L953.5 426.7L953.0 427.1L952.5 427.7L952.0 428.1L951.5 428.2L951.0 427.8L950.5 428.9L950.0 427.3L949.5 429.3L949.0 428.7L948.5 426.3L948.0 426.3L947.5 426.2L947.0 426.9L946.5 426.9L946.0 429.3L945.5 428.7L945.0 428.3L944.5 428.2L944.0 428.3L943.5 427.9L943.0 429.4L942.5 429.1L942.0 426.7L941.5 427.0L941.0 427.1L940.5 427.4L940.0 427.5L939.5 428.8L939.0 429.4L938.5 428.1L938.0 427.8L937.5 426.6L937.0 426.0L936.5 427.4L936.0 427.2L935.5 426.2L935.0 426.1L934.5 426.3L934.0 426.5L933.5 426.8L933.0 427.5L932.5 427.3L932.0 427.8L931.5 428.4L931.0 429.1L930.5 438.4L930.0 438.0L929.5 429.9L929.0 429.6L928.5 426.4L928.0 426.2L927.5 425.9L927.0 428.6L926.5 428.8L926.0 427.3L925.5 427.8L925.0 427.9L924.5 427.0L924.0 426.5L923.5 429.6L923.0 429.9L922.5 427.1L922.0 427.3L921.5 428.0L921.0 428.5L920.5 428.8L920.0 429.2L919.5 428.9L919.0 430.4L918.5 431.4L918.0 437.0L917.5 437.9L917.0 438.3L916.5 429.6L916.0 430.3L915.5 426.2L915.0 426.3L914.5 426.8L914.0 428.0L913.5 429.0L913.0 427.7L912.5 428.8L912.0 428.4L911.5 438.2L911.0 439.2L910.5 438.5L910.0 430.0L909.5 430.0L909.0 427.0L908.5 426.8L908.0 427.1L907.5 428.2L907.0 428.4L906.5 428.8L906.0 429.8L905.5 428.4L905.0 427.6L904.5 427.2L904.0 426.8L903.5 426.0L903.0 426.4L902.5 426.2L902.0 426.3L901.5 426.4L901.0 427.4L900.5 427.5L900.0 428.1L899.5 427.5L899.0 428.5L898.5 437.3L898.0 435.8L897.5 429.6L897.0 429.3L896.5 426.2L896.0 426.4L895.5 426.3L895.0 426.3L894.5 427.5L894.0 429.2L893.5 428.3L893.0 429.9L892.5 430.3L892.0 428.6L891.5 427.5L891.0 427.3L890.5 426.4L890.0 426.4L889.5 426.3L889.0 426.4L888.5 426.8L888.0 428.7L887.5 429.3L887.0 427.7L886.5 427.9L886.0 428.5L885.5 438.4L885.0 436.9L884.5 429.7L884.0 429.4L883.5 426.2L883.0 426.3L882.5 426.4L882.0 426.5L881.5 429.4L881.0 430.1L880.5 428.2L880.0 428.5L879.5 429.0L879.0 437.5L878.5 437.5L878.0 429.8L877.5 430.1L877.0 426.2L876.5 426.4L876.0 426.0L875.5 428.9L875.0 429.0L874.5 427.4L874.0 427.7L873.5 428.0L873.0 427.5L872.5 426.7L872.0 429.4L871.5 429.1L871.0 425.9L870.5 426.2L870.0 426.4L869.5 426.4L869.0 428.3L868.5 428.6L868.0 427.3L867.5 428.1L867.0 427.9L866.5 436.4L866.0 437.5L865.5 435.0L865.0 429.3L864.5 429.3L864.0 426.4L863.5 426.1L863.0 426.0L862.5 428.2L862.0 428.5L861.5 426.9L861.0 427.5L860.5 427.6L860.0 427.1L859.5 426.6L859.0 427.6L858.5 427.3L858.0 427.1L857.5 427.8L857.0 428.1L856.5 428.0L856.0 428.5L855.5 429.5L855.0 429.5L854.5 430.1L854.0 429.8L853.5 438.3L853.0 439.5L852.5 437.9L852.0 429.5L851.5 426.0L851.0 426.0L850.5 426.1L850.0 426.0L849.5 428.4L849.0 428.5L848.5 427.9L848.0 428.9L847.5 428.8L847.0 428.7L846.5 430.1L846.0 430.1L845.5 426.2L845.0 425.9L844.5 426.1L844.0 426.3L843.5 426.1L843.0 427.6L842.5 427.6L842.0 428.5L841.5 429.0L841.0 428.9L840.5 427.7L840.0 428.0L839.5 428.5L839.0 426.4L838.5 426.1L838.0 426.2L837.5 426.1L837.0 426.4L836.5 429.9L836.0 429.5L835.5 427.7L835.0 428.3L834.5 427.6L834.0 426.2L833.5 427.0L833.0 427.0L832.5 426.1L832.0 426.3L831.5 426.2L831.0 426.4L830.5 426.7L830.0 428.7L829.5 428.5L829.0 427.6L828.5 428.9L828.0 428.4L827.5 438.3L827.0 438.3L826.5 430.1L826.0 429.5L825.5 426.4L825.0 426.0L824.5 426.4L824.0 429.6L823.5 429.3L823.0 427.5L822.5 429.1L822.0 430.1L821.5 427.2L821.0 426.4L820.5 427.6L820.0 427.3L819.5 426.9L819.0 427.1L818.5 427.6L818.0 427.9L817.5 428.2L817.0 428.5L816.5 429.0L816.0 429.9L815.5 431.0L815.0 437.1L814.5 435.7L814.0 438.2L813.5 429.7L813.0 429.7L812.5 426.3L812.0 426.2L811.5 426.5L811.0 427.6L810.5 427.4L810.0 427.5L809.5 427.6L809.0 429.6L808.5 436.6L808.0 437.1L807.5 437.7L807.0 430.1L806.5 429.6L806.0 426.1L805.5 426.3L805.0 426.0L804.5 429.1L804.0 429.3L803.5 427.2L803.0 428.1L802.5 428.1L802.0 426.7L801.5 427.3L801.0 428.0L800.5 426.3L800.0 426.1L799.5 426.1L799.0 426.4L798.5 426.7L798.0 428.2L797.5 428.1L797.0 427.8L796.5 428.5L796.0 429.2L795.5 437.2L795.0 438.5L794.5 430.4L794.0 430.0L793.5 426.0L793.0 426.7L792.5 427.0L792.0 427.6L791.5 427.9L791.0 428.1L790.5 428.6L790.0 428.8L789.5 428.9L789.0 427.5L788.5 427.0L788.0 427.3L787.5 426.0L787.0 426.0L786.5 426.3L786.0 426.5L785.5 426.7L785.0 428.2L784.5 428.3L784.0 428.4L783.5 428.9L783.0 429.0L782.5 439.0L782.0 437.8L781.5 430.5L781.0 430.2L780.5 426.1L780.0 426.1L779.5 426.4L779.0 426.5L778.5 429.1L778.0 430.2L777.5 427.3L777.0 427.9L776.5 429.0L776.0 435.7L775.5 437.7L775.0 429.5L774.5 429.1L774.0 426.3L773.5 426.0L773.0 426.0L772.5 427.7L772.0 427.7L771.5 427.2L771.0 428.0L770.5 427.5L770.0 427.6L769.5 426.4L769.0 428.7L768.5 428.8L768.0 426.4L767.5 426.0L767.0 426.1L766.5 426.4L766.0 426.9L765.5 427.3L765.0 426.3L764.5 426.1L764.0 428.0L763.5 428.2L763.0 427.3L762.5 428.3L762.0 428.1L761.5 425.9L761.0 426.4L760.5 426.2L760.0 426.2L759.5 427.5L759.0 427.8L758.5 428.5L758.0 429.4L757.5 430.3L757.0 427.6L756.5 426.5L756.0 427.9L755.5 427.8L755.0 426.8L754.5 427.2L754.0 427.4L753.5 428.1L753.0 428.7L752.5 428.9L752.0 429.3L751.5 429.3L751.0 429.4L750.5 437.1Z" fill="#a9c6ea"/></svg>
<svg style="left:0;top:0" width="2185" height="793" viewBox="0 0 2185 793" opacity="0.42"><path d="M1161.5 425.0L1161.5 413.5L1162.0 413.5L1162.5 413.5L1163.0 420.9L1163.5 421.3L1164.0 421.4L1164.5 421.7L1165.0 421.7L1165.5 422.6L1166.0 423.2L1166.5 423.3L1167.0 423.7L1167.5 422.9L1168.0 422.9L1168.5 424.0L1169.0 422.7L1169.5 420.5L1170.0 420.7L1170.5 421.5L1171.0 422.4L1171.5 422.5L1172.0 424.3L1172.5 424.6L1173.0 424.6L1173.5 424.4L1174.0 422.1L1174.5 422.1L1175.0 423.2L1175.5 421.7L1176.0 422.1L1176.5 424.6L1177.0 424.2L1177.5 423.4L1178.0 423.4L1178.5 424.4L1179.0 424.1L1179.5 424.2L1180.0 424.6L1180.5 422.3L1181.0 422.3L1181.5 424.2L1182.0 422.8L1182.5 422.5L1183.0 422.7L1183.5 423.4L1184.0 422.6L1184.5 422.6L1185.0 424.1L1185.5 424.2L1186.0 424.4L1186.5 421.2L1187.0 421.2L1187.5 414.1L1188.0 414.1L1188.5 421.2L1189.0 422.4L1189.5 423.1L1190.0 420.9L1190.5 420.9L1191.0 424.0L1191.5 424.1L1192.0 424.4L1192.5 424.3L1193.0 420.5L1193.5 420.5L1194.0 412.2L1194.5 412.2L1195.0 421.6L1195.5 421.6L1196.0 422.3L1196.5 422.2L1197.0 422.2L1197.5 423.7L1198.0 424.1L1198.5 424.2L1199.0 424.3L1199.5 424.4L1200.0 423.4L1200.5 423.4L1201.0 423.2L1201.5 421.8L1202.0 421.5L1202.5 421.9L1203.0 422.3L1203.5 422.8L1204.0 423.2L1204.5 423.4L1205.0 423.9L1205.5 424.1L1206.0 420.6L1206.5 420.6L1207.0 412.4L1207.5 412.4L1208.0 421.4L1208.5 422.2L1209.0 422.9L1209.5 422.6L1210.0 422.6L1210.5 423.9L1211.0 424.1L1211.5 424.4L1212.0 424.4L1212.5 424.5L1213.0 422.9L1213.5 422.9L1214.0 424.0L1214.5 422.4L1215.0 422.6L1215.5 423.0L1216.0 421.3L1216.5 421.3L1217.0 424.3L1217.5 424.5L1218.0 424.1L1218.5 420.7L1219.0 420.7L1219.5 412.6L1220.0 412.6L1220.5 412.6L1221.0 421.3L1221.5 422.7L1222.0 423.2L1222.5 423.0L1223.0 423.0L1223.5 424.1L1224.0 424.2L1224.5 424.3L1225.0 421.0L1225.5 421.0L1226.0 413.4L1226.5 413.4L1227.0 413.4L1227.5 420.1L1228.0 420.6L1228.5 421.4L1229.0 422.1L1229.5 422.1L1230.0 422.8L1230.5 422.8L1231.0 423.5L1231.5 423.6L1232.0 423.2L1232.5 423.2L1233.0 424.0L1233.5 423.1L1234.0 421.1L1234.5 421.7L1235.0 422.7L1235.5 421.4L1236.0 421.4L1236.5 424.3L1237.0 424.2L1237.5 424.6L1238.0 420.9L1238.5 420.9L1239.0 413.3L1239.5 413.3L1240.0 421.7L1240.5 421.9L1241.0 422.9L1241.5 421.6L1242.0 421.6L1242.5 423.8L1243.0 424.1L1243.5 424.2L1244.0 424.4L1244.5 424.3L1245.0 423.2L1245.5 423.2L1246.0 424.1L1246.5 422.9L1247.0 422.5L1247.5 423.0L1248.0 421.1L1248.5 421.1L1249.0 424.0L1249.5 424.6L1250.0 424.4L1250.5 424.1L1251.0 424.4L1251.5 422.4L1252.0 422.4L1252.5 422.8L1253.0 421.2L1253.5 421.2L1254.0 422.3L1254.5 422.8L1255.0 423.0L1255.5 424.4L1256.0 424.4L1256.5 424.4L1257.0 424.5L1257.5 424.5L1258.0 420.9L1258.5 420.9L1259.0 422.0L1259.5 421.8L1260.0 422.0L1260.5 422.5L1261.0 421.6L1261.5 421.6L1262.0 424.2L1262.5 424.3L1263.0 424.3L1263.5 424.3L1264.0 420.6L1264.5 412.3L1265.0 412.3L1265.5 412.3L1266.0 420.4L1266.5 420.7L1267.0 420.9L1267.5 421.3L1268.0 421.7L1268.5 422.3L1269.0 422.6L1269.5 422.8L1270.0 423.3L1270.5 423.2L1271.0 423.2L1271.5 423.8L1272.0 423.3L1272.5 422.5L1273.0 422.9L1273.5 423.3L1274.0 421.6L1274.5 421.6L1275.0 424.3L1275.5 424.2L1276.0 424.3L1276.5 421.2L1277.0 421.0L1277.5 414.2L1278.0 414.2L1278.5 414.2L1279.0 422.6L1279.5 422.5L1280.0 423.2L1280.5 422.4L1281.0 422.4L1281.5 424.2L1282.0 424.2L1282.5 424.5L1283.0 424.5L1283.5 421.2L1284.0 421.2L1284.5 424.0L1285.0 422.7L1285.5 422.2L1286.0 422.9L1286.5 423.2L1287.0 421.3L1287.5 421.3L1288.0 424.2L1288.5 424.3L1289.0 424.3L1289.5 420.8L1290.0 420.8L1290.5 413.1L1291.0 413.1L1291.5 421.8L1292.0 422.3L1292.5 422.5L1293.0 420.9L1293.5 420.9L1294.0 423.9L1294.5 424.0L1295.0 424.3L1295.5 424.1L1296.0 420.7L1296.5 420.7L1297.0 412.8L1297.5 412.8L1298.0 421.8L1298.5 422.3L1299.0 422.7L1299.5 421.5L1300.0 421.5L1300.5 423.7L1301.0 424.1L1301.5 424.3L1302.0 424.4L1302.5 424.5L1303.0 423.1L1303.5 423.1L1304.0 422.4L1304.5 419.8L1305.0 421.1L1305.5 421.5L1306.0 421.9L1306.5 422.6L1307.0 424.3L1307.5 424.3L1308.0 424.6L1308.5 424.2L1309.0 421.0L1309.5 421.0L1310.0 413.6L1310.5 413.6L1311.0 421.7L1311.5 422.8L1312.0 422.7L1312.5 422.8L1313.0 422.8L1313.5 424.0L1314.0 424.1L1314.5 424.3L1315.0 424.4L1315.5 424.6L1316.0 423.4L1316.5 423.4L1317.0 422.8L1317.5 421.4L1318.0 421.4L1318.5 422.1L1319.0 421.8L1319.5 421.8L1320.0 423.1L1320.5 423.4L1321.0 423.5L1321.5 420.6L1322.0 420.6L1322.5 412.5L1323.0 412.5L1323.5 412.5L1324.0 421.7L1324.5 422.0L1325.0 422.7L1325.5 422.1L1326.0 422.1L1326.5 423.8L1327.0 424.1L1327.5 424.3L1328.0 420.5L1328.5 420.5L1329.0 412.3L1329.5 412.3L1330.0 412.3L1330.5 419.4L1331.0 420.5L1331.5 421.3L1332.0 421.4L1332.5 421.8L1333.0 422.2L1333.5 422.6L1334.0 423.2L1334.5 423.4L1335.0 420.9L1335.5 420.9L1336.0 423.9L1336.5 423.3L1337.0 422.5L1337.5 422.8L1338.0 423.4L1338.5 421.7L1339.0 421.7L1339.5 424.6L1340.0 424.2L1340.5 424.2L1341.0 420.8L1341.5 420.8L1342.0 413.1L1342.5 413.1L1343.0 421.5L1343.5 422.1L1344.0 422.8L1344.5 423.1L1345.0 423.2L1345.5 423.7L1346.0 424.0L1346.5 424.2L1347.0 424.4L1347.5 424.2L1348.0 423.3L1348.5 423.3L1349.0 424.6L1349.5 423.8L1350.0 422.7L1350.5 422.4L1351.0 421.6L1351.5 421.6L1352.0 423.0L1352.5 423.1L1353.0 423.5L1353.5 423.6L1354.0 423.9L1354.5 421.2L1355.0 421.2L1355.5 422.8L1356.0 421.9L1356.5 422.1L1357.0 422.7L1357.5 421.3L1358.0 421.3L1358.5 423.7L1359.0 423.7L1359.5 424.2L1360.0 424.5L1360.5 424.4L1361.0 421.0L1361.5 421.0L1362.0 423.0L1362.5 422.0L1363.0 422.4L1363.5 422.6L1364.0 422.5L1364.5 422.5L1365.0 423.4L1365.5 423.8L1366.0 423.9L1366.5 424.2L1367.0 421.0L1367.5 413.5L1368.0 413.5L1368.5 413.5L1369.0 420.9L1369.5 421.3L1370.0 421.4L1370.5 421.7L1371.0 421.7L1371.5 422.6L1372.0 423.2L1372.5 423.3L1373.0 423.7L1373.5 422.9L1374.0 422.9L1374.5 424.0L1375.0 422.7L1375.5 420.5L1376.0 420.7L1376.5 421.5L1377.0 422.4L1377.5 422.5L1378.0 424.3L1378.5 424.6L1379.0 424.6L1379.5 424.4L1380.0 422.1L1380.5 422.1L1381.0 423.2L1381.5 421.7L1382.0 422.1L1382.5 424.6L1383.0 424.2L1383.5 423.4L1384.0 423.4L1384.5 424.4L1385.0 424.1L1385.5 424.2L1386.0 424.6L1386.5 422.3L1387.0 422.3L1387.5 424.2L1388.0 422.8L1388.5 422.5L1389.0 422.7L1389.5 423.4L1390.0 422.6L1390.5 422.6L1391.0 424.1L1391.5 424.2L1392.0 424.4L1392.5 421.2L1393.0 421.2L1393.5 414.1L1394.0 414.1L1394.5 421.2L1395.0 422.4L1395.5 423.1L1396.0 420.9L1396.5 420.9L1397.0 424.0L1397.5 424.1L1398.0 424.4L1398.5 424.3L1399.0 420.5L1399.5 420.5L1400.0 412.2L1400.5 412.2L1401.0 421.6L1401.5 421.6L1402.0 422.3L1402.5 422.2L1403.0 422.2L1403.5 423.7L1404.0 424.1L1404.5 424.2L1405.0 424.3L1405.5 424.4L1406.0 423.4L1406.5 423.4L1407.0 423.2L1407.5 421.8L1408.0 421.5L1408.5 421.9L1409.0 422.3L1409.5 422.8L1410.0 423.2L1410.5 423.4L1411.0 423.9L1411.5 424.1L1412.0 420.6L1412.5 420.6L1413.0 412.4L1413.5 412.4L1414.0 421.4L1414.5 422.2L1415.0 422.9L1415.5 422.6L1416.0 422.6L1416.5 423.9L1417.0 424.1L1417.5 424.4L1418.0 424.4L1418.5 424.5L1419.0 422.9L1419.5 422.9L1420.0 424.0L1420.5 422.4L1421.0 422.6L1421.5 423.0L1422.0 421.3L1422.5 421.3L1423.0 424.3L1423.5 424.5L1424.0 424.1L1424.5 420.7L1425.0 420.7L1425.5 412.6L1426.0 412.6L1426.5 412.6L1427.0 421.3L1427.5 422.7L1428.0 423.2L1428.5 423.0L1429.0 423.0L1429.5 424.1L1430.0 424.2L1430.5 424.3L1431.0 421.0L1431.5 421.0L1432.0 413.4L1432.5 413.4L1433.0 413.4L1433.5 420.1L1434.0 420.6L1434.5 421.4L1435.0 422.1L1435.5 422.1L1436.0 422.8L1436.5 422.8L1437.0 423.5L1437.5 423.6L1438.0 423.2L1438.5 423.2L1439.0 424.0L1439.5 423.1L1440.0 421.1L1440.5 421.7L1441.0 422.7L1441.5 421.4L1442.0 421.4L1442.5 424.3L1443.0 424.2L1443.5 424.6L1444.0 420.9L1444.5 420.9L1445.0 413.3L1445.5 413.3L1446.0 421.7L1446.5 421.9L1447.0 422.9L1447.5 421.6L1448.0 421.6L1448.5 423.8L1449.0 424.1L1449.5 424.2L1450.0 424.4L1450.5 424.3L1451.0 423.2L1451.5 423.2L1452.0 424.1L1452.5 422.9L1453.0 422.5L1453.5 423.0L1454.0 421.1L1454.5 421.1L1455.0 424.0L1455.5 424.6L1456.0 424.4L1456.5 424.1L1457.0 424.4L1457.5 422.4L1458.0 422.4L1458.5 422.8L1459.0 421.2L1459.5 421.2L1460.0 422.3L1460.5 422.8L1461.0 423.0L1461.5 424.4L1462.0 424.4L1462.5 424.4L1463.0 424.5L1463.5 424.5L1464.0 420.9L1464.5 420.9L1465.0 422.0L1465.5 421.8L1466.0 422.0L1466.5 422.5L1467.0 421.6L1467.5 421.6L1468.0 424.2L1468.5 424.3L1469.0 424.3L1469.5 424.3L1470.0 420.6L1470.5 412.3L1471.0 412.3L1471.5 412.3L1472.0 420.4L1472.5 420.7L1473.0 420.9L1473.5 421.3L1474.0 421.7L1474.5 422.3L1475.0 422.6L1475.5 422.8L1476.0 423.3L1476.5 423.2L1477.0 423.2L1477.5 423.8L1478.0 423.3L1478.5 422.5L1479.0 422.9L1479.5 423.3L1480.0 421.6L1480.5 421.6L1481.0 424.3L1481.5 424.2L1482.0 424.3L1482.5 421.2L1483.0 421.0L1483.5 414.2L1484.0 414.2L1484.5 414.2L1485.0 422.6L1485.5 422.5L1486.0 423.2L1486.5 422.4L1487.0 422.4L1487.5 424.2L1488.0 424.2L1488.5 424.5L1489.0 424.5L1489.5 421.2L1490.0 421.2L1490.5 424.0L1491.0 422.7L1491.5 422.2L1492.0 422.9L1492.5 423.2L1493.0 421.3L1493.5 421.3L1494.0 424.2L1494.5 424.3L1495.0 424.3L1495.5 420.8L1496.0 420.8L1496.5 413.1L1497.0 413.1L1497.5 421.8L1498.0 422.3L1498.5 422.5L1499.0 420.9L1499.5 420.9L1500.0 423.9L1500.5 424.0L1501.0 424.3L1501.5 424.1L1502.0 420.7L1502.5 420.7L1503.0 412.8L1503.5 412.8L1504.0 421.8L1504.5 422.3L1505.0 422.7L1505.5 421.5L1506.0 421.5L1506.5 423.7L1507.0 424.1L1507.5 424.3L1508.0 424.4L1508.5 424.5L1509.0 423.1L1509.5 423.1L1510.0 422.4L1510.5 419.8L1511.0 421.1L1511.5 421.5L1512.0 421.9L1512.5 422.6L1513.0 424.3L1513.5 424.3L1514.0 424.6L1514.5 424.2L1515.0 421.0L1515.5 421.0L1516.0 413.6L1516.5 413.6L1517.0 421.7L1517.5 422.8L1518.0 422.7L1518.5 422.8L1519.0 422.8L1519.5 424.0L1520.0 424.1L1520.5 424.3L1521.0 424.4L1521.5 424.6L1522.0 423.4L1522.5 423.4L1523.0 422.8L1523.5 421.4L1524.0 421.4L1524.5 422.1L1525.0 421.8L1525.5 421.8L1526.0 423.1L1526.5 423.4L1527.0 423.5L1527.5 420.6L1528.0 420.6L1528.5 412.5L1529.0 412.5L1529.5 412.5L1530.0 421.7L1530.5 422.0L1531.0 422.7L1531.5 422.1L1532.0 422.1L1532.5 423.8L1533.0 424.1L1533.5 424.3L1534.0 420.5L1534.5 420.5L1535.0 412.3L1535.5 412.3L1536.0 412.3L1536.5 419.4L1537.0 420.5L1537.5 421.3L1538.0 421.4L1538.5 421.8L1539.0 422.2L1539.5 422.6L1540.0 423.2L1540.5 423.4L1541.0 420.9L1541.5 420.9L1542.0 423.9L1542.5 423.3L1543.0 422.5L1543.5 422.8L1544.0 423.4L1544.5 421.7L1545.0 421.7L1545.5 424.6L1546.0 424.2L1546.5 424.2L1547.0 420.8L1547.5 420.8L1548.0 413.1L1548.5 413.1L1549.0 421.5L1549.5 422.1L1550.0 422.8L1550.5 423.1L1551.0 423.2L1551.5 423.7L1552.0 424.0L1552.5 424.2L1553.0 424.4L1553.5 424.2L1554.0 423.3L1554.5 423.3L1555.0 424.6L1555.5 423.8L1556.0 422.7L1556.5 422.4L1557.0 421.6L1557.5 421.6L1558.0 423.0L1558.5 423.1L1559.0 423.5L1559.5 423.6L1560.0 423.9L1560.5 421.2L1561.0 421.2L1561.5 422.8L1562.0 421.9L1562.5 422.1L1563.0 422.7L1563.5 421.3L1564.0 421.3L1564.5 423.7L1565.0 423.7L1565.5 424.2L1566.0 424.5L1566.5 424.4L1567.0 421.0L1567.5 421.0L1568.0 423.0L1568.5 422.0L1569.0 422.4L1569.5 422.6L1570.0 422.5L1570.5 422.5L1571.0 423.4L1571.5 423.8L1572.0 423.9L1572.5 424.2L1573.0 421.0L1573.5 413.5L1574.0 413.5L1574.5 413.5L1575.0 420.9L1575.5 421.3L1576.0 421.4L1576.5 421.7L1577.0 421.7L1577.5 422.6L1578.0 423.2L1578.5 423.3L1579.0 423.7L1579.5 422.9L1580.0 422.9L1580.5 424.0L1581.0 422.7L1581.5 420.5L1582.0 420.7L1582.5 421.5L1583.0 422.4L1583.5 422.5L1584.0 424.3L1584.5 424.6L1585.0 424.6L1585.5 424.4L1586.0 422.1L1586.5 422.1L1587.0 423.2L1587.5 421.7L1588.0 422.1L1588.5 424.6L1589.0 424.2L1589.5 423.4L1590.0 423.4L1590.5 424.4L1591.0 424.1L1591.5 424.2L1592.0 424.6L1592.5 422.3L1593.0 422.3L1593.5 424.2L1594.0 422.8L1594.5 422.5L1595.0 422.7L1595.5 423.4L1596.0 422.6L1596.5 422.6L1597.0 424.1L1597.5 424.2L1598.0 424.4L1598.5 421.2L1599.0 421.2L1599.5 414.1L1600.0 414.1L1600.5 421.2L1601.0 422.4L1601.5 423.1L1602.0 420.9L1602.5 420.9L1603.0 424.0L1603.5 424.1L1604.0 424.4L1604.5 424.3L1605.0 420.5L1605.5 420.5L1606.0 412.2L1606.5 412.2L1607.0 421.6L1607.5 421.6L1608.0 422.3L1608.5 422.2L1609.0 422.2L1609.5 423.7L1610.0 424.1L1610.5 424.2L1611.0 424.3L1611.5 424.4L1612.0 423.4L1612.5 423.4L1613.0 423.2L1613.5 421.8L1614.0 421.5L1614.5 421.9L1615.0 422.3L1615.5 422.8L1616.0 423.2L1616.5 423.4L1617.0 423.9L1617.5 424.1L1618.0 420.6L1618.5 420.6L1619.0 412.4L1619.5 412.4L1620.0 421.4L1620.5 422.2L1621.0 422.9L1621.5 422.6L1622.0 422.6L1622.5 423.9L1623.0 424.1L1623.5 424.4L1624.0 424.4L1624.5 424.5L1625.0 422.9L1625.5 422.9L1626.0 424.0L1626.5 422.4L1627.0 422.6L1627.5 423.0L1628.0 421.3L1628.5 421.3L1629.0 424.3L1629.5 424.5L1630.0 424.1L1630.5 420.7L1631.0 420.7L1631.5 412.6L1632.0 412.6L1632.5 412.6L1633.0 421.3L1633.5 422.7L1634.0 423.2L1634.5 423.0L1635.0 423.0L1635.5 424.1L1636.0 424.2L1636.5 424.3L1637.0 421.0L1637.5 421.0L1638.0 413.4L1638.5 413.4L1639.0 413.4L1639.5 420.1L1640.0 420.6L1640.5 421.4L1641.0 422.1L1641.5 422.1L1642.0 422.8L1642.5 422.8L1643.0 423.5L1643.5 423.6L1644.0 423.2L1644.5 423.2L1645.0 424.0L1645.5 423.1L1646.0 421.1L1646.5 421.7L1647.0 422.7L1647.5 421.4L1648.0 421.4L1648.5 424.3L1649.0 424.2L1649.5 424.6L1650.0 420.9L1650.5 420.9L1651.0 413.3L1651.5 413.3L1652.0 421.7L1652.5 421.9L1653.0 422.9L1653.5 421.6L1654.0 421.6L1654.5 423.8L1655.0 424.1L1655.5 424.2L1656.0 424.4L1656.5 424.3L1657.0 423.2L1657.5 423.2L1658.0 424.1L1658.5 422.9L1659.0 422.5L1659.5 423.0L1660.0 421.1L1660.5 421.1L1661.0 424.0L1661.5 424.6L1662.0 424.4L1662.5 424.1L1663.0 424.4L1663.5 422.4L1664.0 422.4L1664.5 422.8L1665.0 421.2L1665.5 421.2L1666.0 422.3L1666.5 422.8L1667.0 423.0L1667.5 424.4L1668.0 424.4L1668.5 424.4L1669.0 424.5L1669.5 424.5L1670.0 420.9L1670.5 420.9L1671.0 422.0L1671.5 421.8L1672.0 422.0L1672.5 422.5L1673.0 421.6L1673.5 421.6L1674.0 424.2L1674.5 424.3L1675.0 424.3L1675.5 424.3L1676.0 420.6L1676.5 412.3L1677.0 412.3L1677.5 412.3L1678.0 420.4L1678.5 420.7L1679.0 420.9L1679.5 421.3L1680.0 421.7L1680.5 422.3L1681.0 422.6L1681.5 422.8L1682.0 423.3L1682.5 423.2L1683.0 423.2L1683.5 423.8L1684.0 423.3L1684.5 422.5L1685.0 422.9L1685.5 423.3L1686.0 421.6L1686.5 421.6L1687.0 424.3L1687.5 424.2L1688.0 424.3L1688.5 421.2L1689.0 421.0L1689.5 414.2L1690.0 414.2L1690.5 414.2L1691.0 422.6L1691.5 422.5L1692.0 423.2L1692.5 422.4L1693.0 422.4L1693.5 424.2L1694.0 424.2L1694.5 424.5L1695.0 424.5L1695.5 421.2L1696.0 421.2L1696.5 424.0L1697.0 422.7L1697.5 422.2L1698.0 422.9L1698.5 423.2L1699.0 421.3L1699.5 421.3L1700.0 424.2L1700.5 424.3L1701.0 424.3L1701.5 420.8L1702.0 420.8L1702.5 413.1L1703.0 413.1L1703.5 421.8L1704.0 422.3L1704.5 422.5L1705.0 420.9L1705.5 420.9L1706.0 423.9L1706.5 424.0L1707.0 424.3L1707.5 424.1L1708.0 420.7L1708.5 420.7L1709.0 412.8L1709.5 412.8L1710.0 421.8L1710.5 422.3L1711.0 422.7L1711.5 421.5L1712.0 421.5L1712.5 423.7L1713.0 424.1L1713.5 424.3L1714.0 424.4L1714.5 424.5L1715.0 423.1L1715.5 423.1L1716.0 422.4L1716.5 419.8L1717.0 421.1L1717.5 421.5L1718.0 421.9L1718.5 422.6L1719.0 424.3L1719.5 424.3L1720.0 424.6L1720.5 424.2L1721.0 421.0L1721.5 421.0L1722.0 413.6L1722.5 413.6L1723.0 421.7L1723.5 422.8L1724.0 422.7L1724.5 422.8L1725.0 422.8L1725.5 424.0L1726.0 424.1L1726.5 424.3L1727.0 424.4L1727.5 424.6L1728.0 423.4L1728.5 423.4L1729.0 422.8L1729.5 421.4L1730.0 421.4L1730.5 422.1L1731.0 421.8L1731.5 421.8L1732.0 423.1L1732.5 423.4L1733.0 423.5L1733.5 420.6L1734.0 420.6L1734.5 412.5L1735.0 412.5L1735.5 412.5L1736.0 421.7L1736.5 422.0L1737.0 422.7L1737.5 422.1L1738.0 422.1L1738.5 423.8L1739.0 424.1L1739.5 424.3L1740.0 420.5L1740.5 420.5L1741.0 412.3L1741.5 412.3L1742.0 412.3L1742.5 419.4L1743.0 420.5L1743.5 421.3L1744.0 421.4L1744.5 421.8L1745.0 422.2L1745.5 422.6L1746.0 423.2L1746.5 423.4L1747.0 420.9L1747.5 420.9L1748.0 423.9L1748.5 423.3L1749.0 422.5L1749.5 422.8L1750.0 423.4L1750.5 421.7L1751.0 421.7L1751.5 424.6L1752.0 424.2L1752.5 424.2L1753.0 420.8L1753.5 420.8L1754.0 413.1L1754.5 413.1L1755.0 421.5L1755.5 422.1L1756.0 422.8L1756.5 423.1L1757.0 423.2L1757.5 423.7L1758.0 424.0L1758.5 424.2L1759.0 424.4L1759.5 424.2L1760.0 423.3L1760.5 423.3L1761.0 424.6L1761.5 423.8L1762.0 422.7L1762.5 422.4L1763.0 421.6L1763.5 421.6L1764.0 423.0L1764.5 423.1L1765.0 423.5L1765.5 423.6L1766.0 423.9L1766.5 421.2L1767.0 421.2L1767.5 422.8L1768.0 421.9L1768.5 422.1L1769.0 422.7L1769.5 421.3L1770.0 421.3L1770.5 423.7L1771.0 423.7L1771.5 424.2L1772.0 424.5L1772.5 424.4L1773.0 421.0L1773.5 421.0L1774.0 423.0L1774.5 422.0L1775.0 422.4L1775.5 422.6L1776.0 422.5L1776.5 422.5L1777.0 423.4L1777.5 423.8L1778.0 423.9L1778.5 424.2L1779.0 421.0L1779.5 413.5L1780.0 413.5L1780.5 413.5L1781.0 420.9L1781.5 421.3L1782.0 421.4L1782.5 421.7L1783.0 421.7L1783.5 422.6L1784.0 423.2L1784.5 423.3L1785.0 423.7L1785.5 422.9L1786.0 422.9L1786.5 424.0L1787.0 422.7L1787.5 420.5L1788.0 420.7L1788.5 421.5L1789.0 422.4L1789.5 422.5L1790.0 424.3L1790.5 424.6L1791.0 424.6L1791.5 424.4L1792.0 422.1L1792.5 422.1L1793.0 423.2L1793.5 421.7L1794.0 422.1L1794.5 424.6L1795.0 424.2L1795.5 423.4L1796.0 423.4L1796.5 424.4L1797.0 424.1L1797.5 424.2L1798.0 424.6L1798.5 422.3L1799.0 422.3L1799.5 424.2L1800.0 422.8L1800.5 422.5L1801.0 422.7L1801.5 423.4L1802.0 422.6L1802.5 422.6L1803.0 424.1L1803.5 424.2L1804.0 424.4L1804.5 421.2L1805.0 421.2L1805.5 414.1L1806.0 414.1L1806.5 421.2L1807.0 422.4L1807.5 423.1L1808.0 420.9L1808.5 420.9L1809.0 424.0L1809.5 424.1L1810.0 424.4L1810.5 424.3L1811.0 420.5L1811.5 420.5L1812.0 412.2L1812.5 412.2L1813.0 421.6L1813.5 421.6L1814.0 422.3L1814.5 422.2L1815.0 422.2L1815.5 423.7L1816.0 424.1L1816.5 424.2L1817.0 424.3L1817.5 424.4L1818.0 423.4L1818.5 423.4L1819.0 423.2L1819.5 421.8L1820.0 421.5L1820.5 421.9L1821.0 422.3L1821.5 422.8L1822.0 423.2L1822.5 423.4L1823.0 423.9L1823.5 424.1L1824.0 420.6L1824.5 420.6L1825.0 412.4L1825.5 412.4L1826.0 421.4L1826.5 422.2L1827.0 422.9L1827.5 422.6L1828.0 422.6L1828.5 423.9L1829.0 424.1L1829.5 424.4L1830.0 424.4L1830.5 424.5L1831.0 422.9L1831.5 422.9L1832.0 424.0L1832.5 422.4L1833.0 422.6L1833.5 423.0L1834.0 421.3L1834.5 421.3L1835.0 424.3L1835.5 424.5L1836.0 424.1L1836.5 420.7L1837.0 420.7L1837.5 412.6L1838.0 412.6L1838.5 412.6L1839.0 421.3L1839.5 422.7L1840.0 423.2L1840.5 423.0L1841.0 423.0L1841.5 424.1L1842.0 424.2L1842.5 424.3L1843.0 421.0L1843.5 421.0L1844.0 413.4L1844.5 413.4L1845.0 413.4L1845.5 420.1L1846.0 420.6L1846.5 421.4L1847.0 422.1L1847.5 422.1L1848.0 422.8L1848.5 422.8L1849.0 423.5L1849.5 423.6L1850.0 423.2L1850.5 423.2L1851.0 424.0L1851.5 423.1L1852.0 421.1L1852.5 421.7L1853.0 422.7L1853.5 421.4L1854.0 421.4L1854.5 424.3L1855.0 424.2L1855.5 424.6L1856.0 420.9L1856.5 420.9L1857.0 413.3L1857.5 413.3L1858.0 421.7L1858.5 421.9L1859.0 422.9L1859.5 421.6L1860.0 421.6L1860.5 423.8L1861.0 424.1L1861.5 424.2L1862.0 424.4L1862.5 424.3L1863.0 423.2L1863.5 423.2L1864.0 424.1L1864.5 422.9L1865.0 422.5L1865.5 423.0L1866.0 421.1L1866.5 421.1L1867.0 424.0L1867.5 424.6L1868.0 424.4L1868.5 424.1L1869.0 424.4L1869.5 422.4L1870.0 422.4L1870.5 422.8L1871.0 421.2L1871.5 421.2L1872.0 422.3L1872.5 422.8L1873.0 423.0L1873.5 424.4L1874.0 424.4L1874.5 424.4L1875.0 424.5L1875.5 424.5L1876.0 420.9L1876.5 420.9L1877.0 422.0L1877.5 421.8L1878.0 422.0L1878.5 422.5L1879.0 421.6L1879.5 421.6L1880.0 424.2L1880.5 424.3L1881.0 424.3L1881.5 424.3L1881.5 425.0L1881.5 426.0L1881.0 426.0L1880.5 426.1L1880.0 426.0L1879.5 428.4L1879.0 428.5L1878.5 427.9L1878.0 428.9L1877.5 428.8L1877.0 428.7L1876.5 430.1L1876.0 430.1L1875.5 426.2L1875.0 425.9L1874.5 426.1L1874.0 426.3L1873.5 426.1L1873.0 427.6L1872.5 427.6L1872.0 428.5L1871.5 429.0L1871.0 428.9L1870.5 427.7L1870.0 428.0L1869.5 428.5L1869.0 426.4L1868.5 426.1L1868.0 426.2L1867.5 426.1L1867.0 426.4L1866.5 429.9L1866.0 429.5L1865.5 427.7L1865.0 428.3L1864.5 427.6L1864.0 426.2L1863.5 427.0L1863.0 427.0L1862.5 426.1L1862.0 426.3L1861.5 426.2L1861.0 426.4L1860.5 426.7L1860.0 428.7L1859.5 428.5L1859.0 427.6L1858.5 428.9L1858.0 428.4L1857.5 438.3L1857.0 438.3L1856.5 430.1L1856.0 429.5L1855.5 426.4L1855.0 426.0L1854.5 426.4L1854.0 429.6L1853.5 429.3L1853.0 427.5L1852.5 429.1L1852.0 430.1L1851.5 427.2L1851.0 426.4L1850.5 427.6L1850.0 427.3L1849.5 426.9L1849.0 427.1L1848.5 427.6L1848.0 427.9L1847.5 428.2L1847.0 428.5L1846.5 429.0L1846.0 429.9L1845.5 431.0L1845.0 437.1L1844.5 435.7L1844.0 438.2L1843.5 429.7L1843.0 429.7L1842.5 426.3L1842.0 426.2L1841.5 426.5L1841.0 427.6L1840.5 427.4L1840.0 427.5L1839.5 427.6L1839.0 429.6L1838.5 436.6L1838.0 437.1L1837.5 437.7L1837.0 430.1L1836.5 429.6L1836.0 426.1L1835.5 426.3L1835.0 426.0L1834.5 429.1L1834.0 429.3L1833.5 427.2L1833.0 428.1L1832.5 428.1L1832.0 426.7L1831.5 427.3L1831.0 428.0L1830.5 426.3L1830.0 426.1L1829.5 426.1L1829.0 426.4L1828.5 426.7L1828.0 428.2L1827.5 428.1L1827.0 427.8L1826.5 428.5L1826.0 429.2L1825.5 437.2L1825.0 438.5L1824.5 430.4L1824.0 430.0L1823.5 426.0L1823.0 426.7L1822.5 427.0L1822.0 427.6L1821.5 427.9L1821.0 428.1L1820.5 428.6L1820.0 428.8L1819.5 428.9L1819.0 427.5L1818.5 427.0L1818.0 427.3L1817.5 426.0L1817.0 426.0L1816.5 426.3L1816.0 426.5L1815.5 426.7L1815.0 428.2L1814.5 428.3L1814.0 428.4L1813.5 428.9L1813.0 429.0L1812.5 439.0L1812.0 437.8L1811.5 430.5L1811.0 430.2L1810.5 426.1L1810.0 426.1L1809.5 426.4L1809.0 426.5L1808.5 429.1L1808.0 430.2L1807.5 427.3L1807.0 427.9L1806.5 429.0L1806.0 435.7L1805.5 437.7L1805.0 429.5L1804.5 429.1L1804.0 426.3L1803.5 426.0L1803.0 426.0L1802.5 427.7L1802.0 427.7L1801.5 427.2L1801.0 428.0L1800.5 427.5L1800.0 427.6L1799.5 426.4L1799.0 428.7L1798.5 428.8L1798.0 426.4L1797.5 426.0L1797.0 426.1L1796.5 426.4L1796.0 426.9L1795.5 427.3L1795.0 426.3L1794.5 426.1L1794.0 428.0L1793.5 428.2L1793.0 427.3L1792.5 428.3L1792.0 428.1L1791.5 425.9L1791.0 426.4L1790.5 426.2L1790.0 426.2L1789.5 427.5L1789.0 427.8L1788.5 428.5L1788.0 429.4L1787.5 430.3L1787.0 427.6L1786.5 426.5L1786.0 427.9L1785.5 427.8L1785.0 426.8L1784.5 427.2L1784.0 427.4L1783.5 428.1L1783.0 428.7L1782.5 428.9L1782.0 429.3L1781.5 429.3L1781.0 429.4L1780.5 437.1L1780.0 437.9L1779.5 435.8L1779.0 429.3L1778.5 426.2L1778.0 426.4L1777.5 426.7L1777.0 427.1L1776.5 427.7L1776.0 428.1L1775.5 428.2L1775.0 427.8L1774.5 428.9L1774.0 427.3L1773.5 429.3L1773.0 428.7L1772.5 426.3L1772.0 426.3L1771.5 426.2L1771.0 426.9L1770.5 426.9L1770.0 429.3L1769.5 428.7L1769.0 428.3L1768.5 428.2L1768.0 428.3L1767.5 427.9L1767.0 429.4L1766.5 429.1L1766.0 426.7L1765.5 427.0L1765.0 427.1L1764.5 427.4L1764.0 427.5L1763.5 428.8L1763.0 429.4L1762.5 428.1L1762.0 427.8L1761.5 426.6L1761.0 426.0L1760.5 427.4L1760.0 427.2L1759.5 426.2L1759.0 426.1L1758.5 426.3L1758.0 426.5L1757.5 426.8L1757.0 427.5L1756.5 427.3L1756.0 427.8L1755.5 428.4L1755.0 429.1L1754.5 438.4L1754.0 438.0L1753.5 429.9L1753.0 429.6L1752.5 426.4L1752.0 426.2L1751.5 425.9L1751.0 428.6L1750.5 428.8L1750.0 427.3L1749.5 427.8L1749.0 427.9L1748.5 427.0L1748.0 426.5L1747.5 429.6L1747.0 429.9L1746.5 427.1L1746.0 427.3L1745.5 428.0L1745.0 428.5L1744.5 428.8L1744.0 429.2L1743.5 428.9L1743.0 430.4L1742.5 431.4L1742.0 437.0L1741.5 437.9L1741.0 438.3L1740.5 429.6L1740.0 430.3L1739.5 426.2L1739.0 426.3L1738.5 426.8L1738.0 428.0L1737.5 429.0L1737.0 427.7L1736.5 428.8L1736.0 428.4L1735.5 438.2L1735.0 439.2L1734.5 438.5L1734.0 430.0L1733.5 430.0L1733.0 427.0L1732.5 426.8L1732.0 427.1L1731.5 428.2L1731.0 428.4L1730.5 428.8L1730.0 429.8L1729.5 428.4L1729.0 427.6L1728.5 427.2L1728.0 426.8L1727.5 426.0L1727.0 426.4L1726.5 426.2L1726.0 426.3L1725.5 426.4L1725.0 427.4L1724.5 427.5L1724.0 428.1L1723.5 427.5L1723.0 428.5L1722.5 437.3L1722.0 435.8L1721.5 429.6L1721.0 429.3L1720.5 426.2L1720.0 426.4L1719.5 426.3L1719.0 426.3L1718.5 427.5L1718.0 429.2L1717.5 428.3L1717.0 429.9L1716.5 430.3L1716.0 428.6L1715.5 427.5L1715.0 427.3L1714.5 426.4L1714.0 426.4L1713.5 426.3L1713.0 426.4L1712.5 426.8L1712.0 428.7L1711.5 429.3L1711.0 427.7L1710.5 427.9L1710.0 428.5L1709.5 438.4L1709.0 436.9L1708.5 429.7L1708.0 429.4L1707.5 426.2L1707.0 426.3L1706.5 426.4L1706.0 426.5L1705.5 429.4L1705.0 430.1L1704.5 428.2L1704.0 428.5L1703.5 429.0L1703.0 437.5L1702.5 437.5L1702.0 429.8L1701.5 430.1L1701.0 426.2L1700.5 426.4L1700.0 426.0L1699.5 428.9L1699.0 429.0L1698.5 427.4L1698.0 427.7L1697.5 428.0L1697.0 427.5L1696.5 426.7L1696.0 429.4L1695.5 429.1L1695.0 425.9L1694.5 426.2L1694.0 426.4L1693.5 426.4L1693.0 428.3L1692.5 428.6L1692.0 427.3L1691.5 428.1L1691.0 427.9L1690.5 436.4L1690.0 437.5L1689.5 435.0L1689.0 429.3L1688.5 429.3L1688.0 426.4L1687.5 426.1L1687.0 426.0L1686.5 428.2L1686.0 428.5L1685.5 426.9L1685.0 427.5L1684.5 427.6L1684.0 427.1L1683.5 426.6L1683.0 427.6L1682.5 427.3L1682.0 427.1L1681.5 427.8L1681.0 428.1L1680.5 428.0L1680.0 428.5L1679.5 429.5L1679.0 429.5L1678.5 430.1L1678.0 429.8L1677.5 438.3L1677.0 439.5L1676.5 437.9L1676.0 429.5L1675.5 426.0L1675.0 426.0L1674.5 426.1L1674.0 426.0L1673.5 428.4L1673.0 428.5L1672.5 427.9L1672.0 428.9L1671.5 428.8L1671.0 428.7L1670.5 430.1L1670.0 430.1L1669.5 426.2L1669.0 425.9L1668.5 426.1L1668.0 426.3L1667.5 426.1L1667.0 427.6L1666.5 427.6L1666.0 428.5L1665.5 429.0L1665.0 428.9L1664.5 427.7L1664.0 428.0L1663.5 428.5L1663.0 426.4L1662.5 426.1L1662.0 426.2L1661.5 426.1L1661.0 426.4L1660.5 429.9L1660.0 429.5L1659.5 427.7L1659.0 428.3L1658.5 427.6L1658.0 426.2L1657.5 427.0L1657.0 427.0L1656.5 426.1L1656.0 426.3L1655.5 426.2L1655.0 426.4L1654.5 426.7L1654.0 428.7L1653.5 428.5L1653.0 427.6L1652.5 428.9L1652.0 428.4L1651.5 438.3L1651.0 438.3L1650.5 430.1L1650.0 429.5L1649.5 426.4L1649.0 426.0L1648.5 426.4L1648.0 429.6L1647.5 429.3L1647.0 427.5L1646.5 429.1L1646.0 430.1L1645.5 427.2L1645.0 426.4L1644.5 427.6L1644.0 427.3L1643.5 426.9L1643.0 427.1L1642.5 427.6L1642.0 427.9L1641.5 428.2L1641.0 428.5L1640.5 429.0L1640.0 429.9L1639.5 431.0L1639.0 437.1L1638.5 435.7L1638.0 438.2L1637.5 429.7L1637.0 429.7L1636.5 426.3L1636.0 426.2L1635.5 426.5L1635.0 427.6L1634.5 427.4L1634.0 427.5L1633.5 427.6L1633.0 429.6L1632.5 436.6L1632.0 437.1L1631.5 437.7L1631.0 430.1L1630.5 429.6L1630.0 426.1L1629.5 426.3L1629.0 426.0L1628.5 429.1L1628.0 429.3L1627.5 427.2L1627.0 428.1L1626.5 428.1L1626.0 426.7L1625.5 427.3L1625.0 428.0L1624.5 426.3L1624.0 426.1L1623.5 426.1L1623.0 426.4L1622.5 426.7L1622.0 428.2L1621.5 428.1L1621.0 427.8L1620.5 428.5L1620.0 429.2L1619.5 437.2L1619.0 438.5L1618.5 430.4L1618.0 430.0L1617.5 426.0L1617.0 426.7L1616.5 427.0L1616.0 427.6L1615.5 427.9L1615.0 428.1L1614.5 428.6L1614.0 428.8L1613.5 428.9L1613.0 427.5L1612.5 427.0L1612.0 427.3L1611.5 426.0L1611.0 426.0L1610.5 426.3L1610.0 426.5L1609.5 426.7L1609.0 428.2L1608.5 428.3L1608.0 428.4L1607.5 428.9L1607.0 429.0L1606.5 439.0L1606.0 437.8L1605.5 430.5L1605.0 430.2L1604.5 426.1L1604.0 426.1L1603.5 426.4L1603.0 426.5L1602.5 429.1L1602.0 430.2L1601.5 427.3L1601.0 427.9L1600.5 429.0L1600.0 435.7L1599.5 437.7L1599.0 429.5L1598.5 429.1L1598.0 426.3L1597.5 426.0L1597.0 426.0L1596.5 427.7L1596.0 427.7L1595.5 427.2L1595.0 428.0L1594.5 427.5L1594.0 427.6L1593.5 426.4L1593.0 428.7L1592.5 428.8L1592.0 426.4L1591.5 426.0L1591.0 426.1L1590.5 426.4L1590.0 426.9L1589.5 427.3L1589.0 426.3L1588.5 426.1L1588.0 428.0L1587.5 428.2L1587.0 427.3L1586.5 428.3L1586.0 428.1L1585.5 425.9L1585.0 426.4L1584.5 426.2L1584.0 426.2L1583.5 427.5L1583.0 427.8L1582.5 428.5L1582.0 429.4L1581.5 430.3L1581.0 427.6L1580.5 426.5L1580.0 427.9L1579.5 427.8L1579.0 426.8L1578.5 427.2L1578.0 427.4L1577.5 428.1L1577.0 428.7L1576.5 428.9L1576.0 429.3L1575.5 429.3L1575.0 429.4L1574.5 437.1L1574.0 437.9L1573.5 435.8L1573.0 429.3L1572.5 426.2L1572.0 426.4L1571.5 426.7L1571.0 427.1L1570.5 427.7L1570.0 428.1L1569.5 428.2L1569.0 427.8L1568.5 428.9L1568.0 427.3L1567.5 429.3L1567.0 428.7L1566.5 426.3L1566.0 426.3L1565.5 426.2L1565.0 426.9L1564.5 426.9L1564.0 429.3L1563.5 428.7L1563.0 428.3L1562.5 428.2L1562.0 428.3L1561.5 427.9L1561.0 429.4L1560.5 429.1L1560.0 426.7L1559.5 427.0L1559.0 427.1L1558.5 427.4L1558.0 427.5L1557.5 428.8L1557.0 429.4L1556.5 428.1L1556.0 427.8L1555.5 426.6L1555.0 426.0L1554.5 427.4L1554.0 427.2L1553.5 426.2L1553.0 426.1L1552.5 426.3L1552.0 426.5L1551.5 426.8L1551.0 427.5L1550.5 427.3L1550.0 427.8L1549.5 428.4L1549.0 429.1L1548.5 438.4L1548.0 438.0L1547.5 429.9L1547.0 429.6L1546.5 426.4L1546.0 426.2L1545.5 425.9L1545.0 428.6L1544.5 428.8L1544.0 427.3L1543.5 427.8L1543.0 427.9L1542.5 427.0L1542.0 426.5L1541.5 429.6L1541.0 429.9L1540.5 427.1L1540.0 427.3L1539.5 428.0L1539.0 428.5L1538.5 428.8L1538.0 429.2L1537.5 428.9L1537.0 430.4L1536.5 431.4L1536.0 437.0L1535.5 437.9L1535.0 438.3L1534.5 429.6L1534.0 430.3L1533.5 426.2L1533.0 426.3L1532.5 426.8L1532.0 428.0L1531.5 429.0L1531.0 427.7L1530.5 428.8L1530.0 428.4L1529.5 438.2L1529.0 439.2L1528.5 438.5L1528.0 430.0L1527.5 430.0L1527.0 427.0L1526.5 426.8L1526.0 427.1L1525.5 428.2L1525.0 428.4L1524.5 428.8L1524.0 429.8L1523.5 428.4L1523.0 427.6L1522.5 427.2L1522.0 426.8L1521.5 426.0L1521.0 426.4L1520.5 426.2L1520.0 426.3L1519.5 426.4L1519.0 427.4L1518.5 427.5L1518.0 428.1L1517.5 427.5L1517.0 428.5L1516.5 437.3L1516.0 435.8L1515.5 429.6L1515.0 429.3L1514.5 426.2L1514.0 426.4L1513.5 426.3L1513.0 426.3L1512.5 427.5L1512.0 429.2L1511.5 428.3L1511.0 429.9L1510.5 430.3L1510.0 428.6L1509.5 427.5L1509.0 427.3L1508.5 426.4L1508.0 426.4L1507.5 426.3L1507.0 426.4L1506.5 426.8L1506.0 428.7L1505.5 429.3L1505.0 427.7L1504.5 427.9L1504.0 428.5L1503.5 438.4L1503.0 436.9L1502.5 429.7L1502.0 429.4L1501.5 426.2L1501.0 426.3L1500.5 426.4L1500.0 426.5L1499.5 429.4L1499.0 430.1L1498.5 428.2L1498.0 428.5L1497.5 429.0L1497.0 437.5L1496.5 437.5L1496.0 429.8L1495.5 430.1L1495.0 426.2L1494.5 426.4L1494.0 426.0L1493.5 428.9L1493.0 429.0L1492.5 427.4L1492.0 427.7L1491.5 428.0L1491.0 427.5L1490.5 426.7L1490.0 429.4L1489.5 429.1L1489.0 425.9L1488.5 426.2L1488.0 426.4L1487.5 426.4L1487.0 428.3L1486.5 428.6L1486.0 427.3L1485.5 428.1L1485.0 427.9L1484.5 436.4L1484.0 437.5L1483.5 435.0L1483.0 429.3L1482.5 429.3L1482.0 426.4L1481.5 426.1L1481.0 426.0L1480.5 428.2L1480.0 428.5L1479.5 426.9L1479.0 427.5L1478.5 427.6L1478.0 427.1L1477.5 426.6L1477.0 427.6L1476.5 427.3L1476.0 427.1L1475.5 427.8L1475.0 428.1L1474.5 428.0L1474.0 428.5L1473.5 429.5L1473.0 429.5L1472.5 430.1L1472.0 429.8L1471.5 438.3L1471.0 439.5L1470.5 437.9L1470.0 429.5L1469.5 426.0L1469.0 426.0L1468.5 426.1L1468.0 426.0L1467.5 428.4L1467.0 428.5L1466.5 427.9L1466.0 428.9L1465.5 428.8L1465.0 428.7L1464.5 430.1L1464.0 430.1L1463.5 426.2L1463.0 425.9L1462.5 426.1L1462.0 426.3L1461.5 426.1L1461.0 427.6L1460.5 427.6L1460.0 428.5L1459.5 429.0L1459.0 428.9L1458.5 427.7L1458.0 428.0L1457.5 428.5L1457.0 426.4L1456.5 426.1L1456.0 426.2L1455.5 426.1L1455.0 426.4L1454.5 429.9L1454.0 429.5L1453.5 427.7L1453.0 428.3L1452.5 427.6L1452.0 426.2L1451.5 427.0L1451.0 427.0L1450.5 426.1L1450.0 426.3L1449.5 426.2L1449.0 426.4L1448.5 426.7L1448.0 428.7L1447.5 428.5L1447.0 427.6L1446.5 428.9L1446.0 428.4L1445.5 438.3L1445.0 438.3L1444.5 430.1L1444.0 429.5L1443.5 426.4L1443.0 426.0L1442.5 426.4L1442.0 429.6L1441.5 429.3L1441.0 427.5L1440.5 429.1L1440.0 430.1L1439.5 427.2L1439.0 426.4L1438.5 427.6L1438.0 427.3L1437.5 426.9L1437.0 427.1L1436.5 427.6L1436.0 427.9L1435.5 428.2L1435.0 428.5L1434.5 429.0L1434.0 429.9L1433.5 431.0L1433.0 437.1L1432.5 435.7L1432.0 438.2L1431.5 429.7L1431.0 429.7L1430.5 426.3L1430.0 426.2L1429.5 426.5L1429.0 427.6L1428.5 427.4L1428.0 427.5L1427.5 427.6L1427.0 429.6L1426.5 436.6L1426.0 437.1L1425.5 437.7L1425.0 430.1L1424.5 429.6L1424.0 426.1L1423.5 426.3L1423.0 426.0L1422.5 429.1L1422.0 429.3L1421.5 427.2L1421.0 428.1L1420.5 428.1L1420.0 426.7L1419.5 427.3L1419.0 428.0L1418.5 426.3L1418.0 426.1L1417.5 426.1L1417.0 426.4L1416.5 426.7L1416.0 428.2L1415.5 428.1L1415.0 427.8L1414.5 428.5L1414.0 429.2L1413.5 437.2L1413.0 438.5L1412.5 430.4L1412.0 430.0L1411.5 426.0L1411.0 426.7L1410.5 427.0L1410.0 427.6L1409.5 427.9L1409.0 428.1L1408.5 428.6L1408.0 428.8L1407.5 428.9L1407.0 427.5L1406.5 427.0L1406.0 427.3L1405.5 426.0L1405.0 426.0L1404.5 426.3L1404.0 426.5L1403.5 426.7L1403.0 428.2L1402.5 428.3L1402.0 428.4L1401.5 428.9L1401.0 429.0L1400.5 439.0L1400.0 437.8L1399.5 430.5L1399.0 430.2L1398.5 426.1L1398.0 426.1L1397.5 426.4L1397.0 426.5L1396.5 429.1L1396.0 430.2L1395.5 427.3L1395.0 427.9L1394.5 429.0L1394.0 435.7L1393.5 437.7L1393.0 429.5L1392.5 429.1L1392.0 426.3L1391.5 426.0L1391.0 426.0L1390.5 427.7L1390.0 427.7L1389.5 427.2L1389.0 428.0L1388.5 427.5L1388.0 427.6L1387.5 426.4L1387.0 428.7L1386.5 428.8L1386.0 426.4L1385.5 426.0L1385.0 426.1L1384.5 426.4L1384.0 426.9L1383.5 427.3L1383.0 426.3L1382.5 426.1L1382.0 428.0L1381.5 428.2L1381.0 427.3L1380.5 428.3L1380.0 428.1L1379.5 425.9L1379.0 426.4L1378.5 426.2L1378.0 426.2L1377.5 427.5L1377.0 427.8L1376.5 428.5L1376.0 429.4L1375.5 430.3L1375.0 427.6L1374.5 426.5L1374.0 427.9L1373.5 427.8L1373.0 426.8L1372.5 427.2L1372.0 427.4L1371.5 428.1L1371.0 428.7L1370.5 428.9L1370.0 429.3L1369.5 429.3L1369.0 429.4L1368.5 437.1L1368.0 437.9L1367.5 435.8L1367.0 429.3L1366.5 426.2L1366.0 426.4L1365.5 426.7L1365.0 427.1L1364.5 427.7L1364.0 428.1L1363.5 428.2L1363.0 427.8L1362.5 428.9L1362.0 427.3L1361.5 429.3L1361.0 428.7L1360.5 426.3L1360.0 426.3L1359.5 426.2L1359.0 426.9L1358.5 426.9L1358.0 429.3L1357.5 428.7L1357.0 428.3L1356.5 428.2L1356.0 428.3L1355.5 427.9L1355.0 429.4L1354.5 429.1L1354.0 426.7L1353.5 427.0L1353.0 427.1L1352.5 427.4L1352.0 427.5L1351.5 428.8L1351.0 429.4L1350.5 428.1L1350.0 427.8L1349.5 426.6L1349.0 426.0L1348.5 427.4L1348.0 427.2L1347.5 426.2L1347.0 426.1L1346.5 426.3L1346.0 426.5L1345.5 426.8L1345.0 427.5L1344.5 427.3L1344.0 427.8L1343.5 428.4L1343.0 429.1L1342.5 438.4L1342.0 438.0L1341.5 429.9L1341.0 429.6L1340.5 426.4L1340.0 426.2L1339.5 425.9L1339.0 428.6L1338.5 428.8L1338.0 427.3L1337.5 427.8L1337.0 427.9L1336.5 427.0L1336.0 426.5L1335.5 429.6L1335.0 429.9L1334.5 427.1L1334.0 427.3L1333.5 428.0L1333.0 428.5L1332.5 428.8L1332.0 429.2L1331.5 428.9L1331.0 430.4L1330.5 431.4L1330.0 437.0L1329.5 437.9L1329.0 438.3L1328.5 429.6L1328.0 430.3L1327.5 426.2L1327.0 426.3L1326.5 426.8L1326.0 428.0L1325.5 429.0L1325.0 427.7L1324.5 428.8L1324.0 428.4L1323.5 438.2L1323.0 439.2L1322.5 438.5L1322.0 430.0L1321.5 430.0L1321.0 427.0L1320.5 426.8L1320.0 427.1L1319.5 428.2L1319.0 428.4L1318.5 428.8L1318.0 429.8L1317.5 428.4L1317.0 427.6L1316.5 427.2L1316.0 426.8L1315.5 426.0L1315.0 426.4L1314.5 426.2L1314.0 426.3L1313.5 426.4L1313.0 427.4L1312.5 427.5L1312.0 428.1L1311.5 427.5L1311.0 428.5L1310.5 437.3L1310.0 435.8L1309.5 429.6L1309.0 429.3L1308.5 426.2L1308.0 426.4L1307.5 426.3L1307.0 426.3L1306.5 427.5L1306.0 429.2L1305.5 428.3L1305.0 429.9L1304.5 430.3L1304.0 428.6L1303.5 427.5L1303.0 427.3L1302.5 426.4L1302.0 426.4L1301.5 426.3L1301.0 426.4L1300.5 426.8L1300.0 428.7L1299.5 429.3L1299.0 427.7L1298.5 427.9L1298.0 428.5L1297.5 438.4L1297.0 436.9L1296.5 429.7L1296.0 429.4L1295.5 426.2L1295.0 426.3L1294.5 426.4L1294.0 426.5L1293.5 429.4L1293.0 430.1L1292.5 428.2L1292.0 428.5L1291.5 429.0L1291.0 437.5L1290.5 437.5L1290.0 429.8L1289.5 430.1L1289.0 426.2L1288.5 426.4L1288.0 426.0L1287.5 428.9L1287.0 429.0L1286.5 427.4L1286.0 427.7L1285.5 428.0L1285.0 427.5L1284.5 426.7L1284.0 429.4L1283.5 429.1L1283.0 425.9L1282.5 426.2L1282.0 426.4L1281.5 426.4L1281.0 428.3L1280.5 428.6L1280.0 427.3L1279.5 428.1L1279.0 427.9L1278.5 436.4L1278.0 437.5L1277.5 435.0L1277.0 429.3L1276.5 429.3L1276.0 426.4L1275.5 426.1L1275.0 426.0L1274.5 428.2L1274.0 428.5L1273.5 426.9L1273.0 427.5L1272.5 427.6L1272.0 427.1L1271.5 426.6L1271.0 427.6L1270.5 427.3L1270.0 427.1L1269.5 427.8L1269.0 428.1L1268.5 428.0L1268.0 428.5L1267.5 429.5L1267.0 429.5L1266.5 430.1L1266.0 429.8L1265.5 438.3L1265.0 439.5L1264.5 437.9L1264.0 429.5L1263.5 426.0L1263.0 426.0L1262.5 426.1L1262.0 426.0L1261.5 428.4L1261.0 428.5L1260.5 427.9L1260.0 428.9L1259.5 428.8L1259.0 428.7L1258.5 430.1L1258.0 430.1L1257.5 426.2L1257.0 425.9L1256.5 426.1L1256.0 426.3L1255.5 426.1L1255.0 427.6L1254.5 427.6L1254.0 428.5L1253.5 429.0L1253.0 428.9L1252.5 427.7L1252.0 428.0L1251.5 428.5L1251.0 426.4L1250.5 426.1L1250.0 426.2L1249.5 426.1L1249.0 426.4L1248.5 429.9L1248.0 429.5L1247.5 427.7L1247.0 428.3L1246.5 427.6L1246.0 426.2L1245.5 427.0L1245.0 427.0L1244.5 426.1L1244.0 426.3L1243.5 426.2L1243.0 426.4L1242.5 426.7L1242.0 428.7L1241.5 428.5L1241.0 427.6L1240.5 428.9L1240.0 428.4L1239.5 438.3L1239.0 438.3L1238.5 430.1L1238.0 429.5L1237.5 426.4L1237.0 426.0L1236.5 426.4L1236.0 429.6L1235.5 429.3L1235.0 427.5L1234.5 429.1L1234.0 430.1L1233.5 427.2L1233.0 426.4L1232.5 427.6L1232.0 427.3L1231.5 426.9L1231.0 427.1L1230.5 427.6L1230.0 427.9L1229.5 428.2L1229.0 428.5L1228.5 429.0L1228.0 429.9L1227.5 431.0L1227.0 437.1L1226.5 435.7L1226.0 438.2L1225.5 429.7L1225.0 429.7L1224.5 426.3L1224.0 426.2L1223.5 426.5L1223.0 427.6L1222.5 427.4L1222.0 427.5L1221.5 427.6L1221.0 429.6L1220.5 436.6L1220.0 437.1L1219.5 437.7L1219.0 430.1L1218.5 429.6L1218.0 426.1L1217.5 426.3L1217.0 426.0L1216.5 429.1L1216.0 429.3L1215.5 427.2L1215.0 428.1L1214.5 428.1L1214.0 426.7L1213.5 427.3L1213.0 428.0L1212.5 426.3L1212.0 426.1L1211.5 426.1L1211.0 426.4L1210.5 426.7L1210.0 428.2L1209.5 428.1L1209.0 427.8L1208.5 428.5L1208.0 429.2L1207.5 437.2L1207.0 438.5L1206.5 430.4L1206.0 430.0L1205.5 426.0L1205.0 426.7L1204.5 427.0L1204.0 427.6L1203.5 427.9L1203.0 428.1L1202.5 428.6L1202.0 428.8L1201.5 428.9L1201.0 427.5L1200.5 427.0L1200.0 427.3L1199.5 426.0L1199.0 426.0L1198.5 426.3L1198.0 426.5L1197.5 426.7L1197.0 428.2L1196.5 428.3L1196.0 428.4L1195.5 428.9L1195.0 429.0L1194.5 439.0L1194.0 437.8L1193.5 430.5L1193.0 430.2L1192.5 426.1L1192.0 426.1L1191.5 426.4L1191.0 426.5L1190.5 429.1L1190.0 430.2L1189.5 427.3L1189.0 427.9L1188.5 429.0L1188.0 435.7L1187.5 437.7L1187.0 429.5L1186.5 429.1L1186.0 426.3L1185.5 426.0L1185.0 426.0L1184.5 427.7L1184.0 427.7L1183.5 427.2L1183.0 428.0L1182.5 427.5L1182.0 427.6L1181.5 426.4L1181.0 428.7L1180.5 428.8L1180.0 426.4L1179.5 426.0L1179.0 426.1L1178.5 426.4L1178.0 426.9L1177.5 427.3L1177.0 426.3L1176.5 426.1L1176.0 428.0L1175.5 428.2L1175.0 427.3L1174.5 428.3L1174.0 428.1L1173.5 425.9L1173.0 426.4L1172.5 426.2L1172.0 426.2L1171.5 427.5L1171.0 427.8L1170.5 428.5L1170.0 429.4L1169.5 430.3L1169.0 427.6L1168.5 426.5L1168.0 427.9L1167.5 427.8L1167.0 426.8L1166.5 427.2L1166.0 427.4L1165.5 428.1L1165.0 428.7L1164.5 428.9L1164.0 429.3L1163.5 429.3L1163.0 429.4L1162.5 437.1L1162.0 437.9L1161.5 435.8Z" fill="#a9c6ea"/></svg>
<svg style="left:0;top:0" width="2185" height="793" viewBox="0 0 2185 793" opacity="1"><path d="M1986.5 425.0L1986.5 413.5L1987.0 420.9L1987.5 421.3L1988.0 421.4L1988.5 421.7L1989.0 421.7L1989.5 422.6L1990.0 423.2L1990.5 423.3L1991.0 423.7L1991.5 422.9L1992.0 422.9L1992.5 424.0L1993.0 422.7L1993.5 420.5L1994.0 420.7L1994.5 421.5L1995.0 422.4L1995.5 422.5L1996.0 424.3L1996.5 424.6L1997.0 424.6L1997.5 424.4L1998.0 422.1L1998.5 422.1L1999.0 423.2L1999.5 421.7L2000.0 422.1L2000.5 424.6L2001.0 424.2L2001.5 423.4L2002.0 423.4L2002.5 424.4L2003.0 424.1L2003.5 424.2L2004.0 424.6L2004.5 422.3L2005.0 422.3L2005.5 424.2L2006.0 422.8L2006.5 422.5L2007.0 422.7L2007.5 423.4L2008.0 422.6L2008.5 422.6L2009.0 424.1L2009.5 424.2L2010.0 424.4L2010.5 421.2L2011.0 421.2L2011.5 414.1L2012.0 414.1L2012.5 421.2L2013.0 422.4L2013.5 423.1L2014.0 420.9L2014.5 420.9L2015.0 424.0L2015.5 424.1L2016.0 424.4L2016.5 424.3L2017.0 420.5L2017.5 420.5L2018.0 412.2L2018.5 412.2L2019.0 421.6L2019.5 421.6L2020.0 422.3L2020.5 422.2L2021.0 422.2L2021.5 423.7L2022.0 424.1L2022.5 424.2L2023.0 424.3L2023.5 424.4L2024.0 423.4L2024.5 423.4L2025.0 423.2L2025.5 421.8L2026.0 421.5L2026.5 421.9L2027.0 422.3L2027.5 422.8L2028.0 423.2L2028.5 423.4L2029.0 423.9L2029.5 424.1L2030.0 420.6L2030.5 420.6L2031.0 412.4L2031.5 412.4L2032.0 421.4L2032.5 422.2L2033.0 422.9L2033.5 422.6L2034.0 422.6L2034.5 423.9L2035.0 424.1L2035.5 424.4L2036.0 424.4L2036.5 424.5L2037.0 422.9L2037.5 422.9L2038.0 424.0L2038.5 422.4L2039.0 422.6L2039.5 423.0L2040.0 421.3L2040.5 421.3L2041.0 424.3L2041.5 424.5L2042.0 424.1L2042.5 420.7L2043.0 420.7L2043.5 412.6L2044.0 412.6L2044.5 412.6L2045.0 421.3L2045.5 422.7L2046.0 423.2L2046.5 423.0L2047.0 423.0L2047.5 424.1L2048.0 424.2L2048.5 424.3L2049.0 421.0L2049.5 421.0L2050.0 413.4L2050.5 413.4L2051.0 413.4L2051.5 420.1L2052.0 420.6L2052.5 421.4L2053.0 422.1L2053.5 422.1L2054.0 422.8L2054.5 422.8L2055.0 423.5L2055.5 423.6L2056.0 423.2L2056.5 423.2L2057.0 424.0L2057.5 423.1L2058.0 421.1L2058.5 421.7L2059.0 422.7L2059.5 421.4L2060.0 421.4L2060.5 424.3L2061.0 424.2L2061.5 424.6L2062.0 420.9L2062.5 420.9L2063.0 413.3L2063.5 413.3L2064.0 421.7L2064.5 421.9L2065.0 422.9L2065.5 421.6L2066.0 421.6L2066.5 423.8L2067.0 424.1L2067.5 424.2L2068.0 424.4L2068.5 424.3L2069.0 423.2L2069.5 423.2L2070.0 424.1L2070.5 422.9L2071.0 422.5L2071.5 423.0L2072.0 421.1L2072.5 421.1L2073.0 424.0L2073.5 424.6L2074.0 424.4L2074.5 424.1L2075.0 424.4L2075.5 422.4L2076.0 422.4L2076.5 422.8L2077.0 421.2L2077.5 421.2L2078.0 422.3L2078.5 422.8L2079.0 423.0L2079.5 424.4L2080.0 424.4L2080.5 424.4L2081.0 424.5L2081.5 424.5L2082.0 420.9L2082.5 420.9L2083.0 422.0L2083.5 421.8L2084.0 422.0L2084.5 422.5L2085.0 421.6L2085.5 421.6L2086.0 424.2L2086.5 424.3L2087.0 424.3L2087.5 424.3L2088.0 420.6L2088.5 412.3L2089.0 412.3L2089.5 412.3L2090.0 420.4L2090.5 420.7L2091.0 420.9L2091.5 421.3L2092.0 421.7L2092.5 422.3L2093.0 422.6L2093.5 422.8L2094.0 423.3L2094.5 423.2L2095.0 423.2L2095.5 423.8L2096.0 423.3L2096.5 422.5L2097.0 422.9L2097.5 423.3L2098.0 421.6L2098.5 421.6L2099.0 424.3L2099.5 424.2L2100.0 424.3L2100.5 421.2L2101.0 421.0L2101.5 414.2L2102.0 414.2L2102.5 414.2L2103.0 422.6L2103.5 422.5L2104.0 423.2L2104.5 422.4L2105.0 422.4L2105.5 424.2L2106.0 424.2L2106.5 424.5L2107.0 424.5L2107.5 421.2L2108.0 421.2L2108.5 424.0L2109.0 422.7L2109.5 422.2L2110.0 422.9L2110.5 423.2L2111.0 421.3L2111.5 421.3L2112.0 424.2L2112.5 424.3L2113.0 424.3L2113.5 420.8L2114.0 420.8L2114.5 413.1L2115.0 413.1L2115.5 421.8L2116.0 422.3L2116.5 422.5L2117.0 420.9L2117.5 420.9L2118.0 423.9L2118.5 424.0L2119.0 424.3L2119.5 424.1L2120.0 420.7L2120.5 420.7L2121.0 412.8L2121.5 412.8L2122.0 421.8L2122.5 422.3L2123.0 422.7L2123.5 421.5L2124.0 421.5L2124.5 423.7L2125.0 424.1L2125.5 424.3L2126.0 424.4L2126.5 424.5L2127.0 423.1L2127.5 423.1L2128.0 422.4L2128.5 419.8L2129.0 421.1L2129.5 421.5L2130.0 421.9L2130.5 422.6L2131.0 424.3L2131.5 424.3L2132.0 424.6L2132.5 424.2L2133.0 421.0L2133.5 421.0L2134.0 413.6L2134.5 413.6L2135.0 421.7L2135.5 422.8L2136.0 422.7L2136.5 422.8L2137.0 422.8L2137.5 424.0L2138.0 424.1L2138.5 424.3L2139.0 424.4L2139.5 424.6L2140.0 423.4L2140.5 423.4L2141.0 422.8L2141.5 421.4L2142.0 421.4L2142.5 422.1L2143.0 421.8L2143.5 421.8L2144.0 423.1L2144.5 423.4L2145.0 423.5L2145.5 420.6L2146.0 420.6L2146.5 412.5L2147.0 412.5L2147.5 412.5L2148.0 421.7L2148.5 422.0L2149.0 422.7L2149.5 422.1L2150.0 422.1L2150.5 423.8L2151.0 424.1L2151.5 424.3L2152.0 420.5L2152.5 420.5L2153.0 412.3L2153.5 412.3L2154.0 412.3L2154.5 419.4L2155.0 420.5L2155.5 421.3L2156.0 421.4L2156.5 421.8L2157.0 422.2L2157.5 422.6L2158.0 423.2L2158.5 423.4L2159.0 420.9L2159.5 420.9L2160.0 423.9L2160.5 423.3L2161.0 422.5L2161.5 422.8L2162.0 423.4L2162.5 421.7L2163.0 421.7L2163.5 424.6L2164.0 424.2L2164.5 424.2L2165.0 420.8L2165.5 420.8L2166.0 413.1L2166.5 413.1L2167.0 421.5L2167.5 422.1L2168.0 422.8L2168.5 423.1L2169.0 423.2L2169.5 423.7L2170.0 424.0L2170.5 424.2L2171.0 424.4L2171.5 424.2L2172.0 423.3L2172.5 423.3L2173.0 424.6L2173.5 423.8L2174.0 422.7L2174.5 422.4L2175.0 421.6L2175.5 421.6L2176.0 423.0L2176.5 423.1L2177.0 423.5L2177.5 423.6L2178.0 423.9L2178.5 421.2L2179.0 421.2L2179.5 422.8L2180.0 421.9L2180.5 422.1L2181.0 422.7L2181.5 421.3L2182.0 421.3L2182.5 423.7L2183.0 423.7L2183.5 424.2L2184.0 424.5L2184.5 424.4L2185.0 421.0L2185.5 421.0L2185.5 425.0L2185.5 429.3L2185.0 428.7L2184.5 426.3L2184.0 426.3L2183.5 426.2L2183.0 426.9L2182.5 426.9L2182.0 429.3L2181.5 428.7L2181.0 428.3L2180.5 428.2L2180.0 428.3L2179.5 427.9L2179.0 429.4L2178.5 429.1L2178.0 426.7L2177.5 427.0L2177.0 427.1L2176.5 427.4L2176.0 427.5L2175.5 428.8L2175.0 429.4L2174.5 428.1L2174.0 427.8L2173.5 426.6L2173.0 426.0L2172.5 427.4L2172.0 427.2L2171.5 426.2L2171.0 426.1L2170.5 426.3L2170.0 426.5L2169.5 426.8L2169.0 427.5L2168.5 427.3L2168.0 427.8L2167.5 428.4L2167.0 429.1L2166.5 438.4L2166.0 438.0L2165.5 429.9L2165.0 429.6L2164.5 426.4L2164.0 426.2L2163.5 425.9L2163.0 428.6L2162.5 428.8L2162.0 427.3L2161.5 427.8L2161.0 427.9L2160.5 427.0L2160.0 426.5L2159.5 429.6L2159.0 429.9L2158.5 427.1L2158.0 427.3L2157.5 428.0L2157.0 428.5L2156.5 428.8L2156.0 429.2L2155.5 428.9L2155.0 430.4L2154.5 431.4L2154.0 437.0L2153.5 437.9L2153.0 438.3L2152.5 429.6L2152.0 430.3L2151.5 426.2L2151.0 426.3L2150.5 426.8L2150.0 428.0L2149.5 429.0L2149.0 427.7L2148.5 428.8L2148.0 428.4L2147.5 438.2L2147.0 439.2L2146.5 438.5L2146.0 430.0L2145.5 430.0L2145.0 427.0L2144.5 426.8L2144.0 427.1L2143.5 428.2L2143.0 428.4L2142.5 428.8L2142.0 429.8L2141.5 428.4L2141.0 427.6L2140.5 427.2L2140.0 426.8L2139.5 426.0L2139.0 426.4L2138.5 426.2L2138.0 426.3L2137.5 426.4L2137.0 427.4L2136.5 427.5L2136.0 428.1L2135.5 427.5L2135.0 428.5L2134.5 437.3L2134.0 435.8L2133.5 429.6L2133.0 429.3L2132.5 426.2L2132.0 426.4L2131.5 426.3L2131.0 426.3L2130.5 427.5L2130.0 429.2L2129.5 428.3L2129.0 429.9L2128.5 430.3L2128.0 428.6L2127.5 427.5L2127.0 427.3L2126.5 426.4L2126.0 426.4L2125.5 426.3L2125.0 426.4L2124.5 426.8L2124.0 428.7L2123.5 429.3L2123.0 427.7L2122.5 427.9L2122.0 428.5L2121.5 438.4L2121.0 436.9L2120.5 429.7L2120.0 429.4L2119.5 426.2L2119.0 426.3L2118.5 426.4L2118.0 426.5L2117.5 429.4L2117.0 430.1L2116.5 428.2L2116.0 428.5L2115.5 429.0L2115.0 437.5L2114.5 437.5L2114.0 429.8L2113.5 430.1L2113.0 426.2L2112.5 426.4L2112.0 426.0L2111.5 428.9L2111.0 429.0L2110.5 427.4L2110.0 427.7L2109.5 428.0L2109.0 427.5L2108.5 426.7L2108.0 429.4L2107.5 429.1L2107.0 425.9L2106.5 426.2L2106.0 426.4L2105.5 426.4L2105.0 428.3L2104.5 428.6L2104.0 427.3L2103.5 428.1L2103.0 427.9L2102.5 436.4L2102.0 437.5L2101.5 435.0L2101.0 429.3L2100.5 429.3L2100.0 426.4L2099.5 426.1L2099.0 426.0L2098.5 428.2L2098.0 428.5L2097.5 426.9L2097.0 427.5L2096.5 427.6L2096.0 427.1L2095.5 426.6L2095.0 427.6L2094.5 427.3L2094.0 427.1L2093.5 427.8L2093.0 428.1L2092.5 428.0L2092.0 428.5L2091.5 429.5L2091.0 429.5L2090.5 430.1L2090.0 429.8L2089.5 438.3L2089.0 439.5L2088.5 437.9L2088.0 429.5L2087.5 426.0L2087.0 426.0L2086.5 426.1L2086.0 426.0L2085.5 428.4L2085.0 428.5L2084.5 427.9L2084.0 428.9L2083.5 428.8L2083.0 428.7L2082.5 430.1L2082.0 430.1L2081.5 426.2L2081.0 425.9L2080.5 426.1L2080.0 426.3L2079.5 426.1L2079.0 427.6L2078.5 427.6L2078.0 428.5L2077.5 429.0L2077.0 428.9L2076.5 427.7L2076.0 428.0L2075.5 428.5L2075.0 426.4L2074.5 426.1L2074.0 426.2L2073.5 426.1L2073.0 426.4L2072.5 429.9L2072.0 429.5L2071.5 427.7L2071.0 428.3L2070.5 427.6L2070.0 426.2L2069.5 427.0L2069.0 427.0L2068.5 426.1L2068.0 426.3L2067.5 426.2L2067.0 426.4L2066.5 426.7L2066.0 428.7L2065.5 428.5L2065.0 427.6L2064.5 428.9L2064.0 428.4L2063.5 438.3L2063.0 438.3L2062.5 430.1L2062.0 429.5L2061.5 426.4L2061.0 426.0L2060.5 426.4L2060.0 429.6L2059.5 429.3L2059.0 427.5L2058.5 429.1L2058.0 430.1L2057.5 427.2L2057.0 426.4L2056.5 427.6L2056.0 427.3L2055.5 426.9L2055.0 427.1L2054.5 427.6L2054.0 427.9L2053.5 428.2L2053.0 428.5L2052.5 429.0L2052.0 429.9L2051.5 431.0L2051.0 437.1L2050.5 435.7L2050.0 438.2L2049.5 429.7L2049.0 429.7L2048.5 426.3L2048.0 426.2L2047.5 426.5L2047.0 427.6L2046.5 427.4L2046.0 427.5L2045.5 427.6L2045.0 429.6L2044.5 436.6L2044.0 437.1L2043.5 437.7L2043.0 430.1L2042.5 429.6L2042.0 426.1L2041.5 426.3L2041.0 426.0L2040.5 429.1L2040.0 429.3L2039.5 427.2L2039.0 428.1L2038.5 428.1L2038.0 426.7L2037.5 427.3L2037.0 428.0L2036.5 426.3L2036.0 426.1L2035.5 426.1L2035.0 426.4L2034.5 426.7L2034.0 428.2L2033.5 428.1L2033.0 427.8L2032.5 428.5L2032.0 429.2L2031.5 437.2L2031.0 438.5L2030.5 430.4L2030.0 430.0L2029.5 426.0L2029.0 426.7L2028.5 427.0L2028.0 427.6L2027.5 427.9L2027.0 428.1L2026.5 428.6L2026.0 428.8L2025.5 428.9L2025.0 427.5L2024.5 427.0L2024.0 427.3L2023.5 426.0L2023.0 426.0L2022.5 426.3L2022.0 426.5L2021.5 426.7L2021.0 428.2L2020.5 428.3L2020.0 428.4L2019.5 428.9L2019.0 429.0L2018.5 439.0L2018.0 437.8L2017.5 430.5L2017.0 430.2L2016.5 426.1L2016.0 426.1L2015.5 426.4L2015.0 426.5L2014.5 429.1L2014.0 430.2L2013.5 427.3L2013.0 427.9L2012.5 429.0L2012.0 435.7L2011.5 437.7L2011.0 429.5L2010.5 429.1L2010.0 426.3L2009.5 426.0L2009.0 426.0L2008.5 427.7L2008.0 427.7L2007.5 427.2L2007.0 428.0L2006.5 427.5L2006.0 427.6L2005.5 426.4L2005.0 428.7L2004.5 428.8L2004.0 426.4L2003.5 426.0L2003.0 426.1L2002.5 426.4L2002.0 426.9L2001.5 427.3L2001.0 426.3L2000.5 426.1L2000.0 428.0L1999.5 428.2L1999.0 427.3L1998.5 428.3L1998.0 428.1L1997.5 425.9L1997.0 426.4L1996.5 426.2L1996.0 426.2L1995.5 427.5L1995.0 427.8L1994.5 428.5L1994.0 429.4L1993.5 430.3L1993.0 427.6L1992.5 426.5L1992.0 427.9L1991.5 427.8L1991.0 426.8L1990.5 427.2L1990.0 427.4L1989.5 428.1L1989.0 428.7L1988.5 428.9L1988.0 429.3L1987.5 429.3L1987.0 429.4L1986.5 437.1Z" fill="#cfe0fb"/></svg>
<svg style="left:0;top:0" width="2185" height="793" viewBox="0 0 2185 793"><path d="M628 409.500 H645.500 V441 Z" fill="#8aa0b8" opacity=".55" stroke="#cfd8e4" stroke-width=".8"/></svg>
<div class="rg" style="left:337.5px;top:444px;width:1852.5px;height:51px;border-radius:3.500px 0 0 3.500px;background:linear-gradient(#1a882c 0,#1a882c 22px,#187b29 27px,#187b29 100%)"></div>
<div class="rl" style="left:343.3px;top:447px;color:#d8edd8"><svg class="ud" width="6" height="11" viewBox="0 0 6 11"><path d="M3 .8 L5.700 4.500 H.3Z M3 10.200 L5.700 6.500 H.3Z" fill="currentColor"/></svg>TR-808 Hip Hop Beat 03</div>
<svg style="left:0;top:0" width="2185" height="793" viewBox="0 0 2185 793" fill="#0e0e0e"><path d="M436.5 443.5 Q439.7 444.7 440.5 448.6 Q441.3 444.7 444.5 443.5Z"/><path d="M436.5 495.5 Q439.7 494.3 440.5 490.4 Q441.3 494.3 444.5 495.5Z"/><rect x="440.0" y="447" width="1" height="45" fill="#000" opacity="0"/><path d="M539.5 443.5 Q542.7 444.7 543.5 448.6 Q544.3 444.7 547.5 443.5Z"/><path d="M539.5 495.5 Q542.7 494.3 543.5 490.4 Q544.3 494.3 547.5 495.5Z"/><rect x="543.0" y="447" width="1" height="45" fill="#000" opacity="0"/><path d="M642.5 443.5 Q645.7 444.7 646.5 448.6 Q647.3 444.7 650.5 443.5Z"/><path d="M642.5 495.5 Q645.7 494.3 646.5 490.4 Q647.3 494.3 650.5 495.5Z"/><rect x="646.0" y="447" width="1" height="45" fill="#000" opacity="0"/><path d="M745.5 443.5 Q748.7 444.7 749.5 448.6 Q750.3 444.7 753.5 443.5Z"/><path d="M745.5 495.5 Q748.7 494.3 749.5 490.4 Q750.3 494.3 753.5 495.5Z"/><rect x="749.0" y="447" width="1" height="45" fill="#000" opacity="0"/><path d="M848.5 443.5 Q851.7 444.7 852.5 448.6 Q853.3 444.7 856.5 443.5Z"/><path d="M848.5 495.5 Q851.7 494.3 852.5 490.4 Q853.3 494.3 856.5 495.5Z"/><rect x="852.0" y="447" width="1" height="45" fill="#000" opacity="0"/><path d="M951.5 443.5 Q954.7 444.7 955.5 448.6 Q956.3 444.7 959.5 443.5Z"/><path d="M951.5 495.5 Q954.7 494.3 955.5 490.4 Q956.3 494.3 959.5 495.5Z"/><rect x="955.0" y="447" width="1" height="45" fill="#000" opacity="0"/><path d="M1054.5 443.5 Q1057.7 444.7 1058.5 448.6 Q1059.3 444.7 1062.5 443.5Z"/><path d="M1054.5 495.5 Q1057.7 494.3 1058.5 490.4 Q1059.3 494.3 1062.5 495.5Z"/><rect x="1058.0" y="447" width="1" height="45" fill="#000" opacity="0"/><path d="M1157.5 443.5 Q1160.7 444.7 1161.5 448.6 Q1162.3 444.7 1165.5 443.5Z"/><path d="M1157.5 495.5 Q1160.7 494.3 1161.5 490.4 Q1162.3 494.3 1165.5 495.5Z"/><rect x="1161.0" y="447" width="1" height="45" fill="#000" opacity="0"/><path d="M1260.5 443.5 Q1263.7 444.7 1264.5 448.6 Q1265.3 444.7 1268.5 443.5Z"/><path d="M1260.5 495.5 Q1263.7 494.3 1264.5 490.4 Q1265.3 494.3 1268.5 495.5Z"/><rect x="1264.0" y="447" width="1" height="45" fill="#000" opacity="0"/><path d="M1363.5 443.5 Q1366.7 444.7 1367.5 448.6 Q1368.3 444.7 1371.5 443.5Z"/><path d="M1363.5 495.5 Q1366.7 494.3 1367.5 490.4 Q1368.3 494.3 1371.5 495.5Z"/><rect x="1367.0" y="447" width="1" height="45" fill="#000" opacity="0"/><path d="M1466.5 443.5 Q1469.7 444.7 1470.5 448.6 Q1471.3 444.7 1474.5 443.5Z"/><path d="M1466.5 495.5 Q1469.7 494.3 1470.5 490.4 Q1471.3 494.3 1474.5 495.5Z"/><rect x="1470.0" y="447" width="1" height="45" fill="#000" opacity="0"/><path d="M1569.5 443.5 Q1572.7 444.7 1573.5 448.6 Q1574.3 444.7 1577.5 443.5Z"/><path d="M1569.5 495.5 Q1572.7 494.3 1573.5 490.4 Q1574.3 494.3 1577.5 495.5Z"/><rect x="1573.0" y="447" width="1" height="45" fill="#000" opacity="0"/><path d="M1672.5 443.5 Q1675.7 444.7 1676.5 448.6 Q1677.3 444.7 1680.5 443.5Z"/><path d="M1672.5 495.5 Q1675.7 494.3 1676.5 490.4 Q1677.3 494.3 1680.5 495.5Z"/><rect x="1676.0" y="447" width="1" height="45" fill="#000" opacity="0"/><path d="M1775.5 443.5 Q1778.7 444.7 1779.5 448.6 Q1780.3 444.7 1783.5 443.5Z"/><path d="M1775.5 495.5 Q1778.7 494.3 1779.5 490.4 Q1780.3 494.3 1783.5 495.5Z"/><rect x="1779.0" y="447" width="1" height="45" fill="#000" opacity="0"/><path d="M1878.5 443.5 Q1881.7 444.7 1882.5 448.6 Q1883.3 444.7 1886.5 443.5Z"/><path d="M1878.5 495.5 Q1881.7 494.3 1882.5 490.4 Q1883.3 494.3 1886.5 495.5Z"/><rect x="1882.0" y="447" width="1" height="45" fill="#000" opacity="0"/><path d="M1981.5 443.5 Q1984.7 444.7 1985.5 448.6 Q1986.3 444.7 1989.5 443.5Z"/><path d="M1981.5 495.5 Q1984.7 494.3 1985.5 490.4 Q1986.3 494.3 1989.5 495.5Z"/><rect x="1985.0" y="447" width="1" height="45" fill="#000" opacity="0"/><path d="M2084.5 443.5 Q2087.7 444.7 2088.5 448.6 Q2089.3 444.7 2092.5 443.5Z"/><path d="M2084.5 495.5 Q2087.7 494.3 2088.5 490.4 Q2089.3 494.3 2092.5 495.5Z"/><rect x="2088.0" y="447" width="1" height="45" fill="#000" opacity="0"/></svg>
<svg style="left:0;top:0" width="2185" height="793" viewBox="0 0 2185 793" shape-rendering="crispEdges" fill="#c6e8c8" opacity="1"><rect x="338.6" y="485.0" width="3.0" height="2"/><rect x="344.5" y="485.0" width="3.0" height="2"/><rect x="350.4" y="485.0" width="3.0" height="2"/><rect x="356.2" y="485.0" width="3.0" height="2"/><rect x="363.3" y="485.0" width="13.6" height="3"/><rect x="376.9" y="485.0" width="2.0" height="2"/><rect x="382.1" y="485.0" width="3.0" height="2"/><rect x="395.2" y="485.0" width="3.0" height="2"/><rect x="401.4" y="485.0" width="4.6" height="2"/><rect x="408.4" y="485.0" width="3.4" height="2"/><rect x="414.0" y="485.0" width="14.2" height="3"/><rect x="428.2" y="485.0" width="2.0" height="2"/><rect x="434.4" y="485.0" width="3.0" height="2"/></svg>
<svg style="left:0;top:0" width="2185" height="793" viewBox="0 0 2185 793" shape-rendering="crispEdges" fill="#c6e8c8" opacity="0.33"><rect x="441.6" y="485.0" width="3.0" height="2"/><rect x="447.5" y="485.0" width="3.0" height="2"/><rect x="453.4" y="485.0" width="3.0" height="2"/><rect x="459.2" y="485.0" width="3.0" height="2"/><rect x="466.3" y="485.0" width="13.6" height="3"/><rect x="479.9" y="485.0" width="2.0" height="2"/><rect x="485.1" y="485.0" width="3.0" height="2"/><rect x="498.2" y="485.0" width="3.0" height="2"/><rect x="504.4" y="485.0" width="4.6" height="2"/><rect x="511.4" y="485.0" width="3.4" height="2"/><rect x="517.0" y="485.0" width="14.2" height="3"/><rect x="531.2" y="485.0" width="2.0" height="2"/><rect x="537.4" y="485.0" width="3.0" height="2"/><rect x="544.6" y="485.0" width="3.0" height="2"/><rect x="550.5" y="485.0" width="3.0" height="2"/><rect x="556.4" y="485.0" width="3.0" height="2"/><rect x="562.2" y="485.0" width="3.0" height="2"/><rect x="569.3" y="485.0" width="13.6" height="3"/><rect x="582.9" y="485.0" width="2.0" height="2"/><rect x="588.1" y="485.0" width="3.0" height="2"/><rect x="601.2" y="485.0" width="3.0" height="2"/><rect x="607.4" y="485.0" width="4.6" height="2"/><rect x="614.4" y="485.0" width="3.4" height="2"/><rect x="620.0" y="485.0" width="14.2" height="3"/><rect x="634.2" y="485.0" width="2.0" height="2"/><rect x="640.4" y="485.0" width="3.0" height="2"/><rect x="647.6" y="485.0" width="3.0" height="2"/><rect x="653.5" y="485.0" width="3.0" height="2"/><rect x="659.4" y="485.0" width="3.0" height="2"/><rect x="665.2" y="485.0" width="3.0" height="2"/><rect x="672.3" y="485.0" width="13.6" height="3"/><rect x="685.9" y="485.0" width="2.0" height="2"/><rect x="691.1" y="485.0" width="3.0" height="2"/><rect x="704.2" y="485.0" width="3.0" height="2"/><rect x="710.4" y="485.0" width="4.6" height="2"/><rect x="717.4" y="485.0" width="3.4" height="2"/><rect x="723.0" y="485.0" width="14.2" height="3"/><rect x="737.2" y="485.0" width="2.0" height="2"/><rect x="743.4" y="485.0" width="3.0" height="2"/><rect x="750.6" y="485.0" width="3.0" height="2"/><rect x="756.5" y="485.0" width="3.0" height="2"/><rect x="762.4" y="485.0" width="3.0" height="2"/><rect x="768.2" y="485.0" width="3.0" height="2"/><rect x="775.3" y="485.0" width="13.6" height="3"/><rect x="788.9" y="485.0" width="2.0" height="2"/><rect x="794.1" y="485.0" width="3.0" height="2"/><rect x="807.2" y="485.0" width="3.0" height="2"/><rect x="813.4" y="485.0" width="4.6" height="2"/><rect x="820.4" y="485.0" width="3.4" height="2"/><rect x="826.0" y="485.0" width="14.2" height="3"/><rect x="840.2" y="485.0" width="2.0" height="2"/><rect x="846.4" y="485.0" width="3.0" height="2"/><rect x="853.6" y="485.0" width="3.0" height="2"/><rect x="859.5" y="485.0" width="3.0" height="2"/><rect x="865.4" y="485.0" width="3.0" height="2"/><rect x="871.2" y="485.0" width="3.0" height="2"/><rect x="878.3" y="485.0" width="13.6" height="3"/><rect x="891.9" y="485.0" width="2.0" height="2"/><rect x="897.1" y="485.0" width="3.0" height="2"/><rect x="910.2" y="485.0" width="3.0" height="2"/><rect x="916.4" y="485.0" width="4.6" height="2"/><rect x="923.4" y="485.0" width="3.4" height="2"/><rect x="929.0" y="485.0" width="14.2" height="3"/><rect x="943.2" y="485.0" width="2.0" height="2"/><rect x="949.4" y="485.0" width="3.0" height="2"/><rect x="956.6" y="485.0" width="3.0" height="2"/><rect x="962.5" y="485.0" width="3.0" height="2"/><rect x="968.4" y="485.0" width="3.0" height="2"/><rect x="974.2" y="485.0" width="3.0" height="2"/><rect x="981.3" y="485.0" width="13.6" height="3"/><rect x="994.9" y="485.0" width="2.0" height="2"/><rect x="1000.1" y="485.0" width="3.0" height="2"/><rect x="1013.2" y="485.0" width="3.0" height="2"/><rect x="1019.4" y="485.0" width="4.6" height="2"/><rect x="1026.4" y="485.0" width="3.4" height="2"/><rect x="1032.0" y="485.0" width="14.2" height="3"/><rect x="1046.2" y="485.0" width="2.0" height="2"/><rect x="1052.4" y="485.0" width="3.0" height="2"/><rect x="1059.6" y="485.0" width="3.0" height="2"/><rect x="1065.5" y="485.0" width="3.0" height="2"/><rect x="1071.4" y="485.0" width="3.0" height="2"/><rect x="1077.2" y="485.0" width="3.0" height="2"/><rect x="1084.3" y="485.0" width="13.6" height="3"/><rect x="1097.9" y="485.0" width="2.0" height="2"/><rect x="1103.1" y="485.0" width="3.0" height="2"/><rect x="1116.2" y="485.0" width="3.0" height="2"/><rect x="1122.4" y="485.0" width="4.6" height="2"/><rect x="1129.4" y="485.0" width="3.4" height="2"/><rect x="1135.0" y="485.0" width="14.2" height="3"/><rect x="1149.2" y="485.0" width="2.0" height="2"/><rect x="1155.4" y="485.0" width="3.0" height="2"/><rect x="1162.6" y="485.0" width="3.0" height="2"/><rect x="1168.5" y="485.0" width="3.0" height="2"/><rect x="1174.4" y="485.0" width="3.0" height="2"/><rect x="1180.2" y="485.0" width="3.0" height="2"/><rect x="1187.3" y="485.0" width="13.6" height="3"/><rect x="1200.9" y="485.0" width="2.0" height="2"/><rect x="1206.1" y="485.0" width="3.0" height="2"/><rect x="1219.2" y="485.0" width="3.0" height="2"/><rect x="1225.4" y="485.0" width="4.6" height="2"/><rect x="1232.4" y="485.0" width="3.4" height="2"/><rect x="1238.0" y="485.0" width="14.2" height="3"/><rect x="1252.2" y="485.0" width="2.0" height="2"/><rect x="1258.4" y="485.0" width="3.0" height="2"/><rect x="1265.6" y="485.0" width="3.0" height="2"/><rect x="1271.5" y="485.0" width="3.0" height="2"/><rect x="1277.4" y="485.0" width="3.0" height="2"/><rect x="1283.2" y="485.0" width="3.0" height="2"/><rect x="1290.3" y="485.0" width="13.6" height="3"/><rect x="1303.9" y="485.0" width="2.0" height="2"/><rect x="1309.1" y="485.0" width="3.0" height="2"/><rect x="1322.2" y="485.0" width="3.0" height="2"/><rect x="1328.4" y="485.0" width="4.6" height="2"/><rect x="1335.4" y="485.0" width="3.4" height="2"/><rect x="1341.0" y="485.0" width="14.2" height="3"/><rect x="1355.2" y="485.0" width="2.0" height="2"/><rect x="1361.4" y="485.0" width="3.0" height="2"/><rect x="1368.6" y="485.0" width="3.0" height="2"/><rect x="1374.5" y="485.0" width="3.0" height="2"/><rect x="1380.4" y="485.0" width="3.0" height="2"/><rect x="1386.2" y="485.0" width="3.0" height="2"/><rect x="1393.3" y="485.0" width="13.6" height="3"/><rect x="1406.9" y="485.0" width="2.0" height="2"/><rect x="1412.1" y="485.0" width="3.0" height="2"/><rect x="1425.2" y="485.0" width="3.0" height="2"/><rect x="1431.4" y="485.0" width="4.6" height="2"/><rect x="1438.4" y="485.0" width="3.4" height="2"/><rect x="1444.0" y="485.0" width="14.2" height="3"/><rect x="1458.2" y="485.0" width="2.0" height="2"/><rect x="1464.4" y="485.0" width="3.0" height="2"/><rect x="1471.6" y="485.0" width="3.0" height="2"/><rect x="1477.5" y="485.0" width="3.0" height="2"/><rect x="1483.4" y="485.0" width="3.0" height="2"/><rect x="1489.2" y="485.0" width="3.0" height="2"/><rect x="1496.3" y="485.0" width="13.6" height="3"/><rect x="1509.9" y="485.0" width="2.0" height="2"/><rect x="1515.1" y="485.0" width="3.0" height="2"/><rect x="1528.2" y="485.0" width="3.0" height="2"/><rect x="1534.4" y="485.0" width="4.6" height="2"/><rect x="1541.4" y="485.0" width="3.4" height="2"/><rect x="1547.0" y="485.0" width="14.2" height="3"/><rect x="1561.2" y="485.0" width="2.0" height="2"/><rect x="1567.4" y="485.0" width="3.0" height="2"/><rect x="1574.6" y="485.0" width="3.0" height="2"/><rect x="1580.5" y="485.0" width="3.0" height="2"/><rect x="1586.4" y="485.0" width="3.0" height="2"/><rect x="1592.2" y="485.0" width="3.0" height="2"/><rect x="1599.3" y="485.0" width="13.6" height="3"/><rect x="1612.9" y="485.0" width="2.0" height="2"/><rect x="1618.1" y="485.0" width="3.0" height="2"/><rect x="1631.2" y="485.0" width="3.0" height="2"/><rect x="1637.4" y="485.0" width="4.6" height="2"/><rect x="1644.4" y="485.0" width="3.4" height="2"/><rect x="1650.0" y="485.0" width="14.2" height="3"/><rect x="1664.2" y="485.0" width="2.0" height="2"/><rect x="1670.4" y="485.0" width="3.0" height="2"/><rect x="1677.6" y="485.0" width="3.0" height="2"/><rect x="1683.5" y="485.0" width="3.0" height="2"/><rect x="1689.4" y="485.0" width="3.0" height="2"/><rect x="1695.2" y="485.0" width="3.0" height="2"/><rect x="1702.3" y="485.0" width="13.6" height="3"/><rect x="1715.9" y="485.0" width="2.0" height="2"/><rect x="1721.1" y="485.0" width="3.0" height="2"/><rect x="1734.2" y="485.0" width="3.0" height="2"/><rect x="1740.4" y="485.0" width="4.6" height="2"/><rect x="1747.4" y="485.0" width="3.4" height="2"/><rect x="1753.0" y="485.0" width="14.2" height="3"/><rect x="1767.2" y="485.0" width="2.0" height="2"/><rect x="1773.4" y="485.0" width="3.0" height="2"/><rect x="1780.6" y="485.0" width="3.0" height="2"/><rect x="1786.5" y="485.0" width="3.0" height="2"/><rect x="1792.4" y="485.0" width="3.0" height="2"/><rect x="1798.2" y="485.0" width="3.0" height="2"/><rect x="1805.3" y="485.0" width="13.6" height="3"/><rect x="1818.9" y="485.0" width="2.0" height="2"/><rect x="1824.1" y="485.0" width="3.0" height="2"/><rect x="1837.2" y="485.0" width="3.0" height="2"/><rect x="1843.4" y="485.0" width="4.6" height="2"/><rect x="1850.4" y="485.0" width="3.4" height="2"/><rect x="1856.0" y="485.0" width="14.2" height="3"/><rect x="1870.2" y="485.0" width="2.0" height="2"/><rect x="1876.4" y="485.0" width="3.0" height="2"/><rect x="1883.6" y="485.0" width="3.0" height="2"/><rect x="1889.5" y="485.0" width="3.0" height="2"/><rect x="1895.4" y="485.0" width="3.0" height="2"/><rect x="1901.2" y="485.0" width="3.0" height="2"/><rect x="1908.3" y="485.0" width="13.6" height="3"/><rect x="1921.9" y="485.0" width="2.0" height="2"/><rect x="1927.1" y="485.0" width="3.0" height="2"/><rect x="1940.2" y="485.0" width="3.0" height="2"/><rect x="1946.4" y="485.0" width="4.6" height="2"/><rect x="1953.4" y="485.0" width="3.4" height="2"/><rect x="1959.0" y="485.0" width="14.2" height="3"/><rect x="1973.2" y="485.0" width="2.0" height="2"/><rect x="1979.4" y="485.0" width="3.0" height="2"/><rect x="1986.6" y="485.0" width="3.0" height="2"/><rect x="1992.5" y="485.0" width="3.0" height="2"/><rect x="1998.4" y="485.0" width="3.0" height="2"/><rect x="2004.2" y="485.0" width="3.0" height="2"/><rect x="2011.3" y="485.0" width="13.6" height="3"/><rect x="2024.9" y="485.0" width="2.0" height="2"/><rect x="2030.1" y="485.0" width="3.0" height="2"/><rect x="2043.2" y="485.0" width="3.0" height="2"/><rect x="2049.4" y="485.0" width="4.6" height="2"/><rect x="2056.4" y="485.0" width="3.4" height="2"/><rect x="2062.0" y="485.0" width="14.2" height="3"/><rect x="2076.2" y="485.0" width="2.0" height="2"/><rect x="2082.4" y="485.0" width="3.0" height="2"/><rect x="2089.6" y="485.0" width="3.0" height="2"/><rect x="2095.5" y="485.0" width="3.0" height="2"/><rect x="2101.4" y="485.0" width="3.0" height="2"/><rect x="2107.2" y="485.0" width="3.0" height="2"/><rect x="2114.3" y="485.0" width="13.6" height="3"/><rect x="2127.9" y="485.0" width="2.0" height="2"/><rect x="2133.1" y="485.0" width="3.0" height="2"/><rect x="2146.2" y="485.0" width="3.0" height="2"/><rect x="2152.4" y="485.0" width="4.6" height="2"/><rect x="2159.4" y="485.0" width="3.4" height="2"/><rect x="2165.0" y="485.0" width="14.2" height="3"/><rect x="2179.2" y="485.0" width="2.0" height="2"/></svg>
<div class="rg" style="left:337.5px;top:498px;width:1852.5px;height:51px;border-radius:3.500px 0 0 3.500px;background:linear-gradient(#1a882c 0,#1a882c 22px,#187b29 27px,#187b29 100%)"></div>
<div class="rl" style="left:343.3px;top:501px;color:#d8edd8">16-06</div>
<svg style="left:0;top:0" width="2185" height="793" viewBox="0 0 2185 793" fill="#0e0e0e"><path d="M745.5 497.5 Q748.7 498.7 749.5 502.6 Q750.3 498.7 753.5 497.5Z"/><path d="M745.5 549.5 Q748.7 548.3 749.5 544.4 Q750.3 548.3 753.5 549.5Z"/><rect x="749.0" y="501" width="1" height="45" fill="#000" opacity="0"/><path d="M1157.5 497.5 Q1160.7 498.7 1161.5 502.6 Q1162.3 498.7 1165.5 497.5Z"/><path d="M1157.5 549.5 Q1160.7 548.3 1161.5 544.4 Q1162.3 548.3 1165.5 549.5Z"/><rect x="1161.0" y="501" width="1" height="45" fill="#000" opacity="0"/><path d="M1569.5 497.5 Q1572.7 498.7 1573.5 502.6 Q1574.3 498.7 1577.5 497.5Z"/><path d="M1569.5 549.5 Q1572.7 548.3 1573.5 544.4 Q1574.3 548.3 1577.5 549.5Z"/><rect x="1573.0" y="501" width="1" height="45" fill="#000" opacity="0"/><path d="M1981.5 497.5 Q1984.7 498.7 1985.5 502.6 Q1986.3 498.7 1989.5 497.5Z"/><path d="M1981.5 549.5 Q1984.7 548.3 1985.5 544.4 Q1986.3 548.3 1989.5 549.5Z"/><rect x="1985.0" y="501" width="1" height="45" fill="#000" opacity="0"/></svg>
<svg style="left:0;top:0" width="2185" height="793" viewBox="0 0 2185 793" shape-rendering="crispEdges" fill="#c6e8c8" opacity="1"><rect x="338.0" y="537.0" width="11.7" height="2"/><rect x="355.7" y="537.0" width="2.3" height="2"/><rect x="361.4" y="537.0" width="17.4" height="2"/><rect x="394.8" y="537.0" width="15.0" height="2"/><rect x="412.5" y="537.0" width="2.3" height="2"/><rect x="417.2" y="537.0" width="19.4" height="2"/><rect x="439.2" y="537.0" width="12.4" height="2"/><rect x="459.3" y="537.0" width="2.3" height="2"/><rect x="465.0" y="537.0" width="12.7" height="2"/><rect x="497.7" y="537.0" width="5.7" height="2"/><rect x="510.1" y="537.0" width="2.3" height="2"/><rect x="515.7" y="537.0" width="14.4" height="2"/><rect x="532.4" y="537.0" width="6.0" height="2"/><rect x="540.8" y="537.0" width="19.4" height="2"/><rect x="562.5" y="537.0" width="2.0" height="2"/><rect x="567.5" y="537.0" width="11.0" height="2"/><rect x="587.9" y="537.0" width="7.3" height="2"/><rect x="598.6" y="537.0" width="15.0" height="2"/><rect x="616.0" y="537.0" width="2.7" height="2"/><rect x="621.3" y="537.0" width="2.3" height="2"/><rect x="626.0" y="537.0" width="6.0" height="2"/><rect x="646.0" y="537.0" width="10.4" height="2"/><rect x="664.7" y="537.0" width="4.0" height="2"/><rect x="670.4" y="537.0" width="13.4" height="2"/><rect x="686.1" y="537.0" width="2.7" height="2"/><rect x="691.1" y="537.0" width="19.4" height="2"/><rect x="712.8" y="537.0" width="4.3" height="2"/><rect x="719.5" y="537.0" width="8.7" height="2"/></svg>
<svg style="left:0;top:0" width="2185" height="793" viewBox="0 0 2185 793" shape-rendering="crispEdges" fill="#c6e8c8" opacity="0.38"><rect x="750.0" y="537.0" width="11.7" height="2"/><rect x="767.7" y="537.0" width="2.3" height="2"/><rect x="773.4" y="537.0" width="17.4" height="2"/><rect x="806.8" y="537.0" width="15.0" height="2"/><rect x="824.5" y="537.0" width="2.3" height="2"/><rect x="829.2" y="537.0" width="19.4" height="2"/><rect x="851.2" y="537.0" width="12.4" height="2"/><rect x="871.3" y="537.0" width="2.3" height="2"/><rect x="877.0" y="537.0" width="12.7" height="2"/><rect x="909.7" y="537.0" width="5.7" height="2"/><rect x="922.1" y="537.0" width="2.3" height="2"/><rect x="927.7" y="537.0" width="14.4" height="2"/><rect x="944.4" y="537.0" width="6.0" height="2"/><rect x="952.8" y="537.0" width="19.4" height="2"/><rect x="974.5" y="537.0" width="2.0" height="2"/><rect x="979.5" y="537.0" width="11.0" height="2"/><rect x="999.9" y="537.0" width="7.3" height="2"/><rect x="1010.6" y="537.0" width="15.0" height="2"/><rect x="1028.0" y="537.0" width="2.7" height="2"/><rect x="1033.3" y="537.0" width="2.3" height="2"/><rect x="1038.0" y="537.0" width="6.0" height="2"/><rect x="1058.0" y="537.0" width="10.4" height="2"/><rect x="1076.7" y="537.0" width="4.0" height="2"/><rect x="1082.4" y="537.0" width="13.4" height="2"/><rect x="1098.1" y="537.0" width="2.7" height="2"/><rect x="1103.1" y="537.0" width="19.4" height="2"/><rect x="1124.8" y="537.0" width="4.3" height="2"/><rect x="1131.5" y="537.0" width="8.7" height="2"/><rect x="1162.0" y="537.0" width="11.7" height="2"/><rect x="1179.7" y="537.0" width="2.3" height="2"/><rect x="1185.4" y="537.0" width="17.4" height="2"/><rect x="1218.8" y="537.0" width="15.0" height="2"/><rect x="1236.5" y="537.0" width="2.3" height="2"/><rect x="1241.2" y="537.0" width="19.4" height="2"/><rect x="1263.2" y="537.0" width="12.4" height="2"/><rect x="1283.3" y="537.0" width="2.3" height="2"/><rect x="1289.0" y="537.0" width="12.7" height="2"/><rect x="1321.7" y="537.0" width="5.7" height="2"/><rect x="1334.1" y="537.0" width="2.3" height="2"/><rect x="1339.7" y="537.0" width="14.4" height="2"/><rect x="1356.4" y="537.0" width="6.0" height="2"/><rect x="1364.8" y="537.0" width="19.4" height="2"/><rect x="1386.5" y="537.0" width="2.0" height="2"/><rect x="1391.5" y="537.0" width="11.0" height="2"/><rect x="1411.9" y="537.0" width="7.3" height="2"/><rect x="1422.6" y="537.0" width="15.0" height="2"/><rect x="1440.0" y="537.0" width="2.7" height="2"/><rect x="1445.3" y="537.0" width="2.3" height="2"/><rect x="1450.0" y="537.0" width="6.0" height="2"/><rect x="1470.0" y="537.0" width="10.4" height="2"/><rect x="1488.7" y="537.0" width="4.0" height="2"/><rect x="1494.4" y="537.0" width="13.4" height="2"/><rect x="1510.1" y="537.0" width="2.7" height="2"/><rect x="1515.1" y="537.0" width="19.4" height="2"/><rect x="1536.8" y="537.0" width="4.3" height="2"/><rect x="1543.5" y="537.0" width="8.7" height="2"/><rect x="1574.0" y="537.0" width="11.7" height="2"/><rect x="1591.7" y="537.0" width="2.3" height="2"/><rect x="1597.4" y="537.0" width="17.4" height="2"/><rect x="1630.8" y="537.0" width="15.0" height="2"/><rect x="1648.5" y="537.0" width="2.3" height="2"/><rect x="1653.2" y="537.0" width="19.4" height="2"/><rect x="1675.2" y="537.0" width="12.4" height="2"/><rect x="1695.3" y="537.0" width="2.3" height="2"/><rect x="1701.0" y="537.0" width="12.7" height="2"/><rect x="1733.7" y="537.0" width="5.7" height="2"/><rect x="1746.1" y="537.0" width="2.3" height="2"/><rect x="1751.7" y="537.0" width="14.4" height="2"/><rect x="1768.4" y="537.0" width="6.0" height="2"/><rect x="1776.8" y="537.0" width="19.4" height="2"/><rect x="1798.5" y="537.0" width="2.0" height="2"/><rect x="1803.5" y="537.0" width="11.0" height="2"/><rect x="1823.9" y="537.0" width="7.3" height="2"/><rect x="1834.6" y="537.0" width="15.0" height="2"/><rect x="1852.0" y="537.0" width="2.7" height="2"/><rect x="1857.3" y="537.0" width="2.3" height="2"/><rect x="1862.0" y="537.0" width="6.0" height="2"/><rect x="1882.0" y="537.0" width="10.4" height="2"/><rect x="1900.7" y="537.0" width="4.0" height="2"/><rect x="1906.4" y="537.0" width="13.4" height="2"/><rect x="1922.1" y="537.0" width="2.7" height="2"/><rect x="1927.1" y="537.0" width="19.4" height="2"/><rect x="1948.8" y="537.0" width="4.3" height="2"/><rect x="1955.5" y="537.0" width="8.7" height="2"/><rect x="1986.0" y="537.0" width="11.7" height="2"/><rect x="2003.7" y="537.0" width="2.3" height="2"/><rect x="2009.4" y="537.0" width="17.4" height="2"/><rect x="2042.8" y="537.0" width="15.0" height="2"/><rect x="2060.5" y="537.0" width="2.3" height="2"/><rect x="2065.2" y="537.0" width="19.4" height="2"/><rect x="2087.2" y="537.0" width="12.4" height="2"/><rect x="2107.3" y="537.0" width="2.3" height="2"/><rect x="2113.0" y="537.0" width="12.7" height="2"/><rect x="2145.7" y="537.0" width="5.7" height="2"/><rect x="2158.1" y="537.0" width="2.3" height="2"/><rect x="2163.7" y="537.0" width="14.4" height="2"/><rect x="2180.4" y="537.0" width="6.0" height="2"/></svg>
<div class="rg" style="left:749.5px;top:552px;width:1440.5px;height:51px;border-radius:3.500px 0 0 3.500px;background:linear-gradient(#b5300c 0,#b5300c 44px,#a42a0b 46px,#a42a0b 100%)"></div>
<div class="rl" style="left:755.3px;top:555px;color:#ffe8e0">129</div>
<svg style="left:0;top:0" width="2185" height="793" viewBox="0 0 2185 793" fill="#0e0e0e"><path d="M951.5 551.5 Q954.7 552.7 955.5 556.6 Q956.3 552.7 959.5 551.5Z"/><path d="M951.5 603.5 Q954.7 602.3 955.5 598.4 Q956.3 602.3 959.5 603.5Z"/><rect x="955.0" y="555" width="1" height="45" fill="#000" opacity="0"/><path d="M1157.5 551.5 Q1160.7 552.7 1161.5 556.6 Q1162.3 552.7 1165.5 551.5Z"/><path d="M1157.5 603.5 Q1160.7 602.3 1161.5 598.4 Q1162.3 602.3 1165.5 603.5Z"/><rect x="1161.0" y="555" width="1" height="45" fill="#000" opacity="0"/><path d="M1363.5 551.5 Q1366.7 552.7 1367.5 556.6 Q1368.3 552.7 1371.5 551.5Z"/><path d="M1363.5 603.5 Q1366.7 602.3 1367.5 598.4 Q1368.3 602.3 1371.5 603.5Z"/><rect x="1367.0" y="555" width="1" height="45" fill="#000" opacity="0"/><path d="M1569.5 551.5 Q1572.7 552.7 1573.5 556.6 Q1574.3 552.7 1577.5 551.5Z"/><path d="M1569.5 603.5 Q1572.7 602.3 1573.5 598.4 Q1574.3 602.3 1577.5 603.5Z"/><rect x="1573.0" y="555" width="1" height="45" fill="#000" opacity="0"/><path d="M1775.5 551.5 Q1778.7 552.7 1779.5 556.6 Q1780.3 552.7 1783.5 551.5Z"/><path d="M1775.5 603.5 Q1778.7 602.3 1779.5 598.4 Q1780.3 602.3 1783.5 603.5Z"/><rect x="1779.0" y="555" width="1" height="45" fill="#000" opacity="0"/><path d="M1981.5 551.5 Q1984.7 552.7 1985.5 556.6 Q1986.3 552.7 1989.5 551.5Z"/><path d="M1981.5 603.5 Q1984.7 602.3 1985.5 598.4 Q1986.3 602.3 1989.5 603.5Z"/><rect x="1985.0" y="555" width="1" height="45" fill="#000" opacity="0"/></svg>
<svg style="left:0;top:0" width="2185" height="793" viewBox="0 0 2185 793" shape-rendering="crispEdges" fill="#5a1400" opacity=".4"><rect x="759.9" y="578.9" width="3" height="23.4"/><rect x="765.2" y="588.2" width="3" height="14.1"/><rect x="770.1" y="594.0" width="3" height="8.3"/><rect x="786.1" y="591.0" width="3" height="11.3"/><rect x="791.1" y="574.9" width="3" height="27.4"/><rect x="796.1" y="570.0" width="3" height="32.3"/><rect x="811.2" y="578.0" width="3" height="24.3"/><rect x="816.1" y="586.9" width="3" height="15.4"/><rect x="821.0" y="594.0" width="3" height="8.3"/><rect x="837.1" y="590.0" width="3" height="12.3"/><rect x="842.1" y="574.9" width="3" height="27.4"/><rect x="847.0" y="570.0" width="3" height="32.3"/><rect x="858.1" y="580.1" width="3" height="22.2"/><rect x="863.1" y="591.0" width="3" height="11.3"/><rect x="868.0" y="597.0" width="3" height="5.3"/><rect x="872.1" y="583.0" width="3" height="19.3"/><rect x="877.0" y="570.0" width="3" height="32.3"/><rect x="885.3" y="586.0" width="3" height="16.3"/><rect x="890.0" y="595.9" width="3" height="6.4"/><rect x="896.0" y="583.0" width="3" height="19.3"/><rect x="901.1" y="570.0" width="3" height="32.3"/><rect x="911.2" y="582.0" width="3" height="20.3"/><rect x="916.2" y="591.0" width="3" height="11.3"/><rect x="921.1" y="598.0" width="3" height="4.3"/></svg>
<svg style="left:0;top:0" width="2185" height="793" viewBox="0 0 2185 793" shape-rendering="crispEdges" fill="#5a1400" opacity=".27"><rect x="965.9" y="578.9" width="3" height="23.4"/><rect x="971.2" y="588.2" width="3" height="14.1"/><rect x="976.1" y="594.0" width="3" height="8.3"/><rect x="992.1" y="591.0" width="3" height="11.3"/><rect x="997.1" y="574.9" width="3" height="27.4"/><rect x="1002.1" y="570.0" width="3" height="32.3"/><rect x="1017.2" y="578.0" width="3" height="24.3"/><rect x="1022.1" y="586.9" width="3" height="15.4"/><rect x="1027.0" y="594.0" width="3" height="8.3"/><rect x="1043.1" y="590.0" width="3" height="12.3"/><rect x="1048.1" y="574.9" width="3" height="27.4"/><rect x="1053.0" y="570.0" width="3" height="32.3"/><rect x="1064.1" y="580.1" width="3" height="22.2"/><rect x="1069.1" y="591.0" width="3" height="11.3"/><rect x="1074.0" y="597.0" width="3" height="5.3"/><rect x="1078.1" y="583.0" width="3" height="19.3"/><rect x="1083.0" y="570.0" width="3" height="32.3"/><rect x="1091.3" y="586.0" width="3" height="16.3"/><rect x="1096.0" y="595.9" width="3" height="6.4"/><rect x="1102.0" y="583.0" width="3" height="19.3"/><rect x="1107.1" y="570.0" width="3" height="32.3"/><rect x="1117.2" y="582.0" width="3" height="20.3"/><rect x="1122.2" y="591.0" width="3" height="11.3"/><rect x="1127.1" y="598.0" width="3" height="4.3"/><rect x="1171.9" y="578.9" width="3" height="23.4"/><rect x="1177.2" y="588.2" width="3" height="14.1"/><rect x="1182.1" y="594.0" width="3" height="8.3"/><rect x="1198.1" y="591.0" width="3" height="11.3"/><rect x="1203.1" y="574.9" width="3" height="27.4"/><rect x="1208.1" y="570.0" width="3" height="32.3"/><rect x="1223.2" y="578.0" width="3" height="24.3"/><rect x="1228.1" y="586.9" width="3" height="15.4"/><rect x="1233.0" y="594.0" width="3" height="8.3"/><rect x="1249.1" y="590.0" width="3" height="12.3"/><rect x="1254.1" y="574.9" width="3" height="27.4"/><rect x="1259.0" y="570.0" width="3" height="32.3"/><rect x="1270.1" y="580.1" width="3" height="22.2"/><rect x="1275.1" y="591.0" width="3" height="11.3"/><rect x="1280.0" y="597.0" width="3" height="5.3"/><rect x="1284.1" y="583.0" width="3" height="19.3"/><rect x="1289.0" y="570.0" width="3" height="32.3"/><rect x="1297.3" y="586.0" width="3" height="16.3"/><rect x="1302.0" y="595.9" width="3" height="6.4"/><rect x="1308.0" y="583.0" width="3" height="19.3"/><rect x="1313.1" y="570.0" width="3" height="32.3"/><rect x="1323.2" y="582.0" width="3" height="20.3"/><rect x="1328.2" y="591.0" width="3" height="11.3"/><rect x="1333.1" y="598.0" width="3" height="4.3"/><rect x="1377.9" y="578.9" width="3" height="23.4"/><rect x="1383.2" y="588.2" width="3" height="14.1"/><rect x="1388.1" y="594.0" width="3" height="8.3"/><rect x="1404.1" y="591.0" width="3" height="11.3"/><rect x="1409.1" y="574.9" width="3" height="27.4"/><rect x="1414.1" y="570.0" width="3" height="32.3"/><rect x="1429.2" y="578.0" width="3" height="24.3"/><rect x="1434.1" y="586.9" width="3" height="15.4"/><rect x="1439.0" y="594.0" width="3" height="8.3"/><rect x="1455.1" y="590.0" width="3" height="12.3"/><rect x="1460.1" y="574.9" width="3" height="27.4"/><rect x="1465.0" y="570.0" width="3" height="32.3"/><rect x="1476.1" y="580.1" width="3" height="22.2"/><rect x="1481.1" y="591.0" width="3" height="11.3"/><rect x="1486.0" y="597.0" width="3" height="5.3"/><rect x="1490.1" y="583.0" width="3" height="19.3"/><rect x="1495.0" y="570.0" width="3" height="32.3"/><rect x="1503.3" y="586.0" width="3" height="16.3"/><rect x="1508.0" y="595.9" width="3" height="6.4"/><rect x="1514.0" y="583.0" width="3" height="19.3"/><rect x="1519.1" y="570.0" width="3" height="32.3"/><rect x="1529.2" y="582.0" width="3" height="20.3"/><rect x="1534.2" y="591.0" width="3" height="11.3"/><rect x="1539.1" y="598.0" width="3" height="4.3"/><rect x="1583.9" y="578.9" width="3" height="23.4"/><rect x="1589.2" y="588.2" width="3" height="14.1"/><rect x="1594.1" y="594.0" width="3" height="8.3"/><rect x="1610.1" y="591.0" width="3" height="11.3"/><rect x="1615.1" y="574.9" width="3" height="27.4"/><rect x="1620.1" y="570.0" width="3" height="32.3"/><rect x="1635.2" y="578.0" width="3" height="24.3"/><rect x="1640.1" y="586.9" width="3" height="15.4"/><rect x="1645.0" y="594.0" width="3" height="8.3"/><rect x="1661.1" y="590.0" width="3" height="12.3"/><rect x="1666.1" y="574.9" width="3" height="27.4"/><rect x="1671.0" y="570.0" width="3" height="32.3"/><rect x="1682.1" y="580.1" width="3" height="22.2"/><rect x="1687.1" y="591.0" width="3" height="11.3"/><rect x="1692.0" y="597.0" width="3" height="5.3"/><rect x="1696.1" y="583.0" width="3" height="19.3"/><rect x="1701.0" y="570.0" width="3" height="32.3"/><rect x="1709.3" y="586.0" width="3" height="16.3"/><rect x="1714.0" y="595.9" width="3" height="6.4"/><rect x="1720.0" y="583.0" width="3" height="19.3"/><rect x="1725.1" y="570.0" width="3" height="32.3"/><rect x="1735.2" y="582.0" width="3" height="20.3"/><rect x="1740.2" y="591.0" width="3" height="11.3"/><rect x="1745.1" y="598.0" width="3" height="4.3"/><rect x="1789.9" y="578.9" width="3" height="23.4"/><rect x="1795.2" y="588.2" width="3" height="14.1"/><rect x="1800.1" y="594.0" width="3" height="8.3"/><rect x="1816.1" y="591.0" width="3" height="11.3"/><rect x="1821.1" y="574.9" width="3" height="27.4"/><rect x="1826.1" y="570.0" width="3" height="32.3"/><rect x="1841.2" y="578.0" width="3" height="24.3"/><rect x="1846.1" y="586.9" width="3" height="15.4"/><rect x="1851.0" y="594.0" width="3" height="8.3"/><rect x="1867.1" y="590.0" width="3" height="12.3"/><rect x="1872.1" y="574.9" width="3" height="27.4"/><rect x="1877.0" y="570.0" width="3" height="32.3"/><rect x="1888.1" y="580.1" width="3" height="22.2"/><rect x="1893.1" y="591.0" width="3" height="11.3"/><rect x="1898.0" y="597.0" width="3" height="5.3"/><rect x="1902.1" y="583.0" width="3" height="19.3"/><rect x="1907.0" y="570.0" width="3" height="32.3"/><rect x="1915.3" y="586.0" width="3" height="16.3"/><rect x="1920.0" y="595.9" width="3" height="6.4"/><rect x="1926.0" y="583.0" width="3" height="19.3"/><rect x="1931.1" y="570.0" width="3" height="32.3"/><rect x="1941.2" y="582.0" width="3" height="20.3"/><rect x="1946.2" y="591.0" width="3" height="11.3"/><rect x="1951.1" y="598.0" width="3" height="4.3"/><rect x="1995.9" y="578.9" width="3" height="23.4"/><rect x="2001.2" y="588.2" width="3" height="14.1"/><rect x="2006.1" y="594.0" width="3" height="8.3"/><rect x="2022.1" y="591.0" width="3" height="11.3"/><rect x="2027.1" y="574.9" width="3" height="27.4"/><rect x="2032.1" y="570.0" width="3" height="32.3"/><rect x="2047.2" y="578.0" width="3" height="24.3"/><rect x="2052.1" y="586.9" width="3" height="15.4"/><rect x="2057.0" y="594.0" width="3" height="8.3"/><rect x="2073.1" y="590.0" width="3" height="12.3"/><rect x="2078.1" y="574.9" width="3" height="27.4"/><rect x="2083.0" y="570.0" width="3" height="32.3"/><rect x="2094.1" y="580.1" width="3" height="22.2"/><rect x="2099.1" y="591.0" width="3" height="11.3"/><rect x="2104.0" y="597.0" width="3" height="5.3"/><rect x="2108.1" y="583.0" width="3" height="19.3"/><rect x="2113.0" y="570.0" width="3" height="32.3"/><rect x="2121.3" y="586.0" width="3" height="16.3"/><rect x="2126.0" y="595.9" width="3" height="6.4"/><rect x="2132.0" y="583.0" width="3" height="19.3"/><rect x="2137.1" y="570.0" width="3" height="32.3"/><rect x="2147.2" y="582.0" width="3" height="20.3"/><rect x="2152.2" y="591.0" width="3" height="11.3"/><rect x="2157.1" y="598.0" width="3" height="4.3"/></svg>
<svg style="left:0;top:0" width="2185" height="793" viewBox="0 0 2185 793" shape-rendering="crispEdges" fill="#ffd8cc" opacity="1"><rect x="750.0" y="584.0" width="28.2" height="2"/><rect x="801.9" y="584.0" width="33.4" height="2"/><rect x="851.9" y="584.0" width="20.2" height="2"/><rect x="879.1" y="584.0" width="16.1" height="2"/><rect x="903.2" y="584.0" width="29.9" height="2"/></svg>
<svg style="left:0;top:0" width="2185" height="793" viewBox="0 0 2185 793" shape-rendering="crispEdges" fill="#ffd8cc" opacity="0.42"><rect x="956.0" y="584.0" width="28.2" height="2"/><rect x="1007.9" y="584.0" width="33.4" height="2"/><rect x="1057.9" y="584.0" width="20.2" height="2"/><rect x="1085.1" y="584.0" width="16.1" height="2"/><rect x="1109.2" y="584.0" width="29.9" height="2"/><rect x="1162.0" y="584.0" width="28.2" height="2"/><rect x="1213.9" y="584.0" width="33.4" height="2"/><rect x="1263.9" y="584.0" width="20.2" height="2"/><rect x="1291.1" y="584.0" width="16.1" height="2"/><rect x="1315.2" y="584.0" width="29.9" height="2"/><rect x="1368.0" y="584.0" width="28.2" height="2"/><rect x="1419.9" y="584.0" width="33.4" height="2"/><rect x="1469.9" y="584.0" width="20.2" height="2"/><rect x="1497.1" y="584.0" width="16.1" height="2"/><rect x="1521.2" y="584.0" width="29.9" height="2"/><rect x="1574.0" y="584.0" width="28.2" height="2"/><rect x="1625.9" y="584.0" width="33.4" height="2"/><rect x="1675.9" y="584.0" width="20.2" height="2"/><rect x="1703.1" y="584.0" width="16.1" height="2"/><rect x="1727.2" y="584.0" width="29.9" height="2"/><rect x="1780.0" y="584.0" width="28.2" height="2"/><rect x="1831.9" y="584.0" width="33.4" height="2"/><rect x="1881.9" y="584.0" width="20.2" height="2"/><rect x="1909.1" y="584.0" width="16.1" height="2"/><rect x="1933.2" y="584.0" width="29.9" height="2"/><rect x="1986.0" y="584.0" width="28.2" height="2"/><rect x="2037.9" y="584.0" width="33.4" height="2"/><rect x="2087.9" y="584.0" width="20.2" height="2"/><rect x="2115.1" y="584.0" width="16.1" height="2"/><rect x="2139.2" y="584.0" width="29.9" height="2"/></svg>
<div class="rg" style="left:646.5px;top:606px;width:102.5px;height:51px;border-radius:3.500px;background:linear-gradient(#b5300c 0,#b5300c 44px,#a42a0b 46px,#a42a0b 100%)"></div>
<div class="rl" style="left:652.3px;top:609px;color:#ffe8e0">Inst 9</div>
<svg style="left:0;top:0" width="2185" height="793" viewBox="0 0 2185 793" fill="#0e0e0e"><path d="M668.2 605.5 Q671.5 606.7 672.2 610.6 Q673.0 606.7 676.2 605.5Z"/><path d="M668.2 657.5 Q671.5 656.3 672.2 652.4 Q673.0 656.3 676.2 657.5Z"/><rect x="671.8" y="609" width="1" height="45" fill="#000" opacity="0"/><path d="M694.0 605.5 Q697.2 606.7 698.0 610.6 Q698.8 606.7 702.0 605.5Z"/><path d="M694.0 657.5 Q697.2 656.3 698.0 652.4 Q698.8 656.3 702.0 657.5Z"/><rect x="697.5" y="609" width="1" height="45" fill="#000" opacity="0"/><path d="M719.8 605.5 Q723.0 606.7 723.8 610.6 Q724.5 606.7 727.8 605.5Z"/><path d="M719.8 657.5 Q723.0 656.3 723.8 652.4 Q724.5 656.3 727.8 657.5Z"/><rect x="723.2" y="609" width="1" height="45" fill="#000" opacity="0"/></svg>
<div class="rg" style="left:749.5px;top:606px;width:1440.5px;height:51px;border-radius:3.500px 0 0 3.500px;background:linear-gradient(#b5300c 0,#b5300c 44px,#a42a0b 46px,#a42a0b 100%)"></div>
<div class="rl" style="left:755.3px;top:609px;color:#ffe8e0">115</div>
<svg style="left:0;top:0" width="2185" height="793" viewBox="0 0 2185 793" fill="#0e0e0e"><path d="M951.5 605.5 Q954.7 606.7 955.5 610.6 Q956.3 606.7 959.5 605.5Z"/><path d="M951.5 657.5 Q954.7 656.3 955.5 652.4 Q956.3 656.3 959.5 657.5Z"/><rect x="955.0" y="609" width="1" height="45" fill="#000" opacity="0"/><path d="M1157.5 605.5 Q1160.7 606.7 1161.5 610.6 Q1162.3 606.7 1165.5 605.5Z"/><path d="M1157.5 657.5 Q1160.7 656.3 1161.5 652.4 Q1162.3 656.3 1165.5 657.5Z"/><rect x="1161.0" y="609" width="1" height="45" fill="#000" opacity="0"/><path d="M1363.5 605.5 Q1366.7 606.7 1367.5 610.6 Q1368.3 606.7 1371.5 605.5Z"/><path d="M1363.5 657.5 Q1366.7 656.3 1367.5 652.4 Q1368.3 656.3 1371.5 657.5Z"/><rect x="1367.0" y="609" width="1" height="45" fill="#000" opacity="0"/><path d="M1569.5 605.5 Q1572.7 606.7 1573.5 610.6 Q1574.3 606.7 1577.5 605.5Z"/><path d="M1569.5 657.5 Q1572.7 656.3 1573.5 652.4 Q1574.3 656.3 1577.5 657.5Z"/><rect x="1573.0" y="609" width="1" height="45" fill="#000" opacity="0"/><path d="M1775.5 605.5 Q1778.7 606.7 1779.5 610.6 Q1780.3 606.7 1783.5 605.5Z"/><path d="M1775.5 657.5 Q1778.7 656.3 1779.5 652.4 Q1780.3 656.3 1783.5 657.5Z"/><rect x="1779.0" y="609" width="1" height="45" fill="#000" opacity="0"/><path d="M1981.5 605.5 Q1984.7 606.7 1985.5 610.6 Q1986.3 606.7 1989.5 605.5Z"/><path d="M1981.5 657.5 Q1984.7 656.3 1985.5 652.4 Q1986.3 656.3 1989.5 657.5Z"/><rect x="1985.0" y="609" width="1" height="45" fill="#000" opacity="0"/></svg>
<svg style="left:0;top:0" width="2185" height="793" viewBox="0 0 2185 793" shape-rendering="crispEdges" fill="#ffd8cc" opacity="1"><rect x="762.4" y="636.0" width="2.7" height="2"/><rect x="768.5" y="636.0" width="2.7" height="2"/><rect x="775.4" y="636.0" width="8.6" height="2"/><rect x="786.3" y="636.0" width="4.1" height="2"/><rect x="794.6" y="636.0" width="3.8" height="2"/><rect x="803.7" y="635.0" width="7.6" height="2"/><rect x="813.3" y="636.0" width="4.1" height="2"/><rect x="822.3" y="636.0" width="3.4" height="2"/><rect x="826.4" y="636.0" width="9.9" height="2"/><rect x="839.3" y="636.0" width="7.1" height="2"/><rect x="865.3" y="636.0" width="3.0" height="2"/><rect x="871.5" y="636.0" width="3.8" height="2"/><rect x="877.9" y="636.0" width="3.8" height="2"/><rect x="884.7" y="636.0" width="3.8" height="2"/><rect x="892.3" y="636.0" width="6.0" height="2"/><rect x="903.3" y="635.0" width="8.5" height="2"/><rect x="916.5" y="636.0" width="3.0" height="2"/><rect x="922.8" y="636.0" width="3.0" height="2"/><rect x="928.8" y="636.0" width="11.0" height="2"/></svg>
<svg style="left:0;top:0" width="2185" height="793" viewBox="0 0 2185 793" shape-rendering="crispEdges" fill="#ffd8cc" opacity="0.42"><rect x="968.4" y="636.0" width="2.7" height="2"/><rect x="974.5" y="636.0" width="2.7" height="2"/><rect x="981.4" y="636.0" width="8.6" height="2"/><rect x="992.3" y="636.0" width="4.1" height="2"/><rect x="1000.6" y="636.0" width="3.8" height="2"/><rect x="1009.7" y="635.0" width="7.6" height="2"/><rect x="1019.3" y="636.0" width="4.1" height="2"/><rect x="1028.3" y="636.0" width="3.4" height="2"/><rect x="1032.4" y="636.0" width="9.9" height="2"/><rect x="1045.3" y="636.0" width="7.1" height="2"/><rect x="1071.3" y="636.0" width="3.0" height="2"/><rect x="1077.5" y="636.0" width="3.8" height="2"/><rect x="1083.9" y="636.0" width="3.8" height="2"/><rect x="1090.7" y="636.0" width="3.8" height="2"/><rect x="1098.3" y="636.0" width="6.0" height="2"/><rect x="1109.3" y="635.0" width="8.5" height="2"/><rect x="1122.5" y="636.0" width="3.0" height="2"/><rect x="1128.8" y="636.0" width="3.0" height="2"/><rect x="1134.8" y="636.0" width="11.0" height="2"/><rect x="1174.4" y="636.0" width="2.7" height="2"/><rect x="1180.5" y="636.0" width="2.7" height="2"/><rect x="1187.4" y="636.0" width="8.6" height="2"/><rect x="1198.3" y="636.0" width="4.1" height="2"/><rect x="1206.6" y="636.0" width="3.8" height="2"/><rect x="1215.7" y="635.0" width="7.6" height="2"/><rect x="1225.3" y="636.0" width="4.1" height="2"/><rect x="1234.3" y="636.0" width="3.4" height="2"/><rect x="1238.4" y="636.0" width="9.9" height="2"/><rect x="1251.3" y="636.0" width="7.1" height="2"/><rect x="1277.3" y="636.0" width="3.0" height="2"/><rect x="1283.5" y="636.0" width="3.8" height="2"/><rect x="1289.9" y="636.0" width="3.8" height="2"/><rect x="1296.7" y="636.0" width="3.8" height="2"/><rect x="1304.3" y="636.0" width="6.0" height="2"/><rect x="1315.3" y="635.0" width="8.5" height="2"/><rect x="1328.5" y="636.0" width="3.0" height="2"/><rect x="1334.8" y="636.0" width="3.0" height="2"/><rect x="1340.8" y="636.0" width="11.0" height="2"/><rect x="1380.4" y="636.0" width="2.7" height="2"/><rect x="1386.5" y="636.0" width="2.7" height="2"/><rect x="1393.4" y="636.0" width="8.6" height="2"/><rect x="1404.3" y="636.0" width="4.1" height="2"/><rect x="1412.6" y="636.0" width="3.8" height="2"/><rect x="1421.7" y="635.0" width="7.6" height="2"/><rect x="1431.3" y="636.0" width="4.1" height="2"/><rect x="1440.3" y="636.0" width="3.4" height="2"/><rect x="1444.4" y="636.0" width="9.9" height="2"/><rect x="1457.3" y="636.0" width="7.1" height="2"/><rect x="1483.3" y="636.0" width="3.0" height="2"/><rect x="1489.5" y="636.0" width="3.8" height="2"/><rect x="1495.9" y="636.0" width="3.8" height="2"/><rect x="1502.7" y="636.0" width="3.8" height="2"/><rect x="1510.3" y="636.0" width="6.0" height="2"/><rect x="1521.3" y="635.0" width="8.5" height="2"/><rect x="1534.5" y="636.0" width="3.0" height="2"/><rect x="1540.8" y="636.0" width="3.0" height="2"/><rect x="1546.8" y="636.0" width="11.0" height="2"/><rect x="1586.4" y="636.0" width="2.7" height="2"/><rect x="1592.5" y="636.0" width="2.7" height="2"/><rect x="1599.4" y="636.0" width="8.6" height="2"/><rect x="1610.3" y="636.0" width="4.1" height="2"/><rect x="1618.6" y="636.0" width="3.8" height="2"/><rect x="1627.7" y="635.0" width="7.6" height="2"/><rect x="1637.3" y="636.0" width="4.1" height="2"/><rect x="1646.3" y="636.0" width="3.4" height="2"/><rect x="1650.4" y="636.0" width="9.9" height="2"/><rect x="1663.3" y="636.0" width="7.1" height="2"/><rect x="1689.3" y="636.0" width="3.0" height="2"/><rect x="1695.5" y="636.0" width="3.8" height="2"/><rect x="1701.9" y="636.0" width="3.8" height="2"/><rect x="1708.7" y="636.0" width="3.8" height="2"/><rect x="1716.3" y="636.0" width="6.0" height="2"/><rect x="1727.3" y="635.0" width="8.5" height="2"/><rect x="1740.5" y="636.0" width="3.0" height="2"/><rect x="1746.8" y="636.0" width="3.0" height="2"/><rect x="1752.8" y="636.0" width="11.0" height="2"/><rect x="1792.4" y="636.0" width="2.7" height="2"/><rect x="1798.5" y="636.0" width="2.7" height="2"/><rect x="1805.4" y="636.0" width="8.6" height="2"/><rect x="1816.3" y="636.0" width="4.1" height="2"/><rect x="1824.6" y="636.0" width="3.8" height="2"/><rect x="1833.7" y="635.0" width="7.6" height="2"/><rect x="1843.3" y="636.0" width="4.1" height="2"/><rect x="1852.3" y="636.0" width="3.4" height="2"/><rect x="1856.4" y="636.0" width="9.9" height="2"/><rect x="1869.3" y="636.0" width="7.1" height="2"/><rect x="1895.3" y="636.0" width="3.0" height="2"/><rect x="1901.5" y="636.0" width="3.8" height="2"/><rect x="1907.9" y="636.0" width="3.8" height="2"/><rect x="1914.7" y="636.0" width="3.8" height="2"/><rect x="1922.3" y="636.0" width="6.0" height="2"/><rect x="1933.3" y="635.0" width="8.5" height="2"/><rect x="1946.5" y="636.0" width="3.0" height="2"/><rect x="1952.8" y="636.0" width="3.0" height="2"/><rect x="1958.8" y="636.0" width="11.0" height="2"/><rect x="1998.4" y="636.0" width="2.7" height="2"/><rect x="2004.5" y="636.0" width="2.7" height="2"/><rect x="2011.4" y="636.0" width="8.6" height="2"/><rect x="2022.3" y="636.0" width="4.1" height="2"/><rect x="2030.6" y="636.0" width="3.8" height="2"/><rect x="2039.7" y="635.0" width="7.6" height="2"/><rect x="2049.3" y="636.0" width="4.1" height="2"/><rect x="2058.3" y="636.0" width="3.4" height="2"/><rect x="2062.4" y="636.0" width="9.9" height="2"/><rect x="2075.3" y="636.0" width="7.1" height="2"/><rect x="2101.3" y="636.0" width="3.0" height="2"/><rect x="2107.5" y="636.0" width="3.8" height="2"/><rect x="2113.9" y="636.0" width="3.8" height="2"/><rect x="2120.7" y="636.0" width="3.8" height="2"/><rect x="2128.3" y="636.0" width="6.0" height="2"/><rect x="2139.3" y="635.0" width="8.5" height="2"/><rect x="2152.5" y="636.0" width="3.0" height="2"/><rect x="2158.8" y="636.0" width="3.0" height="2"/><rect x="2164.8" y="636.0" width="11.0" height="2"/></svg>
<svg style="left:0;top:0" width="2185" height="793" viewBox="0 0 2185 793" shape-rendering="crispEdges" fill="#ffd8cc" opacity="1"><rect x="660.0" y="636.0" width="2.5" height="2"/><rect x="665.0" y="636.0" width="2.5" height="2"/></svg>
<svg style="left:0;top:0" width="2185" height="793" viewBox="0 0 2185 793" shape-rendering="crispEdges" fill="#ffd8cc" opacity="0.33"><rect x="685.5" y="636.0" width="2.5" height="2"/><rect x="690.5" y="636.0" width="2.5" height="2"/><rect x="711.0" y="636.0" width="2.5" height="2"/><rect x="716.0" y="636.0" width="2.5" height="2"/><rect x="737.0" y="636.0" width="2.5" height="2"/><rect x="742.0" y="636.0" width="2.5" height="2"/></svg>
<div class="rg" style="left:337.5px;top:660px;width:849.5px;height:51px;border-radius:3.500px;background:linear-gradient(#2f5b8e 0,#2f5b8e 36px,#2b5280 40px)"></div>
<div class="rl" style="left:343.3px;top:663px;color:#dce8f8">NL4-124_1 &nbsp;<svg class="ud" style="margin:0 0 0 1px;vertical-align:-1px" width="16" height="10" viewBox="0 0 16 10"><path d="M5 .7 L.9 5 L5 9.300 M11 .7 L15.100 5 L11 9.300 M5.500 3.800H10.500 M5.500 6.200H10.500" fill="none" stroke="currentColor" stroke-width="1.050"/></svg></div>
<div class="rg" style="left:1985.5px;top:660px;width:204.5px;height:51px;border-radius:3.500px 0 0 3.500px;background:linear-gradient(#2f5b8e 0,#2f5b8e 36px,#2b5280 40px)"></div>
<div class="rl" style="left:1991.3px;top:663px;color:#dce8f8">NL4-124_1.1 &nbsp;<svg class="ud" style="margin:0 0 0 1px;vertical-align:-1px" width="16" height="10" viewBox="0 0 16 10"><path d="M5 .7 L.9 5 L5 9.300 M11 .7 L15.100 5 L11 9.300 M5.500 3.800H10.500 M5.500 6.200H10.500" fill="none" stroke="currentColor" stroke-width="1.050"/></svg></div>
<svg style="left:0;top:0" width="2185" height="793" viewBox="0 0 2185 793" shape-rendering="crispEdges" fill="#a9c6ea"><rect x="338.5" y="694.0" width="847.5" height="1"/><rect x="340.5" y="692.0" width="1" height="5"/><rect x="347.5" y="689.0" width="1" height="11"/><rect x="350.5" y="691.0" width="1" height="7"/><rect x="356.5" y="693.0" width="1" height="3"/><rect x="361.5" y="693.0" width="1" height="3"/><rect x="368.5" y="691.0" width="1" height="7"/><rect x="374.5" y="691.0" width="1" height="7"/><rect x="385.5" y="693.0" width="1" height="3"/><rect x="391.5" y="693.0" width="1" height="3"/><rect x="397.5" y="691.0" width="1" height="7"/><rect x="403.5" y="692.0" width="1" height="5"/><rect x="411.5" y="692.0" width="1" height="5"/><rect x="415.5" y="692.0" width="1" height="5"/><rect x="424.5" y="692.0" width="1" height="5"/><rect x="429.5" y="693.0" width="1" height="3"/><rect x="432.5" y="692.0" width="1" height="5"/><rect x="438.5" y="692.0" width="1" height="5"/><rect x="443.5" y="692.0" width="1" height="5"/><rect x="450.5" y="692.0" width="1" height="5"/><rect x="461.5" y="692.0" width="1" height="5"/><rect x="466.5" y="692.0" width="1" height="5"/><rect x="474.5" y="692.0" width="1" height="5"/><rect x="477.5" y="692.0" width="1" height="5"/><rect x="485.5" y="692.0" width="1" height="5"/><rect x="490.5" y="692.0" width="1" height="5"/><rect x="494.5" y="692.0" width="1" height="5"/><rect x="500.5" y="693.0" width="1" height="3"/><rect x="507.5" y="693.0" width="1" height="3"/><rect x="513.5" y="692.0" width="1" height="5"/><rect x="519.5" y="691.0" width="1" height="7"/><rect x="526.5" y="692.0" width="1" height="5"/><rect x="535.5" y="691.0" width="1" height="7"/><rect x="540.5" y="693.0" width="1" height="3"/><rect x="546.5" y="693.0" width="1" height="3"/><rect x="553.5" y="691.0" width="1" height="7"/><rect x="556.5" y="689.0" width="1" height="11"/><rect x="564.5" y="692.0" width="1" height="5"/><rect x="572.5" y="693.0" width="1" height="3"/><rect x="581.5" y="693.0" width="1" height="3"/><rect x="586.5" y="692.0" width="1" height="5"/><rect x="590.5" y="692.0" width="1" height="5"/><rect x="599.5" y="692.0" width="1" height="5"/><rect x="610.5" y="692.0" width="1" height="5"/><rect x="621.5" y="692.0" width="1" height="5"/><rect x="630.5" y="693.0" width="1" height="3"/><rect x="637.5" y="692.0" width="1" height="5"/><rect x="640.5" y="691.0" width="1" height="7"/><rect x="644.5" y="692.0" width="1" height="5"/><rect x="651.5" y="689.0" width="1" height="11"/><rect x="658.5" y="692.0" width="1" height="5"/><rect x="665.5" y="692.0" width="1" height="5"/><rect x="676.5" y="693.0" width="1" height="3"/><rect x="682.5" y="692.0" width="1" height="5"/><rect x="688.5" y="692.0" width="1" height="5"/><rect x="692.5" y="692.0" width="1" height="5"/><rect x="698.5" y="691.0" width="1" height="7"/><rect x="703.5" y="693.0" width="1" height="3"/><rect x="707.5" y="689.0" width="1" height="11"/><rect x="715.5" y="693.0" width="1" height="3"/><rect x="721.5" y="692.0" width="1" height="5"/><rect x="727.5" y="691.0" width="1" height="7"/><rect x="735.5" y="692.0" width="1" height="5"/><rect x="738.5" y="693.0" width="1" height="3"/><rect x="747.5" y="692.0" width="1" height="5"/><rect x="753.5" y="692.0" width="1" height="5"/><rect x="758.5" y="691.0" width="1" height="7"/><rect x="762.5" y="692.0" width="1" height="5"/><rect x="770.5" y="692.0" width="1" height="5"/><rect x="775.5" y="693.0" width="1" height="3"/><rect x="783.5" y="692.0" width="1" height="5"/><rect x="788.5" y="691.0" width="1" height="7"/><rect x="793.5" y="689.0" width="1" height="11"/><rect x="802.5" y="691.0" width="1" height="7"/><rect x="809.5" y="691.0" width="1" height="7"/><rect x="815.5" y="692.0" width="1" height="5"/><rect x="824.5" y="691.0" width="1" height="7"/><rect x="829.5" y="693.0" width="1" height="3"/><rect x="837.5" y="689.0" width="1" height="11"/><rect x="842.5" y="691.0" width="1" height="7"/><rect x="849.5" y="692.0" width="1" height="5"/><rect x="853.5" y="691.0" width="1" height="7"/><rect x="859.5" y="689.0" width="1" height="11"/><rect x="870.5" y="689.0" width="1" height="11"/><rect x="877.5" y="693.0" width="1" height="3"/><rect x="884.5" y="693.0" width="1" height="3"/><rect x="890.5" y="692.0" width="1" height="5"/><rect x="901.5" y="692.0" width="1" height="5"/><rect x="910.5" y="692.0" width="1" height="5"/><rect x="916.5" y="692.0" width="1" height="5"/><rect x="921.5" y="693.0" width="1" height="3"/><rect x="930.5" y="689.0" width="1" height="11"/><rect x="936.5" y="692.0" width="1" height="5"/><rect x="942.5" y="691.0" width="1" height="7"/><rect x="948.5" y="689.0" width="1" height="11"/><rect x="955.5" y="692.0" width="1" height="5"/><rect x="961.5" y="692.0" width="1" height="5"/><rect x="969.5" y="692.0" width="1" height="5"/><rect x="974.5" y="691.0" width="1" height="7"/><rect x="981.5" y="692.0" width="1" height="5"/><rect x="992.5" y="692.0" width="1" height="5"/><rect x="1003.5" y="692.0" width="1" height="5"/><rect x="1009.5" y="692.0" width="1" height="5"/><rect x="1018.5" y="692.0" width="1" height="5"/><rect x="1022.5" y="691.0" width="1" height="7"/><rect x="1027.5" y="689.0" width="1" height="11"/><rect x="1035.5" y="692.0" width="1" height="5"/><rect x="1046.5" y="692.0" width="1" height="5"/><rect x="1049.5" y="692.0" width="1" height="5"/><rect x="1054.5" y="691.0" width="1" height="7"/><rect x="1059.5" y="692.0" width="1" height="5"/><rect x="1064.5" y="693.0" width="1" height="3"/><rect x="1073.5" y="692.0" width="1" height="5"/><rect x="1078.5" y="693.0" width="1" height="3"/><rect x="1083.5" y="693.0" width="1" height="3"/><rect x="1090.5" y="692.0" width="1" height="5"/><rect x="1099.5" y="692.0" width="1" height="5"/><rect x="1110.5" y="693.0" width="1" height="3"/><rect x="1118.5" y="691.0" width="1" height="7"/><rect x="1125.5" y="691.0" width="1" height="7"/><rect x="1129.5" y="692.0" width="1" height="5"/><rect x="1135.5" y="692.0" width="1" height="5"/><rect x="1138.5" y="692.0" width="1" height="5"/><rect x="1146.5" y="692.0" width="1" height="5"/><rect x="1154.5" y="693.0" width="1" height="3"/></svg>
<svg style="left:0;top:0" width="2185" height="793" viewBox="0 0 2185 793" shape-rendering="crispEdges" fill="#a9c6ea"><rect x="1986.5" y="694.0" width="198.5" height="1"/><rect x="1988.5" y="692.0" width="1" height="5"/><rect x="1995.5" y="689.0" width="1" height="11"/><rect x="1998.5" y="691.0" width="1" height="7"/><rect x="2004.5" y="693.0" width="1" height="3"/><rect x="2009.5" y="693.0" width="1" height="3"/><rect x="2016.5" y="691.0" width="1" height="7"/><rect x="2022.5" y="691.0" width="1" height="7"/><rect x="2033.5" y="693.0" width="1" height="3"/><rect x="2039.5" y="693.0" width="1" height="3"/><rect x="2045.5" y="691.0" width="1" height="7"/><rect x="2051.5" y="692.0" width="1" height="5"/><rect x="2059.5" y="692.0" width="1" height="5"/><rect x="2063.5" y="692.0" width="1" height="5"/><rect x="2072.5" y="692.0" width="1" height="5"/><rect x="2077.5" y="693.0" width="1" height="3"/><rect x="2080.5" y="692.0" width="1" height="5"/><rect x="2086.5" y="692.0" width="1" height="5"/><rect x="2091.5" y="692.0" width="1" height="5"/><rect x="2098.5" y="692.0" width="1" height="5"/><rect x="2109.5" y="692.0" width="1" height="5"/><rect x="2114.5" y="692.0" width="1" height="5"/><rect x="2122.5" y="692.0" width="1" height="5"/><rect x="2125.5" y="692.0" width="1" height="5"/><rect x="2133.5" y="692.0" width="1" height="5"/><rect x="2138.5" y="692.0" width="1" height="5"/><rect x="2142.5" y="692.0" width="1" height="5"/><rect x="2148.5" y="693.0" width="1" height="3"/><rect x="2155.5" y="693.0" width="1" height="3"/><rect x="2161.5" y="692.0" width="1" height="5"/><rect x="2167.5" y="691.0" width="1" height="7"/><rect x="2174.5" y="692.0" width="1" height="5"/></svg>
<div class="abs" style="left:365.700px;top:116px;width:1px;height:677px;background:#151515;opacity:.8"></div>
<div class="abs" style="left:366.800px;top:108px;width:1.300px;height:685px;background:#dadada"></div>
<svg style="left:360px;top:105px" width="15" height="14" viewBox="0 0 15 14"><defs><linearGradient id="ph" x1="0" y1="0" x2="0" y2="1"><stop offset="0" stop-color="#b4b4b4"/><stop offset=".3" stop-color="#8c8c8c"/><stop offset="1" stop-color="#6a6a6a"/></linearGradient></defs><path d="M2.200 .7 H12.800 Q14.200 .7 14.200 2.200 V6.300 L7.500 13.200 L.8 6.300 V2.200 Q.8 .7 2.200 .7Z" fill="url(#ph)" stroke="#0c0c0c" stroke-width="1.200"/><path d="M2.500 1.800 H12.500" stroke="#dcdcdc" stroke-width=".9" opacity=".8"/><rect x="6.700" y="1.200" width="1.500" height="12" fill="#ececec"/></svg>
</div></body></html>
